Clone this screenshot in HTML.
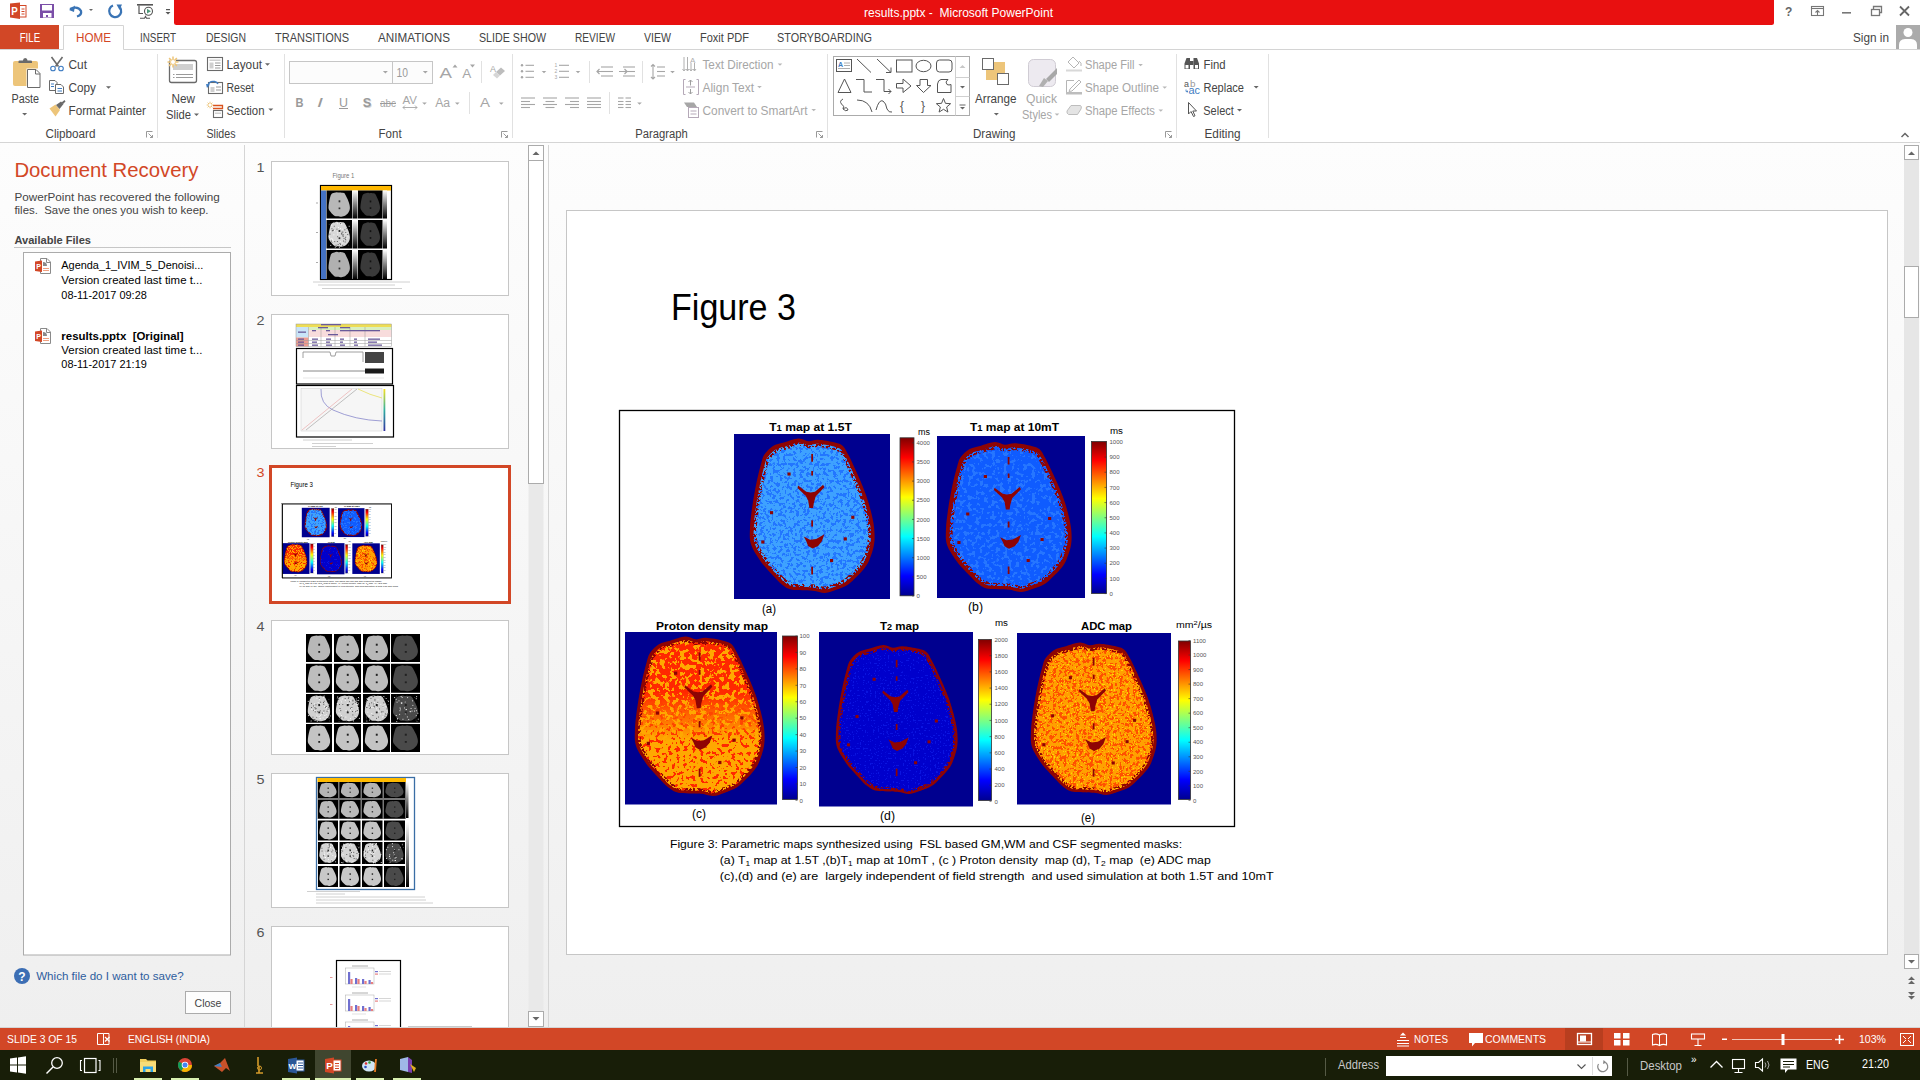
<!DOCTYPE html><html><head><meta charset="utf-8"><title>results.pptx - Microsoft PowerPoint</title><style>html,body{margin:0;padding:0;width:1920px;height:1080px;overflow:hidden;background:#fff}svg{display:block;font-family:"Liberation Sans",sans-serif}text{white-space:pre}</style></head><body><svg width="1920" height="1080" viewBox="0 0 1920 1080" xml:space="preserve"><defs><linearGradient id="jet" x1="0" y1="1" x2="0" y2="0"><stop offset="0" stop-color="#00008F"/><stop offset="0.125" stop-color="#0000FF"/><stop offset="0.375" stop-color="#00FFFF"/><stop offset="0.625" stop-color="#FFFF00"/><stop offset="0.875" stop-color="#FF0000"/><stop offset="1" stop-color="#800000"/></linearGradient><linearGradient id="gbar" x1="0" y1="0" x2="0" y2="1"><stop offset="0" stop-color="#fff"/><stop offset="1" stop-color="#000"/></linearGradient><linearGradient id="vir" x1="0" y1="0" x2="0" y2="1"><stop offset="0" stop-color="#F8E020"/><stop offset="0.5" stop-color="#30B0A0"/><stop offset="1" stop-color="#3030A0"/></linearGradient><filter id="fT1a" x="0" y="0" width="1" height="1" color-interpolation-filters="sRGB"><feTurbulence type="fractalNoise" baseFrequency="0.3" numOctaves="3" seed="3" result="n"/><feComponentTransfer in="n" result="m"><feFuncA type="linear" slope="30" intercept="-16.200"/></feComponentTransfer><feComposite in="SourceGraphic" in2="m" operator="in"/></filter><filter id="fT1b" x="0" y="0" width="1" height="1" color-interpolation-filters="sRGB"><feTurbulence type="fractalNoise" baseFrequency="0.25" numOctaves="3" seed="8" result="n"/><feComponentTransfer in="n" result="m"><feFuncA type="linear" slope="30" intercept="-16.800"/></feComponentTransfer><feComposite in="SourceGraphic" in2="m" operator="in"/></filter><filter id="fPD" x="0" y="0" width="1" height="1" color-interpolation-filters="sRGB"><feTurbulence type="fractalNoise" baseFrequency="0.2" numOctaves="3" seed="5" result="n"/><feComponentTransfer in="n" result="m"><feFuncA type="linear" slope="30" intercept="-13.200"/></feComponentTransfer><feComposite in="SourceGraphic" in2="m" operator="in"/></filter><filter id="fPD2" x="0" y="0" width="1" height="1" color-interpolation-filters="sRGB"><feTurbulence type="fractalNoise" baseFrequency="0.25" numOctaves="3" seed="6" result="n"/><feComponentTransfer in="n" result="m"><feFuncA type="linear" slope="30" intercept="-17.400"/></feComponentTransfer><feComposite in="SourceGraphic" in2="m" operator="in"/></filter><filter id="fPDd" x="0" y="0" width="1" height="1" color-interpolation-filters="sRGB"><feTurbulence type="fractalNoise" baseFrequency="0.9" numOctaves="1" seed="11" result="n"/><feComponentTransfer in="n" result="m"><feFuncA type="linear" slope="30" intercept="-24.000"/></feComponentTransfer><feComposite in="SourceGraphic" in2="m" operator="in"/></filter><filter id="fT2" x="0" y="0" width="1" height="1" color-interpolation-filters="sRGB"><feTurbulence type="fractalNoise" baseFrequency="0.6" numOctaves="1" seed="2" result="n"/><feComponentTransfer in="n" result="m"><feFuncA type="linear" slope="30" intercept="-18.600"/></feComponentTransfer><feComposite in="SourceGraphic" in2="m" operator="in"/></filter><filter id="fADC" x="0" y="0" width="1" height="1" color-interpolation-filters="sRGB"><feTurbulence type="fractalNoise" baseFrequency="0.3" numOctaves="3" seed="4" result="n"/><feComponentTransfer in="n" result="m"><feFuncA type="linear" slope="30" intercept="-15.900"/></feComponentTransfer><feComposite in="SourceGraphic" in2="m" operator="in"/></filter><filter id="fADCy" x="0" y="0" width="1" height="1" color-interpolation-filters="sRGB"><feTurbulence type="fractalNoise" baseFrequency="0.7" numOctaves="1" seed="9" result="n"/><feComponentTransfer in="n" result="m"><feFuncA type="linear" slope="30" intercept="-19.800"/></feComponentTransfer><feComposite in="SourceGraphic" in2="m" operator="in"/></filter><filter id="fRim" x="0" y="0" width="1" height="1" color-interpolation-filters="sRGB"><feTurbulence type="fractalNoise" baseFrequency="0.45" numOctaves="2" seed="12" result="n"/><feComponentTransfer in="n" result="m"><feFuncA type="linear" slope="30" intercept="-15.000"/></feComponentTransfer><feComposite in="SourceGraphic" in2="m" operator="in"/></filter></defs><rect x="0" y="0" width="1920" height="25" fill="#ffffff"/><path d="M174 0H1774V22.5Q1774 25 1771.5 25H176.5Q174 25 174 22.5Z" fill="#E81010"/><rect x="19.5" y="5.5" width="6.5" height="11.5" fill="#fff" stroke="#D24726" stroke-width="1"/><line x1="21.5" y1="9" x2="24.5" y2="9" stroke="#D24726" stroke-width="1"/><line x1="21.5" y1="11.5" x2="24.5" y2="11.5" stroke="#D24726" stroke-width="1"/><line x1="21.5" y1="14" x2="24.5" y2="14" stroke="#D24726" stroke-width="1"/><path d="M10 3.5L20 2.5V19L10 17.5Z" fill="#D24726"/><text x="11.2" y="14.8" font-size="10" fill="#fff" font-weight="bold" textLength="6.5" lengthAdjust="spacingAndGlyphs">P</text><rect x="40" y="4" width="14" height="14" fill="#7B4FA8"/><rect x="42" y="5" width="10" height="5.5" fill="#fff"/><rect x="43" y="13" width="8.5" height="4.5" fill="#fff"/><rect x="46" y="15" width="2" height="2" fill="#7B4FA8"/><path d="M70 9 Q78 5.5 81 11 Q82 15 77 16.5" fill="none" stroke="#3A74B5" stroke-width="2.3"/><path d="M69 10L75 5.5L74 12Z" fill="#3A74B5"/><path d="M89 9h4l-2 2z" fill="#666"/><path d="M113 5.5 A6 6 0 1 0 120 7.5" fill="none" stroke="#3A74B5" stroke-width="2.3"/><path d="M116.5 4.5L122 4.5L119.5 10Z" fill="#3A74B5"/><rect x="137" y="4" width="16" height="1.6" fill="#555"/><path d="M139 5.5V13.5H143" fill="none" stroke="#555" stroke-width="1.2"/><circle cx="148.5" cy="11.2" r="4" fill="#fff" stroke="#555" stroke-width="1.1"/><path d="M147 8.8L151 11.2L147 13.6Z" fill="#4E9A7A"/><path d="M140 18.3H144.5L145.5 16.5L146.5 18.3H150" fill="none" stroke="#555" stroke-width="1.1"/><rect x="166" y="9" width="4" height="1.2" fill="#555"/><path d="M165.5 12h5l-2.5 2.5z" fill="#555"/><text x="864" y="17" font-size="13" fill="#fff" textLength="189" lengthAdjust="spacingAndGlyphs">results.pptx -  Microsoft PowerPoint</text><text x="1785" y="16" font-size="12" fill="#666" font-weight="bold">?</text><rect x="1811.5" y="6.5" width="12" height="9" fill="none" stroke="#777" stroke-width="1.1"/><line x1="1811.5" y1="8.5" x2="1823.5" y2="8.5" stroke="#777" stroke-width="1.1"/><path d="M1817.5 15V10.5M1815.5 12.5L1817.5 10.5L1819.5 12.5" fill="none" stroke="#777" stroke-width="1.1"/><rect x="1842" y="12" width="9" height="1.6" fill="#777"/><rect x="1871.5" y="9.5" width="8" height="6" fill="none" stroke="#777" stroke-width="1.3"/><path d="M1873.5 9.5V6.5H1881.5V12.5H1879.5" fill="none" stroke="#777" stroke-width="1.3"/><path d="M1900 6.5L1909 15.5M1909 6.5L1900 15.5" fill="none" stroke="#666" stroke-width="1.8"/><rect x="0" y="25" width="1920" height="25" fill="#fff"/><rect x="0" y="25" width="59" height="25" fill="#D24726"/><text x="19.7" y="42" font-size="13" fill="#fff" textLength="20.5" lengthAdjust="spacingAndGlyphs">FILE</text><path d="M0 49.5H63.5V25.5H123.5V49.5H1920" fill="none" stroke="#D4D4D4" stroke-width="1"/><text x="76" y="42" font-size="13" fill="#D24726" textLength="35" lengthAdjust="spacingAndGlyphs">HOME</text><text x="140" y="42" font-size="13" fill="#444444" textLength="36" lengthAdjust="spacingAndGlyphs">INSERT</text><text x="206" y="42" font-size="13" fill="#444444" textLength="40" lengthAdjust="spacingAndGlyphs">DESIGN</text><text x="275" y="42" font-size="13" fill="#444444" textLength="74" lengthAdjust="spacingAndGlyphs">TRANSITIONS</text><text x="378" y="42" font-size="13" fill="#444444" textLength="72" lengthAdjust="spacingAndGlyphs">ANIMATIONS</text><text x="479" y="42" font-size="13" fill="#444444" textLength="67" lengthAdjust="spacingAndGlyphs">SLIDE SHOW</text><text x="575" y="42" font-size="13" fill="#444444" textLength="40" lengthAdjust="spacingAndGlyphs">REVIEW</text><text x="644" y="42" font-size="13" fill="#444444" textLength="27" lengthAdjust="spacingAndGlyphs">VIEW</text><text x="700" y="42" font-size="13" fill="#444444" textLength="49" lengthAdjust="spacingAndGlyphs">Foxit PDF</text><text x="777" y="42" font-size="13" fill="#444444" textLength="95" lengthAdjust="spacingAndGlyphs">STORYBOARDING</text><text x="1853" y="41.5" font-size="12.5" fill="#444444" textLength="36" lengthAdjust="spacingAndGlyphs">Sign in</text><rect x="1896" y="25" width="24" height="24" fill="#ABABAB"/><circle cx="1908" cy="32.5" r="4.5" fill="#fff"/><path d="M1899 49V45Q1899 39.5 1905 39H1911Q1917 39.5 1917 45V49Z" fill="#fff"/><rect x="0" y="50" width="1920" height="92" fill="#ffffff"/><line x1="0" y1="142.5" x2="1920" y2="142.5" stroke="#D5D5D5" stroke-width="1"/><path d="M13 63Q13 61 15 61H36Q38 61 38 63V84Q38 86 36 86H15Q13 86 13 84Z" fill="#EDC57A"/><path d="M18.5 63V61.5Q18.5 60.5 19.5 60.5H23Q23 58 25.2 58Q27.5 58 27.5 60.5H31Q32 60.5 32 61.5V63Z" fill="#6A6A6A"/><rect x="26.5" y="68.5" width="14" height="19" fill="#fff"/><path d="M27.5 69.5H36L40 73.5V87.5H27.5Z" fill="#fff" stroke="#6A6A6A" stroke-width="1"/><path d="M35.5 69.5V74H40" fill="none" stroke="#6A6A6A" stroke-width="1"/><text x="11.5" y="103" font-size="12" fill="#444444" textLength="27.5" lengthAdjust="spacingAndGlyphs">Paste</text><path d="M22.1 113h5.0l-2.5 2.5z" fill="#666"/><path d="M51.5 57L58.5 66.5M62.5 57L55.5 66.5" fill="none" stroke="#6A6A6A" stroke-width="1.6"/><circle cx="53" cy="68.5" r="2.3" fill="none" stroke="#3E7CC2" stroke-width="1.1"/><circle cx="61" cy="68.5" r="2.3" fill="none" stroke="#3E7CC2" stroke-width="1.1"/><text x="68.5" y="69" font-size="12" fill="#444444" textLength="18.5" lengthAdjust="spacingAndGlyphs">Cut</text><path d="M49.5 80.5H55L57 82.5V90.5H49.5Z" fill="#fff" stroke="#6A6A6A" stroke-width="1"/><path d="M55.5 84.5H61L63.5 87V93.5H55.5Z" fill="#fff" stroke="#6A6A6A" stroke-width="1"/><line x1="51" y1="84" x2="54" y2="84" stroke="#3E7CC2" stroke-width="1"/><line x1="51" y1="86.5" x2="54" y2="86.5" stroke="#3E7CC2" stroke-width="1"/><line x1="57.5" y1="88.5" x2="62" y2="88.5" stroke="#3E7CC2" stroke-width="1"/><line x1="57.5" y1="91" x2="62" y2="91" stroke="#3E7CC2" stroke-width="1"/><text x="68.5" y="91.5" font-size="12" fill="#444444" textLength="27.5" lengthAdjust="spacingAndGlyphs">Copy</text><path d="M106.0 86.2h5.0l-2.5 2.5z" fill="#666"/><path d="M49.5 108.5L55.5 104.5L60 110L55.5 116.5Z" fill="#EDC57A"/><path d="M56 105L61 101.5L63.5 104L59.5 109Z" fill="#6A6A6A"/><path d="M61.5 102.5L64.5 100L65.5 101.5L63 104Z" fill="#6A6A6A"/><text x="68.5" y="115" font-size="12" fill="#444444" textLength="77.5" lengthAdjust="spacingAndGlyphs">Format Painter</text><text x="45.5" y="137.5" font-size="12" fill="#444444" textLength="50" lengthAdjust="spacingAndGlyphs">Clipboard</text><path d="M146.5 137.5V131.5H152.5M148.5 133.5L152.5 137.5M152.5 135V137.5H150" fill="none" stroke="#999" stroke-width="1"/><line x1="157.5" y1="54" x2="157.5" y2="138" stroke="#E1E1E1" stroke-width="1"/><path d="M169.5 62.5Q169.5 60.5 171.5 60.5H194.5Q196.5 60.5 196.5 62.5V80.5Q196.5 82.5 194.5 82.5H171.5Q169.5 82.5 169.5 80.5Z" fill="#fff" stroke="#6A6A6A" stroke-width="1.3"/><rect x="173" y="64" width="20" height="6" fill="#CFCFCF"/><line x1="173" y1="74.5" x2="174.5" y2="74.5" stroke="#999" stroke-width="1"/><line x1="176" y1="74.5" x2="193" y2="74.5" stroke="#999" stroke-width="1"/><line x1="173" y1="77.5" x2="174.5" y2="77.5" stroke="#999" stroke-width="1"/><line x1="176" y1="77.5" x2="193" y2="77.5" stroke="#999" stroke-width="1"/><circle cx="173" cy="62" r="3.2" fill="#fff"/><path d="M178.50 62.00L167.50 62.00M176.89 65.89L169.11 58.11M173.00 67.50L173.00 56.50M169.11 65.89L176.89 58.11" fill="none" stroke="#EDC57A" stroke-width="1.5"/><circle cx="173" cy="62" r="2" fill="#fff"/><text x="171.5" y="103" font-size="12" fill="#444444" textLength="23.5" lengthAdjust="spacingAndGlyphs">New</text><text x="166" y="118.7" font-size="12" fill="#444444" textLength="25" lengthAdjust="spacingAndGlyphs">Slide</text><path d="M194.0 113.5h5.0l-2.5 2.5z" fill="#666"/><rect x="207.5" y="57.5" width="15" height="13" fill="#fff" stroke="#6A6A6A" stroke-width="1.1"/><rect x="209.5" y="59.5" width="11" height="1.5" fill="#CFCFCF"/><rect x="209.5" y="62.5" width="4" height="6" fill="#CFCFCF"/><line x1="215" y1="63" x2="220.5" y2="63" stroke="#999" stroke-width="1"/><line x1="215" y1="65.5" x2="220.5" y2="65.5" stroke="#999" stroke-width="1"/><line x1="215" y1="68" x2="220.5" y2="68" stroke="#999" stroke-width="1"/><text x="226.5" y="69" font-size="12" fill="#444444" textLength="35.5" lengthAdjust="spacingAndGlyphs">Layout</text><path d="M265.0 63.2h5.0l-2.5 2.5z" fill="#666"/><rect x="208.5" y="82.5" width="14" height="11" fill="#fff" stroke="#6A6A6A" stroke-width="1.1"/><rect x="210.5" y="87" width="4" height="5" fill="#CFCFCF"/><line x1="216" y1="87" x2="221" y2="87" stroke="#999" stroke-width="1"/><line x1="216" y1="90" x2="221" y2="90" stroke="#999" stroke-width="1"/><path d="M207.5 86.5Q209 80.5 214.5 81.5Q217 82 218 84" fill="none" stroke="#3E7CC2" stroke-width="1.4"/><path d="M206 84L210 84.5L207 88Z" fill="#3E7CC2"/><text x="226.5" y="91.5" font-size="12" fill="#444444" textLength="27.5" lengthAdjust="spacingAndGlyphs">Reset</text><path d="M213 105.5H222.5V108.5H213" fill="none" stroke="#D9531E" stroke-width="1.3"/><rect x="213.5" y="110.5" width="9" height="7" fill="#fff" stroke="#6A6A6A" stroke-width="1.1"/><rect x="215" y="112.5" width="6" height="1.5" fill="#CFCFCF"/><path d="M213.30 105.00L206.70 105.00M212.33 107.33L207.67 102.67M210.00 108.30L210.00 101.70M207.67 107.33L212.33 102.67" fill="none" stroke="#EDC57A" stroke-width="1"/><circle cx="210" cy="105" r="1.2" fill="#fff"/><text x="226.5" y="115" font-size="12" fill="#444444" textLength="38" lengthAdjust="spacingAndGlyphs">Section</text><path d="M268.3 108.5h5.0l-2.5 2.5z" fill="#666"/><text x="206.5" y="137.5" font-size="12" fill="#444444" textLength="29" lengthAdjust="spacingAndGlyphs">Slides</text><line x1="284.5" y1="54" x2="284.5" y2="138" stroke="#E1E1E1" stroke-width="1"/><rect x="289.5" y="61.5" width="103" height="22" fill="#FCFCFC" stroke="#C6C6C6" stroke-width="1"/><rect x="392.5" y="61.5" width="40" height="22" fill="#FCFCFC" stroke="#C6C6C6" stroke-width="1"/><path d="M382.9 71h5.0l-2.5 2.5z" fill="#A6A6A6"/><path d="M422.8 71h5.0l-2.5 2.5z" fill="#A6A6A6"/><text x="396.5" y="76.7" font-size="12" fill="#9A9A9A" textLength="11.5" lengthAdjust="spacingAndGlyphs">10</text><text x="439.5" y="77.7" font-size="15" fill="#A6A6A6" textLength="12.5" lengthAdjust="spacingAndGlyphs">A</text><path d="M452.5 67.5L455 64.5L457.5 67.5Z" fill="#A6A6A6"/><text x="462.2" y="77.7" font-size="12" fill="#A6A6A6" textLength="9" lengthAdjust="spacingAndGlyphs">A</text><path d="M470 64.5H475L472.5 67.5Z" fill="#A6A6A6"/><line x1="481.5" y1="61" x2="481.5" y2="83" stroke="#E1E1E1" stroke-width="1"/><text x="490" y="72" font-size="9" fill="#A6A6A6">A</text><path d="M496 72L501 67.5L505 71L500 75.5Z" fill="#BDBDBD"/><path d="M493 75L496 72L500 75.5L497 78.5Z" fill="#D6D6D6"/><text x="295.5" y="106.8" font-size="12" fill="#9A9A9A" font-weight="bold" textLength="8" lengthAdjust="spacingAndGlyphs">B</text><text x="317" y="106.8" font-size="12" fill="#9A9A9A" textLength="6" lengthAdjust="spacingAndGlyphs" style="font-style:italic">I</text><text x="339" y="106.8" font-size="12" fill="#9A9A9A" textLength="9" lengthAdjust="spacingAndGlyphs">U</text><line x1="339" y1="108.5" x2="348" y2="108.5" stroke="#9A9A9A" stroke-width="1"/><text x="363.5" y="107.5" font-size="12" fill="#D4D4D4" font-weight="bold" textLength="8.5" lengthAdjust="spacingAndGlyphs">S</text><text x="362.7" y="106.8" font-size="12" fill="#9A9A9A" font-weight="bold" textLength="8.5" lengthAdjust="spacingAndGlyphs">S</text><text x="380" y="107" font-size="11" fill="#A6A6A6" textLength="16" lengthAdjust="spacingAndGlyphs">abc</text><line x1="380" y1="103.5" x2="396" y2="103.5" stroke="#9A9A9A" stroke-width="1"/><text x="402.5" y="104" font-size="10" fill="#A6A6A6" textLength="14.5" lengthAdjust="spacingAndGlyphs">AV</text><path d="M403 107.5H417M405 105.5L403 107.5L405 109.5M415 105.5L417 107.5L415 109.5" fill="none" stroke="#A6A6A6" stroke-width="0.9"/><path d="M422.2 102.5h4.6l-2.3 2.3z" fill="#A6A6A6"/><text x="435.2" y="106.8" font-size="12" fill="#A6A6A6" textLength="15" lengthAdjust="spacingAndGlyphs">Aa</text><path d="M455.0 102.5h4.6l-2.3 2.3z" fill="#A6A6A6"/><line x1="469.5" y1="92" x2="469.5" y2="114" stroke="#E1E1E1" stroke-width="1"/><text x="480" y="106.8" font-size="13" fill="#A6A6A6" textLength="10" lengthAdjust="spacingAndGlyphs">A</text><path d="M499.0 102.5h4.6l-2.3 2.3z" fill="#A6A6A6"/><text x="378.6" y="137.5" font-size="12" fill="#444444" textLength="23" lengthAdjust="spacingAndGlyphs">Font</text><path d="M501.5 137.5V131.5H507.5M503.5 133.5L507.5 137.5M507.5 135V137.5H505" fill="none" stroke="#999" stroke-width="1"/><line x1="512.5" y1="54" x2="512.5" y2="138" stroke="#E1E1E1" stroke-width="1"/><circle cx="522" cy="65.3" r="1.2" fill="#A6A6A6"/><line x1="525.5" y1="65.3" x2="534" y2="65.3" stroke="#A6A6A6" stroke-width="1.1"/><text x="554.5" y="67.1" font-size="5" fill="#A6A6A6">1</text><line x1="559" y1="65.3" x2="569" y2="65.3" stroke="#A6A6A6" stroke-width="1.1"/><circle cx="522" cy="71.3" r="1.2" fill="#A6A6A6"/><line x1="525.5" y1="71.3" x2="534" y2="71.3" stroke="#A6A6A6" stroke-width="1.1"/><text x="554.5" y="73.1" font-size="5" fill="#A6A6A6">2</text><line x1="559" y1="71.3" x2="569" y2="71.3" stroke="#A6A6A6" stroke-width="1.1"/><circle cx="522" cy="77.3" r="1.2" fill="#A6A6A6"/><line x1="525.5" y1="77.3" x2="534" y2="77.3" stroke="#A6A6A6" stroke-width="1.1"/><text x="554.5" y="79.1" font-size="5" fill="#A6A6A6">3</text><line x1="559" y1="77.3" x2="569" y2="77.3" stroke="#A6A6A6" stroke-width="1.1"/><path d="M541.7 71h4.6l-2.3 2.3z" fill="#A6A6A6"/><path d="M575.7 71h4.6l-2.3 2.3z" fill="#A6A6A6"/><line x1="589.5" y1="61" x2="589.5" y2="83" stroke="#E1E1E1" stroke-width="1"/><line x1="601" y1="67" x2="613" y2="67" stroke="#A6A6A6" stroke-width="1.1"/><line x1="623" y1="67" x2="635" y2="67" stroke="#A6A6A6" stroke-width="1.1"/><line x1="601" y1="71.5" x2="613" y2="71.5" stroke="#A6A6A6" stroke-width="1.1"/><line x1="623" y1="71.5" x2="635" y2="71.5" stroke="#A6A6A6" stroke-width="1.1"/><line x1="601" y1="76" x2="613" y2="76" stroke="#A6A6A6" stroke-width="1.1"/><line x1="623" y1="76" x2="635" y2="76" stroke="#A6A6A6" stroke-width="1.1"/><path d="M597 71.5H605M599.5 69L597 71.5L599.5 74" fill="none" stroke="#A6A6A6" stroke-width="1.2"/><path d="M619 71.5H627M624.5 69L627 71.5L624.5 74" fill="none" stroke="#A6A6A6" stroke-width="1.2"/><line x1="642.5" y1="61" x2="642.5" y2="83" stroke="#E1E1E1" stroke-width="1"/><path d="M653 64.5V79M651 66.5L653 64.5L655 66.5M651 77L653 79L655 77" fill="none" stroke="#A6A6A6" stroke-width="1.1"/><line x1="657" y1="67" x2="665" y2="67" stroke="#A6A6A6" stroke-width="1.1"/><line x1="657" y1="71.5" x2="665" y2="71.5" stroke="#A6A6A6" stroke-width="1.1"/><line x1="657" y1="76" x2="665" y2="76" stroke="#A6A6A6" stroke-width="1.1"/><path d="M670.2 71h4.6l-2.3 2.3z" fill="#A6A6A6"/><line x1="521" y1="98" x2="535" y2="98" stroke="#A6A6A6" stroke-width="1.1"/><line x1="521" y1="101.5" x2="530" y2="101.5" stroke="#A6A6A6" stroke-width="1.1"/><line x1="521" y1="104.5" x2="535" y2="104.5" stroke="#A6A6A6" stroke-width="1.1"/><line x1="521" y1="107.5" x2="530" y2="107.5" stroke="#A6A6A6" stroke-width="1.1"/><line x1="543" y1="98" x2="557" y2="98" stroke="#A6A6A6" stroke-width="1.1"/><line x1="545.5" y1="101.5" x2="554.5" y2="101.5" stroke="#A6A6A6" stroke-width="1.1"/><line x1="543" y1="104.5" x2="557" y2="104.5" stroke="#A6A6A6" stroke-width="1.1"/><line x1="545.5" y1="107.5" x2="554.5" y2="107.5" stroke="#A6A6A6" stroke-width="1.1"/><line x1="565" y1="98" x2="579" y2="98" stroke="#A6A6A6" stroke-width="1.1"/><line x1="570" y1="101.5" x2="579" y2="101.5" stroke="#A6A6A6" stroke-width="1.1"/><line x1="565" y1="104.5" x2="579" y2="104.5" stroke="#A6A6A6" stroke-width="1.1"/><line x1="570" y1="107.5" x2="579" y2="107.5" stroke="#A6A6A6" stroke-width="1.1"/><line x1="587" y1="98" x2="601" y2="98" stroke="#A6A6A6" stroke-width="1.1"/><line x1="587" y1="101.5" x2="601" y2="101.5" stroke="#A6A6A6" stroke-width="1.1"/><line x1="587" y1="104.5" x2="601" y2="104.5" stroke="#A6A6A6" stroke-width="1.1"/><line x1="587" y1="107.5" x2="601" y2="107.5" stroke="#A6A6A6" stroke-width="1.1"/><line x1="609.5" y1="92" x2="609.5" y2="114" stroke="#E1E1E1" stroke-width="1"/><line x1="618" y1="98" x2="623.5" y2="98" stroke="#A6A6A6" stroke-width="1.1"/><line x1="625.5" y1="98" x2="631" y2="98" stroke="#A6A6A6" stroke-width="1.1"/><line x1="618" y1="101.5" x2="623.5" y2="101.5" stroke="#A6A6A6" stroke-width="1.1"/><line x1="625.5" y1="101.5" x2="631" y2="101.5" stroke="#A6A6A6" stroke-width="1.1"/><line x1="618" y1="104.5" x2="623.5" y2="104.5" stroke="#A6A6A6" stroke-width="1.1"/><line x1="625.5" y1="104.5" x2="631" y2="104.5" stroke="#A6A6A6" stroke-width="1.1"/><line x1="618" y1="107.5" x2="623.5" y2="107.5" stroke="#A6A6A6" stroke-width="1.1"/><line x1="625.5" y1="107.5" x2="631" y2="107.5" stroke="#A6A6A6" stroke-width="1.1"/><path d="M637.2 102.5h4.6l-2.3 2.3z" fill="#A6A6A6"/><path d="M684 57V71M687.5 57V71M691 63V71M694.5 63V71" fill="none" stroke="#B0B0B0" stroke-width="1"/><path d="M682.5 69L684 71L685.5 69M686 69L687.5 71L689 69M689.5 69L691 71L692.5 69M693 69L694.5 71L696 69" fill="none" stroke="#B0B0B0" stroke-width="1"/><text x="690" y="63" font-size="8" fill="#B0B0B0">A</text><text x="702.5" y="69" font-size="12" fill="#A6A6A6" textLength="71" lengthAdjust="spacingAndGlyphs">Text Direction</text><path d="M777.7 63.5h4.6l-2.3 2.3z" fill="#B8B8B8"/><path d="M685.5 79.5H683.5V94.5H685.5M696.5 79.5H698.5V94.5H696.5" fill="none" stroke="#B5A9B8" stroke-width="1"/><path d="M690.5 80V85.5M688.5 82L690.5 80L692.5 82M690.5 89V94M688.5 92L690.5 94L692.5 92" fill="none" stroke="#9E9E9E" stroke-width="1"/><line x1="686" y1="87" x2="695" y2="87" stroke="#B5A9B8" stroke-width="1"/><text x="702.5" y="91.5" font-size="12" fill="#A6A6A6" textLength="51.5" lengthAdjust="spacingAndGlyphs">Align Text</text><path d="M757.2 86h4.6l-2.3 2.3z" fill="#B8B8B8"/><path d="M684 102.5H694L697 107H687Z" fill="#A6A6A6"/><rect x="688.5" y="107.5" width="10" height="10" fill="#fff" stroke="#B5A9B8" stroke-width="1"/><line x1="690.5" y1="111" x2="696.5" y2="111" stroke="#B5A9B8" stroke-width="1"/><line x1="690.5" y1="114" x2="696.5" y2="114" stroke="#B5A9B8" stroke-width="1"/><text x="702.5" y="115" font-size="12" fill="#A6A6A6" textLength="105" lengthAdjust="spacingAndGlyphs">Convert to SmartArt</text><path d="M811.4000000000001 109h4.6l-2.3 2.3z" fill="#B8B8B8"/><text x="635.3" y="137.5" font-size="12" fill="#444444" textLength="52.5" lengthAdjust="spacingAndGlyphs">Paragraph</text><path d="M816.5 137.5V131.5H822.5M818.5 133.5L822.5 137.5M822.5 135V137.5H820" fill="none" stroke="#999" stroke-width="1"/><line x1="827.5" y1="54" x2="827.5" y2="138" stroke="#E1E1E1" stroke-width="1"/><rect x="833.5" y="56.5" width="136" height="59" fill="#fff" stroke="#ABABAB" stroke-width="1"/><line x1="955.5" y1="56.5" x2="955.5" y2="115.5" stroke="#D0D0D0" stroke-width="1"/><line x1="955.5" y1="77.5" x2="969.5" y2="77.5" stroke="#D0D0D0" stroke-width="1"/><line x1="955.5" y1="96.5" x2="969.5" y2="96.5" stroke="#D0D0D0" stroke-width="1"/><path d="M959.5 68L962.5 65L965.5 68Z" fill="#C8C8C8"/><path d="M960.0 86h5.0l-2.5 2.5z" fill="#666"/><line x1="959.5" y1="105" x2="965.5" y2="105" stroke="#666" stroke-width="1"/><path d="M960.0 107h5.0l-2.5 2.5z" fill="#666"/><rect x="836.5" y="59.5" width="15" height="12" fill="#fff" stroke="#555" stroke-width="1"/><text x="838" y="66.5" font-size="7" fill="#3E7CC2" font-weight="bold">A</text><line x1="844" y1="63" x2="850" y2="63" stroke="#999" stroke-width="0.8"/><line x1="844" y1="65.5" x2="850" y2="65.5" stroke="#999" stroke-width="0.8"/><line x1="838" y1="68.5" x2="850" y2="68.5" stroke="#999" stroke-width="0.8"/><line x1="857" y1="59" x2="871" y2="72.5" stroke="#555" stroke-width="1"/><line x1="877" y1="59" x2="891" y2="72.5" stroke="#555" stroke-width="1"/><path d="M886 72.5H891V67.5" fill="none" stroke="#555" stroke-width="1"/><rect x="896.5" y="60" width="15.5" height="12" fill="none" stroke="#555" stroke-width="1"/><ellipse cx="923.5" cy="66" rx="7.5" ry="5.7" fill="none" stroke="#555" stroke-width="1"/><rect x="936.5" y="60" width="15.5" height="12" fill="none" stroke="#555" stroke-width="1" rx="3"/><path d="M838 92.5H851L844.5 79Z" fill="none" stroke="#555" stroke-width="1"/><path d="M856 79.5H864V92H872" fill="none" stroke="#555" stroke-width="1"/><path d="M876 79.5H884V91.5H891M888.5 89L891 91.5L888.5 94" fill="none" stroke="#555" stroke-width="1"/><path d="M896.5 83.5H903V79L911 86L903 92.5V88H896.5Z" fill="none" stroke="#555" stroke-width="1"/><path d="M920 79.5H927.5V85.5H931L923.5 92.5L916.5 85.5H920Z" fill="none" stroke="#555" stroke-width="1"/><path d="M937.5 84Q938 80 941 79.5H948Q944.5 82 947 84.5Q949 85.5 951 84.5V92.5H937.5Z" fill="none" stroke="#555" stroke-width="1"/><path d="M843 99Q839 101 841.5 104Q845 106 843 109Q846 112 848 110Q847 106 843 109" fill="none" stroke="#555" stroke-width="1"/><path d="M857 100Q869 100 872 112" fill="none" stroke="#555" stroke-width="1"/><path d="M876 110Q879 99 883 101Q886 103 887 109Q889 113 892 112" fill="none" stroke="#555" stroke-width="1"/><text x="900" y="110" font-size="12" fill="#555">{</text><text x="921" y="110" font-size="12" fill="#555">}</text><path d="M943.50 98.50L945.44 103.33L950.63 103.68L946.64 107.02L947.91 112.07L943.50 109.30L939.09 112.07L940.36 107.02L936.37 103.68L941.56 103.33Z" fill="none" stroke="#555" stroke-width="1"/><rect x="986" y="62" width="19" height="18" fill="#EDC57A"/><rect x="982.5" y="58.5" width="11" height="11" fill="#fff" stroke="#6A6A6A" stroke-width="1"/><rect x="997.5" y="73.5" width="11" height="11" fill="#fff" stroke="#6A6A6A" stroke-width="1"/><text x="975" y="103" font-size="12" fill="#444444" textLength="41.5" lengthAdjust="spacingAndGlyphs">Arrange</text><path d="M993.9 113h5.0l-2.5 2.5z" fill="#666"/><rect x="1028.5" y="59.5" width="27" height="27" fill="#EDEAF0" stroke="#D0CCD4" stroke-width="1" rx="5"/><path d="M1039 86L1044 78L1048 81L1043 87Z" fill="#B0B0B0"/><path d="M1046 79L1057 68V74L1049 82Z" fill="#A8A8A8"/><text x="1026" y="103" font-size="12" fill="#A6A6A6" textLength="31" lengthAdjust="spacingAndGlyphs">Quick</text><text x="1022" y="119" font-size="12" fill="#A6A6A6" textLength="30" lengthAdjust="spacingAndGlyphs">Styles</text><path d="M1054.7 113.5h4.6l-2.3 2.3z" fill="#B8B8B8"/><rect x="1066" y="69.5" width="16" height="2" fill="#D8D8D8"/><path d="M1068 62L1073 57L1079 63L1074 68Z" fill="none" stroke="#B5B5B5" stroke-width="1"/><path d="M1079 61Q1082 63 1081 66" fill="none" stroke="#B5B5B5" stroke-width="1"/><text x="1085" y="69" font-size="12" fill="#A6A6A6" textLength="49.5" lengthAdjust="spacingAndGlyphs">Shape Fill</text><path d="M1138.3 64h4.6l-2.3 2.3z" fill="#B8B8B8"/><path d="M1066.5 92V80.5H1074" fill="none" stroke="#B5B5B5" stroke-width="1"/><path d="M1070 89L1079 80L1081 82L1072 91L1069 91.5Z" fill="none" stroke="#B5B5B5" stroke-width="1"/><rect x="1066" y="92" width="16" height="2.5" fill="#BDBDBD"/><text x="1085" y="91.5" font-size="12" fill="#A6A6A6" textLength="74" lengthAdjust="spacingAndGlyphs">Shape Outline</text><path d="M1162.4 86.5h4.6l-2.3 2.3z" fill="#B8B8B8"/><path d="M1067 111L1071 105.5H1080.5Q1082 106.5 1081 109L1077.5 114.5H1068.5Q1066.5 113.5 1067 111Z" fill="#E4E4E4" stroke="#BDBDBD" stroke-width="1"/><text x="1085" y="115" font-size="12" fill="#A6A6A6" textLength="70" lengthAdjust="spacingAndGlyphs">Shape Effects</text><path d="M1158.5 109.5h4.6l-2.3 2.3z" fill="#B8B8B8"/><text x="973" y="137.5" font-size="12" fill="#444444" textLength="42.5" lengthAdjust="spacingAndGlyphs">Drawing</text><path d="M1165.5 137.5V131.5H1171.5M1167.5 133.5L1171.5 137.5M1171.5 135V137.5H1169" fill="none" stroke="#999" stroke-width="1"/><line x1="1176.5" y1="54" x2="1176.5" y2="138" stroke="#E1E1E1" stroke-width="1"/><path d="M1184.5 69V63.5L1186.5 58H1190V69ZM1199 69V63.5L1197 58H1193.5V69Z" fill="#555"/><rect x="1190" y="61" width="3.5" height="4" fill="#555"/><rect x="1185.5" y="65" width="3" height="3.5" fill="#fff"/><rect x="1195" y="65" width="3" height="3.5" fill="#fff"/><text x="1203.5" y="69" font-size="12" fill="#444444" textLength="22" lengthAdjust="spacingAndGlyphs">Find</text><text x="1184" y="87" font-size="9" fill="#555" textLength="5" lengthAdjust="spacingAndGlyphs">a</text><text x="1190" y="87" font-size="9" fill="#999" textLength="5.5" lengthAdjust="spacingAndGlyphs">b</text><text x="1188.5" y="94" font-size="10" fill="#3E7CC2" textLength="11.5" lengthAdjust="spacingAndGlyphs">ac</text><path d="M1186 89.5V91.5H1188M1186.8 90.5L1188 91.5L1186.8 92.5" fill="none" stroke="#3E7CC2" stroke-width="0.8"/><text x="1203.5" y="91.5" font-size="12" fill="#444444" textLength="40.5" lengthAdjust="spacingAndGlyphs">Replace</text><path d="M1253.7 86h5.0l-2.5 2.5z" fill="#666"/><path d="M1188.5 102.5V114L1191 111.5L1193.5 116.5L1195 115.8L1192.8 111H1196.5Z" fill="#fff" stroke="#555" stroke-width="1"/><text x="1203.3" y="115" font-size="12" fill="#444444" textLength="30.5" lengthAdjust="spacingAndGlyphs">Select</text><path d="M1237.0 109h5.0l-2.5 2.5z" fill="#666"/><text x="1204.5" y="137.5" font-size="12" fill="#444444" textLength="36" lengthAdjust="spacingAndGlyphs">Editing</text><line x1="1268.5" y1="54" x2="1268.5" y2="138" stroke="#E1E1E1" stroke-width="1"/><path d="M1901.5 137L1905 133.5L1908.5 137" fill="none" stroke="#666" stroke-width="1.5"/><defs><linearGradient id="wsg" x1="0" y1="0" x2="0" y2="1"><stop offset="0" stop-color="#FDFDFD"/><stop offset="1" stop-color="#EFEFEF"/></linearGradient></defs><rect x="0" y="143" width="1920" height="885" fill="url(#wsg)"/><text x="14.4" y="176.9" font-size="20" fill="#D24726" textLength="184" lengthAdjust="spacingAndGlyphs">Document Recovery</text><text x="14.4" y="200.9" font-size="11" fill="#444" textLength="205.4" lengthAdjust="spacingAndGlyphs">PowerPoint has recovered the following</text><text x="14.4" y="213.8" font-size="11" fill="#444" textLength="194.1" lengthAdjust="spacingAndGlyphs">files.  Save the ones you wish to keep.</text><text x="14.4" y="243.5" font-size="11.5" fill="#444" font-weight="bold" textLength="76.6" lengthAdjust="spacingAndGlyphs">Available Files</text><line x1="14" y1="247.5" x2="231" y2="247.5" stroke="#C6C6C6" stroke-width="1"/><rect x="23.5" y="252.5" width="207" height="702.5" fill="#fff" stroke="#ABABAB" stroke-width="1"/><path d="M40.5 258.5H47L50.5 262V273.5H40.5Z" fill="#fff" stroke="#8A8A8A" stroke-width="1"/><path d="M46.5 258.5V262.5H50.5" fill="none" stroke="#8A8A8A" stroke-width="1"/><path d="M43 262V266H47Q47 262 43 262Z" fill="#8A8A8A"/><line x1="43" y1="268.5" x2="49" y2="268.5" stroke="#F0A080" stroke-width="1"/><line x1="43" y1="270.5" x2="49" y2="270.5" stroke="#F0A080" stroke-width="1"/><path d="M35 261.5L42 260.5V272L35 271Z" fill="#D24726"/><text x="36.2" y="269.3" font-size="7" fill="#fff" font-weight="bold">P</text><text x="61.3" y="268.5" font-size="11" fill="#000" textLength="142" lengthAdjust="spacingAndGlyphs">Agenda_1_IVIM_5_Denoisi...</text><text x="61.3" y="283.8" font-size="11" fill="#000" textLength="141.1" lengthAdjust="spacingAndGlyphs">Version created last time t...</text><text x="61.3" y="298.6" font-size="11" fill="#000" textLength="85.5" lengthAdjust="spacingAndGlyphs">08-11-2017 09:28</text><path d="M40.5 328.5H47L50.5 332V343.5H40.5Z" fill="#fff" stroke="#8A8A8A" stroke-width="1"/><path d="M46.5 328.5V332.5H50.5" fill="none" stroke="#8A8A8A" stroke-width="1"/><path d="M43 332V336H47Q47 332 43 332Z" fill="#8A8A8A"/><line x1="43" y1="338.5" x2="49" y2="338.5" stroke="#F0A080" stroke-width="1"/><line x1="43" y1="340.5" x2="49" y2="340.5" stroke="#F0A080" stroke-width="1"/><path d="M35 331.5L42 330.5V342L35 341Z" fill="#D24726"/><text x="36.2" y="339.3" font-size="7" fill="#fff" font-weight="bold">P</text><text x="61.3" y="339.7" font-size="11" fill="#000" font-weight="bold" textLength="122.3" lengthAdjust="spacingAndGlyphs">results.pptx  [Original]</text><text x="61.3" y="353.6" font-size="11" fill="#000" textLength="141.1" lengthAdjust="spacingAndGlyphs">Version created last time t...</text><text x="61.3" y="368.3" font-size="11" fill="#000" textLength="85.5" lengthAdjust="spacingAndGlyphs">08-11-2017 21:19</text><circle cx="22" cy="976" r="8" fill="#3C6EB4"/><text x="18.2" y="980.5" font-size="12" fill="#fff" font-weight="bold">?</text><text x="36.2" y="980.2" font-size="11" fill="#2E5D9E" textLength="147.5" lengthAdjust="spacingAndGlyphs">Which file do I want to save?</text><rect x="185.5" y="991.5" width="45" height="22" fill="#FDFDFD" stroke="#ABABAB" stroke-width="1"/><text x="194.5" y="1007.3" font-size="11.5" fill="#444" textLength="27" lengthAdjust="spacingAndGlyphs">Close</text><line x1="244.5" y1="145" x2="244.5" y2="1028" stroke="#D5D5D5" stroke-width="1"/><rect x="528.5" y="145.5" width="15" height="881" fill="#E9E9E9" stroke="#D6D6D6" stroke-width="0"/><rect x="528.5" y="145.5" width="15" height="15" fill="#fff" stroke="#ABABAB" stroke-width="1"/><path d="M532.5 155H539.5L536 151.5Z" fill="#666"/><rect x="528.5" y="160.5" width="15" height="323" fill="#fff" stroke="#ABABAB" stroke-width="1"/><rect x="528.5" y="1011.5" width="15" height="15" fill="#fff" stroke="#ABABAB" stroke-width="1"/><path d="M532.5 1017H539.5L536 1020.5Z" fill="#666"/><line x1="548.5" y1="145" x2="548.5" y2="1028" stroke="#D5D5D5" stroke-width="1"/><rect x="271.5" y="161.5" width="237" height="134" fill="#fff" stroke="#C6C6C6" stroke-width="1"/><text x="256.5" y="171.8" font-size="13" fill="#555" textLength="8" lengthAdjust="spacingAndGlyphs">1</text><rect x="271.5" y="314.5" width="237" height="134" fill="#fff" stroke="#C6C6C6" stroke-width="1"/><text x="256.5" y="324.8" font-size="13" fill="#555" textLength="8" lengthAdjust="spacingAndGlyphs">2</text><rect x="270.5" y="466.5" width="239" height="136" fill="#fff" stroke="#D24726" stroke-width="3"/><text x="256.5" y="477" font-size="13" fill="#D24726" textLength="8" lengthAdjust="spacingAndGlyphs">3</text><rect x="271.5" y="620.5" width="237" height="134" fill="#fff" stroke="#C6C6C6" stroke-width="1"/><text x="256.5" y="630.8" font-size="13" fill="#555" textLength="8" lengthAdjust="spacingAndGlyphs">4</text><rect x="271.5" y="773.5" width="237" height="134" fill="#fff" stroke="#C6C6C6" stroke-width="1"/><text x="256.5" y="783.8" font-size="13" fill="#555" textLength="8" lengthAdjust="spacingAndGlyphs">5</text><rect x="271.5" y="926.5" width="237" height="110" fill="#fff" stroke="#C6C6C6" stroke-width="1"/><text x="256.5" y="936.8" font-size="13" fill="#555" textLength="8" lengthAdjust="spacingAndGlyphs">6</text><rect x="566.5" y="210.5" width="1321" height="744" fill="#fff" stroke="#C6C6C6" stroke-width="1"/><rect x="1904" y="145" width="15" height="822" fill="#E6E6E6"/><rect x="1904.5" y="145.5" width="14" height="14" fill="#fff" stroke="#ABABAB" stroke-width="1"/><path d="M1908 155H1915L1911.5 151.5Z" fill="#666"/><rect x="1904.5" y="266.5" width="14" height="51" fill="#fff" stroke="#ABABAB" stroke-width="1"/><rect x="1904.5" y="954.5" width="14" height="14" fill="#fff" stroke="#ABABAB" stroke-width="1"/><path d="M1908 960H1915L1911.5 963.5Z" fill="#666"/><path d="M1908 980H1915L1911.5 976.5ZM1908 984H1915L1911.5 980.5Z" fill="#666"/><path d="M1908 992H1915L1911.5 995.5ZM1908 996H1915L1911.5 999.5Z" fill="#666"/><g id="slide3"><text x="671" y="319.5" font-size="36" fill="#000" textLength="125" lengthAdjust="spacingAndGlyphs">Figure 3</text><rect x="619.5" y="410.5" width="615" height="416" fill="#fff" stroke="#000" stroke-width="1.3"/><text x="769.2" y="430.7" font-size="11.5" font-weight="bold" fill="#000" textLength="82.6" lengthAdjust="spacingAndGlyphs">T<tspan font-size="9">1</tspan> map at 1.5T</text><rect x="734" y="434" width="156" height="165" fill="#00008F"/><path d="M798.50 438.50C802.60 438.29 805.08 441.07 808.38 441.28C811.67 441.49 813.85 439.53 818.25 439.74C822.65 439.94 830.65 441.49 834.75 442.52C838.85 443.55 840.69 444.01 842.88 445.92C845.06 447.82 846.35 451.25 847.88 453.95C849.40 456.65 850.08 458.04 852.00 462.14C853.92 466.23 857.04 473.06 859.38 478.52C861.71 483.97 864.08 489.43 866.00 494.89C867.92 500.35 869.52 505.81 870.88 511.27C872.23 516.73 873.58 522.19 874.12 527.65C874.67 533.11 874.94 538.59 874.12 544.02C873.31 549.46 870.90 556.18 869.25 560.25C867.60 564.31 866.31 565.70 864.25 568.43C862.19 571.16 859.60 573.89 856.88 576.62C854.15 579.35 851.29 582.62 847.88 584.81C844.46 587.00 840.19 588.39 836.38 589.76C832.56 591.12 828.98 592.85 825.00 593.00C821.02 593.15 818.00 591.22 812.50 590.68C807.00 590.14 797.06 590.73 792.00 589.76C786.94 588.78 785.15 587.00 782.12 584.81C779.10 582.62 776.48 579.35 773.88 576.62C771.27 573.89 768.83 571.16 766.50 568.43C764.17 565.70 762.48 564.31 759.88 560.25C757.27 556.18 752.52 549.46 750.88 544.02C749.23 538.59 749.88 533.11 750.00 527.65C750.12 522.19 750.94 516.73 751.62 511.27C752.31 505.81 753.17 500.35 754.12 494.89C755.08 489.43 756.15 483.97 757.38 478.52C758.60 473.06 760.27 466.23 761.50 462.14C762.73 458.04 762.83 456.65 764.75 453.95C766.67 451.25 769.83 447.82 773.00 445.92C776.17 444.01 779.50 443.75 783.75 442.52C788.00 441.28 794.40 438.71 798.50 438.50Z" fill="#8E0404"/><path d="M799.35 442.68C803.21 442.48 805.53 445.13 808.63 445.32C811.72 445.52 813.77 443.66 817.90 443.86C822.03 444.05 829.54 445.52 833.40 446.50C837.25 447.48 838.97 447.92 841.03 449.73C843.08 451.54 844.30 454.80 845.72 457.37C847.15 459.94 847.80 461.26 849.60 465.16C851.40 469.05 854.33 475.54 856.52 480.73C858.72 485.92 860.95 491.11 862.75 496.30C864.55 501.49 866.05 506.68 867.33 511.87C868.60 517.06 869.87 522.25 870.38 527.44C870.89 532.63 871.14 537.85 870.38 543.01C869.62 548.18 867.35 554.57 865.80 558.44C864.25 562.31 863.04 563.63 861.10 566.22C859.17 568.82 856.74 571.41 854.18 574.01C851.61 576.60 848.93 579.71 845.72 581.79C842.52 583.88 838.50 585.20 834.92 586.50C831.34 587.79 827.98 589.43 824.24 589.58C820.50 589.73 817.67 587.89 812.50 587.38C807.33 586.86 798.00 587.43 793.25 586.50C788.49 585.56 786.81 583.88 783.97 581.79C781.13 579.71 778.67 576.60 776.22 574.01C773.78 571.41 771.49 568.82 769.30 566.22C767.11 563.63 765.52 562.31 763.07 558.44C760.63 554.57 756.17 548.18 754.62 543.01C753.08 537.85 753.68 532.63 753.80 527.44C753.92 522.25 754.68 517.06 755.33 511.87C755.97 506.68 756.77 501.49 757.67 496.30C758.57 491.11 759.57 485.92 760.73 480.73C761.88 475.54 763.45 469.05 764.60 465.16C765.76 461.26 765.85 459.94 767.65 457.37C769.45 454.80 772.43 451.54 775.40 449.73C778.38 447.92 781.51 447.67 785.50 446.50C789.49 445.32 795.50 442.88 799.35 442.68Z" fill="#3EA2FF"/><path d="M799.35 442.68C803.21 442.48 805.53 445.13 808.63 445.32C811.72 445.52 813.77 443.66 817.90 443.86C822.03 444.05 829.54 445.52 833.40 446.50C837.25 447.48 838.97 447.92 841.03 449.73C843.08 451.54 844.30 454.80 845.72 457.37C847.15 459.94 847.80 461.26 849.60 465.16C851.40 469.05 854.33 475.54 856.52 480.73C858.72 485.92 860.95 491.11 862.75 496.30C864.55 501.49 866.05 506.68 867.33 511.87C868.60 517.06 869.87 522.25 870.38 527.44C870.89 532.63 871.14 537.85 870.38 543.01C869.62 548.18 867.35 554.57 865.80 558.44C864.25 562.31 863.04 563.63 861.10 566.22C859.17 568.82 856.74 571.41 854.18 574.01C851.61 576.60 848.93 579.71 845.72 581.79C842.52 583.88 838.50 585.20 834.92 586.50C831.34 587.79 827.98 589.43 824.24 589.58C820.50 589.73 817.67 587.89 812.50 587.38C807.33 586.86 798.00 587.43 793.25 586.50C788.49 585.56 786.81 583.88 783.97 581.79C781.13 579.71 778.67 576.60 776.22 574.01C773.78 571.41 771.49 568.82 769.30 566.22C767.11 563.63 765.52 562.31 763.07 558.44C760.63 554.57 756.17 548.18 754.62 543.01C753.08 537.85 753.68 532.63 753.80 527.44C753.92 522.25 754.68 517.06 755.33 511.87C755.97 506.68 756.77 501.49 757.67 496.30C758.57 491.11 759.57 485.92 760.73 480.73C761.88 475.54 763.45 469.05 764.60 465.16C765.76 461.26 765.85 459.94 767.65 457.37C769.45 454.80 772.43 451.54 775.40 449.73C778.38 447.92 781.51 447.67 785.50 446.50C789.49 445.32 795.50 442.88 799.35 442.68Z" fill="#2276FF" filter="url(#fT1a)"/><path d="M799.35 442.68C803.21 442.48 805.53 445.13 808.63 445.32C811.72 445.52 813.77 443.66 817.90 443.86C822.03 444.05 829.54 445.52 833.40 446.50C837.25 447.48 838.97 447.92 841.03 449.73C843.08 451.54 844.30 454.80 845.72 457.37C847.15 459.94 847.80 461.26 849.60 465.16C851.40 469.05 854.33 475.54 856.52 480.73C858.72 485.92 860.95 491.11 862.75 496.30C864.55 501.49 866.05 506.68 867.33 511.87C868.60 517.06 869.87 522.25 870.38 527.44C870.89 532.63 871.14 537.85 870.38 543.01C869.62 548.18 867.35 554.57 865.80 558.44C864.25 562.31 863.04 563.63 861.10 566.22C859.17 568.82 856.74 571.41 854.18 574.01C851.61 576.60 848.93 579.71 845.72 581.79C842.52 583.88 838.50 585.20 834.92 586.50C831.34 587.79 827.98 589.43 824.24 589.58C820.50 589.73 817.67 587.89 812.50 587.38C807.33 586.86 798.00 587.43 793.25 586.50C788.49 585.56 786.81 583.88 783.97 581.79C781.13 579.71 778.67 576.60 776.22 574.01C773.78 571.41 771.49 568.82 769.30 566.22C767.11 563.63 765.52 562.31 763.07 558.44C760.63 554.57 756.17 548.18 754.62 543.01C753.08 537.85 753.68 532.63 753.80 527.44C753.92 522.25 754.68 517.06 755.33 511.87C755.97 506.68 756.77 501.49 757.67 496.30C758.57 491.11 759.57 485.92 760.73 480.73C761.88 475.54 763.45 469.05 764.60 465.16C765.76 461.26 765.85 459.94 767.65 457.37C769.45 454.80 772.43 451.54 775.40 449.73C778.38 447.92 781.51 447.67 785.50 446.50C789.49 445.32 795.50 442.88 799.35 442.68Z" fill="none" stroke="#8E0404" stroke-width="6.08" filter="url(#fRim)"/><path d="M798.12 485.62L806.25 491.80L810.62 492.57L815.00 491.80L823.12 484.85L824.38 487.17L815.62 496.44L813.75 503.39L813.12 508.02L809.38 508.02L808.12 500.30L805.62 495.67L797.50 487.94Z" fill="#8E0404"/><path d="M803.75 536.61L810.00 539.70L816.25 538.92L824.38 534.29L821.88 541.24L818.12 545.88L812.50 548.50L808.12 545.88L806.25 541.24Z" fill="#8E0404"/><rect x="811.25" y="453.95" width="1.75" height="7.73" fill="#8E0404"/><rect x="811.25" y="470.94" width="1.75" height="4.63" fill="#8E0404"/><rect x="811.25" y="520.38" width="1.75" height="6.18" fill="#8E0404"/><rect x="811.25" y="566.74" width="1.75" height="7.73" fill="#8E0404"/><rect x="770.00" y="511.12" width="3.12" height="3.09" fill="#8E0404"/><rect x="851.25" y="515.75" width="3.12" height="3.09" fill="#8E0404"/><rect x="761.25" y="540.47" width="3.12" height="3.09" fill="#8E0404"/><rect x="843.75" y="537.38" width="3.12" height="3.09" fill="#8E0404"/><rect x="787.50" y="472.49" width="3.12" height="3.09" fill="#8E0404"/><rect x="830.00" y="559.01" width="3.12" height="3.09" fill="#8E0404"/><text x="917.9" y="434.7" font-size="8.5" fill="#000" textLength="12" lengthAdjust="spacingAndGlyphs">ms</text><rect x="900.0" y="437.8" width="14" height="158" fill="url(#jet)" stroke="#333" stroke-width="0.8"/><text x="916.5" y="445.0" font-size="6" fill="#555">4000</text><line x1="912.0" y1="442.8" x2="914.0" y2="442.8" stroke="#333" stroke-width="0.6"/><text x="916.5" y="464.15" font-size="6" fill="#555">3500</text><line x1="912.0" y1="461.95" x2="914.0" y2="461.95" stroke="#333" stroke-width="0.6"/><text x="916.5" y="483.3" font-size="6" fill="#555">3000</text><line x1="912.0" y1="481.1" x2="914.0" y2="481.1" stroke="#333" stroke-width="0.6"/><text x="916.5" y="502.45" font-size="6" fill="#555">2500</text><line x1="912.0" y1="500.25" x2="914.0" y2="500.25" stroke="#333" stroke-width="0.6"/><text x="916.5" y="521.6" font-size="6" fill="#555">2000</text><line x1="912.0" y1="519.4" x2="914.0" y2="519.4" stroke="#333" stroke-width="0.6"/><text x="916.5" y="540.75" font-size="6" fill="#555">1500</text><line x1="912.0" y1="538.55" x2="914.0" y2="538.55" stroke="#333" stroke-width="0.6"/><text x="916.5" y="559.9000000000001" font-size="6" fill="#555">1000</text><line x1="912.0" y1="557.7" x2="914.0" y2="557.7" stroke="#333" stroke-width="0.6"/><text x="916.5" y="579.0500000000001" font-size="6" fill="#555">500</text><line x1="912.0" y1="576.85" x2="914.0" y2="576.85" stroke="#333" stroke-width="0.6"/><text x="916.5" y="598.2" font-size="6" fill="#555">0</text><line x1="912.0" y1="596.0" x2="914.0" y2="596.0" stroke="#333" stroke-width="0.6"/><text x="762" y="612.5" font-size="12" fill="#000" textLength="14" lengthAdjust="spacingAndGlyphs">(a)</text><text x="970" y="430.7" font-size="11.5" font-weight="bold" fill="#000" textLength="89" lengthAdjust="spacingAndGlyphs">T<tspan font-size="9">1</tspan> map at 10mT</text><rect x="937" y="436" width="148" height="162" fill="#00008F"/><path d="M994.89 442.00C999.03 441.80 1001.52 444.50 1004.84 444.70C1008.16 444.90 1010.37 443.00 1014.80 443.20C1019.23 443.40 1027.29 444.90 1031.43 445.90C1035.57 446.90 1037.41 447.35 1039.62 449.20C1041.82 451.05 1043.12 454.38 1044.66 457.00C1046.19 459.62 1046.88 460.97 1048.82 464.95C1050.75 468.93 1053.90 475.55 1056.25 480.85C1058.60 486.15 1061.00 491.45 1062.93 496.75C1064.86 502.05 1066.48 507.35 1067.84 512.65C1069.21 517.95 1070.57 523.25 1071.12 528.55C1071.66 533.85 1071.94 539.18 1071.12 544.45C1070.30 549.73 1067.86 556.25 1066.20 560.20C1064.55 564.15 1063.24 565.50 1061.16 568.15C1059.09 570.80 1056.48 573.45 1053.73 576.10C1050.98 578.75 1048.10 581.92 1044.66 584.05C1041.21 586.17 1036.91 587.52 1033.07 588.85C1029.22 590.18 1025.61 591.85 1021.60 592.00C1017.59 592.15 1014.54 590.27 1009.00 589.75C1003.46 589.23 993.44 589.80 988.34 588.85C983.23 587.90 981.43 586.17 978.38 584.05C975.34 581.92 972.69 578.75 970.07 576.10C967.44 573.45 964.98 570.80 962.63 568.15C960.28 565.50 958.58 564.15 955.95 560.20C953.33 556.25 948.54 549.73 946.88 544.45C945.22 539.18 945.87 533.85 946.00 528.55C946.13 523.25 946.95 517.95 947.64 512.65C948.33 507.35 949.19 502.05 950.16 496.75C951.12 491.45 952.19 486.15 953.43 480.85C954.67 475.55 956.35 468.93 957.59 464.95C958.83 460.97 958.94 459.62 960.87 457.00C962.80 454.38 965.99 451.05 969.18 449.20C972.38 447.35 975.74 447.10 980.02 445.90C984.30 444.70 990.75 442.20 994.89 442.00Z" fill="#8E0404"/><path d="M995.74 446.18C999.63 445.99 1001.97 448.55 1005.09 448.74C1008.21 448.93 1010.28 447.13 1014.45 447.32C1018.61 447.51 1026.19 448.93 1030.08 449.88C1033.96 450.83 1035.70 451.26 1037.77 453.02C1039.84 454.77 1041.07 457.93 1042.51 460.42C1043.95 462.91 1044.60 464.19 1046.41 467.97C1048.23 471.74 1051.19 478.03 1053.40 483.06C1055.61 488.09 1057.86 493.12 1059.68 498.16C1061.49 503.19 1063.01 508.22 1064.29 513.25C1065.58 518.28 1066.86 523.31 1067.37 528.34C1067.88 533.38 1068.14 538.43 1067.37 543.44C1066.60 548.45 1064.31 554.64 1062.75 558.39C1061.19 562.14 1059.97 563.42 1058.02 565.94C1056.06 568.45 1053.62 570.97 1051.03 573.49C1048.45 576.00 1045.74 579.02 1042.51 581.03C1039.27 583.05 1035.23 584.33 1031.61 585.59C1028.00 586.85 1024.61 588.44 1020.84 588.58C1017.07 588.72 1014.21 586.94 1009.00 586.44C1003.79 585.95 994.38 586.49 989.58 585.59C984.79 584.69 983.09 583.05 980.23 581.03C977.37 579.02 974.88 576.00 972.41 573.49C969.95 570.97 967.64 568.45 965.43 565.94C963.22 563.42 961.62 562.14 959.15 558.39C956.69 554.64 952.19 548.45 950.63 543.44C949.07 538.43 949.68 533.38 949.80 528.34C949.92 523.31 950.69 518.28 951.34 513.25C951.99 508.22 952.80 503.19 953.71 498.16C954.61 493.12 955.62 488.09 956.79 483.06C957.95 478.03 959.53 471.74 960.69 467.97C961.86 464.19 961.96 462.91 963.77 460.42C965.59 457.93 968.59 454.77 971.59 453.02C974.59 451.26 977.74 451.02 981.77 449.88C985.79 448.74 991.85 446.37 995.74 446.18Z" fill="#0F5CFF"/><path d="M995.74 446.18C999.63 445.99 1001.97 448.55 1005.09 448.74C1008.21 448.93 1010.28 447.13 1014.45 447.32C1018.61 447.51 1026.19 448.93 1030.08 449.88C1033.96 450.83 1035.70 451.26 1037.77 453.02C1039.84 454.77 1041.07 457.93 1042.51 460.42C1043.95 462.91 1044.60 464.19 1046.41 467.97C1048.23 471.74 1051.19 478.03 1053.40 483.06C1055.61 488.09 1057.86 493.12 1059.68 498.16C1061.49 503.19 1063.01 508.22 1064.29 513.25C1065.58 518.28 1066.86 523.31 1067.37 528.34C1067.88 533.38 1068.14 538.43 1067.37 543.44C1066.60 548.45 1064.31 554.64 1062.75 558.39C1061.19 562.14 1059.97 563.42 1058.02 565.94C1056.06 568.45 1053.62 570.97 1051.03 573.49C1048.45 576.00 1045.74 579.02 1042.51 581.03C1039.27 583.05 1035.23 584.33 1031.61 585.59C1028.00 586.85 1024.61 588.44 1020.84 588.58C1017.07 588.72 1014.21 586.94 1009.00 586.44C1003.79 585.95 994.38 586.49 989.58 585.59C984.79 584.69 983.09 583.05 980.23 581.03C977.37 579.02 974.88 576.00 972.41 573.49C969.95 570.97 967.64 568.45 965.43 565.94C963.22 563.42 961.62 562.14 959.15 558.39C956.69 554.64 952.19 548.45 950.63 543.44C949.07 538.43 949.68 533.38 949.80 528.34C949.92 523.31 950.69 518.28 951.34 513.25C951.99 508.22 952.80 503.19 953.71 498.16C954.61 493.12 955.62 488.09 956.79 483.06C957.95 478.03 959.53 471.74 960.69 467.97C961.86 464.19 961.96 462.91 963.77 460.42C965.59 457.93 968.59 454.77 971.59 453.02C974.59 451.26 977.74 451.02 981.77 449.88C985.79 448.74 991.85 446.37 995.74 446.18Z" fill="#2676FF" filter="url(#fT1b)"/><path d="M995.74 446.18C999.63 445.99 1001.97 448.55 1005.09 448.74C1008.21 448.93 1010.28 447.13 1014.45 447.32C1018.61 447.51 1026.19 448.93 1030.08 449.88C1033.96 450.83 1035.70 451.26 1037.77 453.02C1039.84 454.77 1041.07 457.93 1042.51 460.42C1043.95 462.91 1044.60 464.19 1046.41 467.97C1048.23 471.74 1051.19 478.03 1053.40 483.06C1055.61 488.09 1057.86 493.12 1059.68 498.16C1061.49 503.19 1063.01 508.22 1064.29 513.25C1065.58 518.28 1066.86 523.31 1067.37 528.34C1067.88 533.38 1068.14 538.43 1067.37 543.44C1066.60 548.45 1064.31 554.64 1062.75 558.39C1061.19 562.14 1059.97 563.42 1058.02 565.94C1056.06 568.45 1053.62 570.97 1051.03 573.49C1048.45 576.00 1045.74 579.02 1042.51 581.03C1039.27 583.05 1035.23 584.33 1031.61 585.59C1028.00 586.85 1024.61 588.44 1020.84 588.58C1017.07 588.72 1014.21 586.94 1009.00 586.44C1003.79 585.95 994.38 586.49 989.58 585.59C984.79 584.69 983.09 583.05 980.23 581.03C977.37 579.02 974.88 576.00 972.41 573.49C969.95 570.97 967.64 568.45 965.43 565.94C963.22 563.42 961.62 562.14 959.15 558.39C956.69 554.64 952.19 548.45 950.63 543.44C949.07 538.43 949.68 533.38 949.80 528.34C949.92 523.31 950.69 518.28 951.34 513.25C951.99 508.22 952.80 503.19 953.71 498.16C954.61 493.12 955.62 488.09 956.79 483.06C957.95 478.03 959.53 471.74 960.69 467.97C961.86 464.19 961.96 462.91 963.77 460.42C965.59 457.93 968.59 454.77 971.59 453.02C974.59 451.26 977.74 451.02 981.77 449.88C985.79 448.74 991.85 446.37 995.74 446.18Z" fill="none" stroke="#8E0404" stroke-width="6.08" filter="url(#fRim)"/><path d="M994.51 487.75L1002.70 493.75L1007.11 494.50L1011.52 493.75L1019.71 487.00L1020.97 489.25L1012.15 498.25L1010.26 505.00L1009.63 509.50L1005.85 509.50L1004.59 502.00L1002.07 497.50L993.88 490.00Z" fill="#8E0404"/><path d="M1000.18 537.25L1006.48 540.25L1012.78 539.50L1020.97 535.00L1018.45 541.75L1014.67 546.25L1009.00 548.80L1004.59 546.25L1002.70 541.75Z" fill="#8E0404"/><rect x="1007.74" y="457.00" width="1.76" height="7.50" fill="#8E0404"/><rect x="1007.74" y="473.50" width="1.76" height="4.50" fill="#8E0404"/><rect x="1007.74" y="521.50" width="1.76" height="6.00" fill="#8E0404"/><rect x="1007.74" y="566.50" width="1.76" height="7.50" fill="#8E0404"/><rect x="966.16" y="512.50" width="3.15" height="3.00" fill="#8E0404"/><rect x="1048.06" y="517.00" width="3.15" height="3.00" fill="#8E0404"/><rect x="957.34" y="541.00" width="3.15" height="3.00" fill="#8E0404"/><rect x="1040.50" y="538.00" width="3.15" height="3.00" fill="#8E0404"/><rect x="983.80" y="475.00" width="3.15" height="3.00" fill="#8E0404"/><rect x="1026.64" y="559.00" width="3.15" height="3.00" fill="#8E0404"/><text x="1110" y="434" font-size="8.5" fill="#000" textLength="13" lengthAdjust="spacingAndGlyphs">ms</text><rect x="1091.5" y="441.5" width="15" height="152" fill="url(#jet)" stroke="#333" stroke-width="0.8"/><text x="1109.5" y="444.09999999999997" font-size="6" fill="#555">1000</text><line x1="1104.5" y1="441.9" x2="1106.5" y2="441.9" stroke="#333" stroke-width="0.6"/><text x="1109.5" y="459.27" font-size="6" fill="#555">900</text><line x1="1104.5" y1="457.07" x2="1106.5" y2="457.07" stroke="#333" stroke-width="0.6"/><text x="1109.5" y="474.44" font-size="6" fill="#555">800</text><line x1="1104.5" y1="472.24" x2="1106.5" y2="472.24" stroke="#333" stroke-width="0.6"/><text x="1109.5" y="489.60999999999996" font-size="6" fill="#555">700</text><line x1="1104.5" y1="487.40999999999997" x2="1106.5" y2="487.40999999999997" stroke="#333" stroke-width="0.6"/><text x="1109.5" y="504.78" font-size="6" fill="#555">600</text><line x1="1104.5" y1="502.58" x2="1106.5" y2="502.58" stroke="#333" stroke-width="0.6"/><text x="1109.5" y="519.95" font-size="6" fill="#555">500</text><line x1="1104.5" y1="517.75" x2="1106.5" y2="517.75" stroke="#333" stroke-width="0.6"/><text x="1109.5" y="535.12" font-size="6" fill="#555">400</text><line x1="1104.5" y1="532.92" x2="1106.5" y2="532.92" stroke="#333" stroke-width="0.6"/><text x="1109.5" y="550.2900000000001" font-size="6" fill="#555">300</text><line x1="1104.5" y1="548.09" x2="1106.5" y2="548.09" stroke="#333" stroke-width="0.6"/><text x="1109.5" y="565.46" font-size="6" fill="#555">200</text><line x1="1104.5" y1="563.26" x2="1106.5" y2="563.26" stroke="#333" stroke-width="0.6"/><text x="1109.5" y="580.6300000000001" font-size="6" fill="#555">100</text><line x1="1104.5" y1="578.4300000000001" x2="1106.5" y2="578.4300000000001" stroke="#333" stroke-width="0.6"/><text x="1109.5" y="595.8000000000001" font-size="6" fill="#555">0</text><line x1="1104.5" y1="593.6" x2="1106.5" y2="593.6" stroke="#333" stroke-width="0.6"/><text x="968" y="610.5" font-size="12" fill="#000" textLength="15" lengthAdjust="spacingAndGlyphs">(b)</text><text x="656" y="629.5" font-size="11.5" fill="#000" font-weight="bold" textLength="112" lengthAdjust="spacingAndGlyphs">Proton density map</text><rect x="625" y="632" width="152" height="172.5" fill="#00008F"/><path d="M685.44 636.50C689.71 636.29 692.29 639.16 695.71 639.37C699.13 639.58 701.41 637.56 705.98 637.78C710.55 637.99 718.87 639.58 723.14 640.65C727.41 641.71 729.32 642.19 731.59 644.16C733.87 646.12 735.21 649.66 736.79 652.45C738.37 655.24 739.09 656.68 741.08 660.90C743.07 665.13 746.32 672.17 748.75 677.81C751.18 683.45 753.65 689.08 755.64 694.72C757.63 700.35 759.30 705.99 760.71 711.62C762.12 717.26 763.53 722.90 764.09 728.53C764.65 734.17 764.94 739.83 764.09 745.44C763.25 751.05 760.73 757.99 759.02 762.19C757.31 766.39 755.97 767.82 753.82 770.64C751.68 773.46 748.99 776.28 746.15 779.09C743.31 781.91 740.34 785.29 736.79 787.55C733.24 789.81 728.80 791.24 724.83 792.65C720.87 794.06 717.14 795.84 713.00 796.00C708.86 796.16 705.72 794.17 700.00 793.61C694.28 793.05 683.94 793.66 678.68 792.65C673.41 791.64 671.55 789.81 668.41 787.55C665.27 785.29 662.54 781.91 659.83 779.09C657.12 776.28 654.59 773.46 652.16 770.64C649.73 767.82 647.98 766.39 645.27 762.19C642.56 757.99 637.62 751.05 635.91 745.44C634.20 739.83 634.87 734.17 635.00 728.53C635.13 722.90 635.98 717.26 636.69 711.62C637.41 705.99 638.29 700.35 639.29 694.72C640.29 689.08 641.39 683.45 642.67 677.81C643.95 672.17 645.68 665.13 646.96 660.90C648.24 656.68 648.35 655.24 650.34 652.45C652.33 649.66 655.63 646.12 658.92 644.16C662.21 642.19 665.68 641.92 670.10 640.65C674.52 639.37 681.17 636.71 685.44 636.50Z" fill="#8E0404"/><path d="M686.16 640.02C690.21 639.82 692.67 642.57 695.92 642.78C699.18 642.98 701.34 641.04 705.69 641.24C710.03 641.45 717.94 642.98 722.00 644.00C726.06 645.02 727.87 645.48 730.03 647.37C732.20 649.26 733.48 652.65 734.98 655.33C736.48 658.01 737.16 659.39 739.06 663.44C740.95 667.50 744.04 674.26 746.35 679.67C748.66 685.08 751.01 690.49 752.90 695.90C754.80 701.31 756.38 706.72 757.72 712.13C759.06 717.54 760.40 722.95 760.93 728.36C761.47 733.77 761.74 739.20 760.93 744.59C760.13 749.97 757.74 756.63 756.11 760.66C754.49 764.69 753.21 766.07 751.17 768.78C749.13 771.48 746.58 774.19 743.88 776.89C741.18 779.60 738.36 782.84 734.98 785.01C731.60 787.17 727.38 788.55 723.61 789.90C719.84 791.26 716.29 792.97 712.36 793.12C708.43 793.27 705.44 791.36 700.00 790.82C694.56 790.29 684.74 790.87 679.73 789.90C674.72 788.94 672.95 787.17 669.97 785.01C666.98 782.84 664.38 779.60 661.81 776.89C659.23 774.19 656.82 771.48 654.52 768.78C652.21 766.07 650.54 764.69 647.96 760.66C645.39 756.63 640.69 749.97 639.07 744.59C637.44 739.20 638.08 733.77 638.20 728.36C638.32 722.95 639.13 717.54 639.81 712.13C640.49 706.72 641.33 701.31 642.28 695.90C643.23 690.49 644.28 685.08 645.49 679.67C646.71 674.26 648.36 667.50 649.57 663.44C650.79 659.39 650.89 658.01 652.78 655.33C654.68 652.65 657.81 649.26 660.94 647.37C664.07 645.48 667.37 645.23 671.57 644.00C675.77 642.78 682.10 640.22 686.16 640.02Z" fill="#FFA800"/><linearGradient id="gmask635top" gradientUnits="userSpaceOnUse" x1="0" y1="692.325" x2="0" y2="740.175"><stop offset="0" stop-color="#fff"/><stop offset="1" stop-color="#000"/></linearGradient><mask id="mask635top" maskUnits="userSpaceOnUse" x="630" y="631.5" width="140" height="169.5"><rect x="630" y="631.5" width="140" height="169.5" fill="url(#gmask635top)"/></mask><g mask="url(#mask635top)"><path d="M686.16 640.02C690.21 639.82 692.67 642.57 695.92 642.78C699.18 642.98 701.34 641.04 705.69 641.24C710.03 641.45 717.94 642.98 722.00 644.00C726.06 645.02 727.87 645.48 730.03 647.37C732.20 649.26 733.48 652.65 734.98 655.33C736.48 658.01 737.16 659.39 739.06 663.44C740.95 667.50 744.04 674.26 746.35 679.67C748.66 685.08 751.01 690.49 752.90 695.90C754.80 701.31 756.38 706.72 757.72 712.13C759.06 717.54 760.40 722.95 760.93 728.36C761.47 733.77 761.74 739.20 760.93 744.59C760.13 749.97 757.74 756.63 756.11 760.66C754.49 764.69 753.21 766.07 751.17 768.78C749.13 771.48 746.58 774.19 743.88 776.89C741.18 779.60 738.36 782.84 734.98 785.01C731.60 787.17 727.38 788.55 723.61 789.90C719.84 791.26 716.29 792.97 712.36 793.12C708.43 793.27 705.44 791.36 700.00 790.82C694.56 790.29 684.74 790.87 679.73 789.90C674.72 788.94 672.95 787.17 669.97 785.01C666.98 782.84 664.38 779.60 661.81 776.89C659.23 774.19 656.82 771.48 654.52 768.78C652.21 766.07 650.54 764.69 647.96 760.66C645.39 756.63 640.69 749.97 639.07 744.59C637.44 739.20 638.08 733.77 638.20 728.36C638.32 722.95 639.13 717.54 639.81 712.13C640.49 706.72 641.33 701.31 642.28 695.90C643.23 690.49 644.28 685.08 645.49 679.67C646.71 674.26 648.36 667.50 649.57 663.44C650.79 659.39 650.89 658.01 652.78 655.33C654.68 652.65 657.81 649.26 660.94 647.37C664.07 645.48 667.37 645.23 671.57 644.00C675.77 642.78 682.10 640.22 686.16 640.02Z" fill="#FF2800" filter="url(#fPD)"/></g><linearGradient id="gmask635bot" gradientUnits="userSpaceOnUse" x1="0" y1="692.325" x2="0" y2="740.175"><stop offset="0" stop-color="#000"/><stop offset="1" stop-color="#fff"/></linearGradient><mask id="mask635bot" maskUnits="userSpaceOnUse" x="630" y="631.5" width="140" height="169.5"><rect x="630" y="631.5" width="140" height="169.5" fill="url(#gmask635bot)"/></mask><g mask="url(#mask635bot)"><path d="M686.16 640.02C690.21 639.82 692.67 642.57 695.92 642.78C699.18 642.98 701.34 641.04 705.69 641.24C710.03 641.45 717.94 642.98 722.00 644.00C726.06 645.02 727.87 645.48 730.03 647.37C732.20 649.26 733.48 652.65 734.98 655.33C736.48 658.01 737.16 659.39 739.06 663.44C740.95 667.50 744.04 674.26 746.35 679.67C748.66 685.08 751.01 690.49 752.90 695.90C754.80 701.31 756.38 706.72 757.72 712.13C759.06 717.54 760.40 722.95 760.93 728.36C761.47 733.77 761.74 739.20 760.93 744.59C760.13 749.97 757.74 756.63 756.11 760.66C754.49 764.69 753.21 766.07 751.17 768.78C749.13 771.48 746.58 774.19 743.88 776.89C741.18 779.60 738.36 782.84 734.98 785.01C731.60 787.17 727.38 788.55 723.61 789.90C719.84 791.26 716.29 792.97 712.36 793.12C708.43 793.27 705.44 791.36 700.00 790.82C694.56 790.29 684.74 790.87 679.73 789.90C674.72 788.94 672.95 787.17 669.97 785.01C666.98 782.84 664.38 779.60 661.81 776.89C659.23 774.19 656.82 771.48 654.52 768.78C652.21 766.07 650.54 764.69 647.96 760.66C645.39 756.63 640.69 749.97 639.07 744.59C637.44 739.20 638.08 733.77 638.20 728.36C638.32 722.95 639.13 717.54 639.81 712.13C640.49 706.72 641.33 701.31 642.28 695.90C643.23 690.49 644.28 685.08 645.49 679.67C646.71 674.26 648.36 667.50 649.57 663.44C650.79 659.39 650.89 658.01 652.78 655.33C654.68 652.65 657.81 649.26 660.94 647.37C664.07 645.48 667.37 645.23 671.57 644.00C675.77 642.78 682.10 640.22 686.16 640.02Z" fill="#FF2800" filter="url(#fPD2)"/></g><path d="M686.16 640.02C690.21 639.82 692.67 642.57 695.92 642.78C699.18 642.98 701.34 641.04 705.69 641.24C710.03 641.45 717.94 642.98 722.00 644.00C726.06 645.02 727.87 645.48 730.03 647.37C732.20 649.26 733.48 652.65 734.98 655.33C736.48 658.01 737.16 659.39 739.06 663.44C740.95 667.50 744.04 674.26 746.35 679.67C748.66 685.08 751.01 690.49 752.90 695.90C754.80 701.31 756.38 706.72 757.72 712.13C759.06 717.54 760.40 722.95 760.93 728.36C761.47 733.77 761.74 739.20 760.93 744.59C760.13 749.97 757.74 756.63 756.11 760.66C754.49 764.69 753.21 766.07 751.17 768.78C749.13 771.48 746.58 774.19 743.88 776.89C741.18 779.60 738.36 782.84 734.98 785.01C731.60 787.17 727.38 788.55 723.61 789.90C719.84 791.26 716.29 792.97 712.36 793.12C708.43 793.27 705.44 791.36 700.00 790.82C694.56 790.29 684.74 790.87 679.73 789.90C674.72 788.94 672.95 787.17 669.97 785.01C666.98 782.84 664.38 779.60 661.81 776.89C659.23 774.19 656.82 771.48 654.52 768.78C652.21 766.07 650.54 764.69 647.96 760.66C645.39 756.63 640.69 749.97 639.07 744.59C637.44 739.20 638.08 733.77 638.20 728.36C638.32 722.95 639.13 717.54 639.81 712.13C640.49 706.72 641.33 701.31 642.28 695.90C643.23 690.49 644.28 685.08 645.49 679.67C646.71 674.26 648.36 667.50 649.57 663.44C650.79 659.39 650.89 658.01 652.78 655.33C654.68 652.65 657.81 649.26 660.94 647.37C664.07 645.48 667.37 645.23 671.57 644.00C675.77 642.78 682.10 640.22 686.16 640.02Z" fill="#8A0000" filter="url(#fPDd)"/><path d="M686.16 640.02C690.21 639.82 692.67 642.57 695.92 642.78C699.18 642.98 701.34 641.04 705.69 641.24C710.03 641.45 717.94 642.98 722.00 644.00C726.06 645.02 727.87 645.48 730.03 647.37C732.20 649.26 733.48 652.65 734.98 655.33C736.48 658.01 737.16 659.39 739.06 663.44C740.95 667.50 744.04 674.26 746.35 679.67C748.66 685.08 751.01 690.49 752.90 695.90C754.80 701.31 756.38 706.72 757.72 712.13C759.06 717.54 760.40 722.95 760.93 728.36C761.47 733.77 761.74 739.20 760.93 744.59C760.13 749.97 757.74 756.63 756.11 760.66C754.49 764.69 753.21 766.07 751.17 768.78C749.13 771.48 746.58 774.19 743.88 776.89C741.18 779.60 738.36 782.84 734.98 785.01C731.60 787.17 727.38 788.55 723.61 789.90C719.84 791.26 716.29 792.97 712.36 793.12C708.43 793.27 705.44 791.36 700.00 790.82C694.56 790.29 684.74 790.87 679.73 789.90C674.72 788.94 672.95 787.17 669.97 785.01C666.98 782.84 664.38 779.60 661.81 776.89C659.23 774.19 656.82 771.48 654.52 768.78C652.21 766.07 650.54 764.69 647.96 760.66C645.39 756.63 640.69 749.97 639.07 744.59C637.44 739.20 638.08 733.77 638.20 728.36C638.32 722.95 639.13 717.54 639.81 712.13C640.49 706.72 641.33 701.31 642.28 695.90C643.23 690.49 644.28 685.08 645.49 679.67C646.71 674.26 648.36 667.50 649.57 663.44C650.79 659.39 650.89 658.01 652.78 655.33C654.68 652.65 657.81 649.26 660.94 647.37C664.07 645.48 667.37 645.23 671.57 644.00C675.77 642.78 682.10 640.22 686.16 640.02Z" fill="none" stroke="#8E0404" stroke-width="5.120000000000001" filter="url(#fRim)"/><path d="M685.05 685.15L693.50 691.53L698.05 692.33L702.60 691.53L711.05 684.35L712.35 686.74L703.25 696.31L701.30 703.49L700.65 708.27L696.75 708.27L695.45 700.30L692.85 695.51L684.40 687.54Z" fill="#8E0404"/><path d="M690.90 737.78L697.40 740.97L703.90 740.17L712.35 735.39L709.75 742.57L705.85 747.35L700.00 750.06L695.45 747.35L693.50 742.57Z" fill="#8E0404"/><rect x="698.70" y="652.45" width="1.82" height="7.98" fill="#8E0404"/><rect x="698.70" y="670.00" width="1.82" height="4.79" fill="#8E0404"/><rect x="698.70" y="721.03" width="1.82" height="6.38" fill="#8E0404"/><rect x="698.70" y="768.88" width="1.82" height="7.98" fill="#8E0404"/><rect x="655.80" y="711.47" width="3.25" height="3.19" fill="#8E0404"/><rect x="740.30" y="716.25" width="3.25" height="3.19" fill="#8E0404"/><rect x="646.70" y="741.77" width="3.25" height="3.19" fill="#8E0404"/><rect x="732.50" y="738.58" width="3.25" height="3.19" fill="#8E0404"/><rect x="674.00" y="671.59" width="3.25" height="3.19" fill="#8E0404"/><rect x="718.20" y="760.91" width="3.25" height="3.19" fill="#8E0404"/><rect x="782.5" y="636.0" width="15" height="163.5" fill="url(#jet)" stroke="#333" stroke-width="0.8"/><text x="799.5" y="638.2" font-size="6" fill="#555">100</text><line x1="795.5" y1="636.0" x2="797.5" y2="636.0" stroke="#333" stroke-width="0.6"/><text x="799.5" y="654.6400000000001" font-size="6" fill="#555">90</text><line x1="795.5" y1="652.44" x2="797.5" y2="652.44" stroke="#333" stroke-width="0.6"/><text x="799.5" y="671.08" font-size="6" fill="#555">80</text><line x1="795.5" y1="668.88" x2="797.5" y2="668.88" stroke="#333" stroke-width="0.6"/><text x="799.5" y="687.52" font-size="6" fill="#555">70</text><line x1="795.5" y1="685.3199999999999" x2="797.5" y2="685.3199999999999" stroke="#333" stroke-width="0.6"/><text x="799.5" y="703.96" font-size="6" fill="#555">60</text><line x1="795.5" y1="701.76" x2="797.5" y2="701.76" stroke="#333" stroke-width="0.6"/><text x="799.5" y="720.4000000000001" font-size="6" fill="#555">50</text><line x1="795.5" y1="718.2" x2="797.5" y2="718.2" stroke="#333" stroke-width="0.6"/><text x="799.5" y="736.84" font-size="6" fill="#555">40</text><line x1="795.5" y1="734.64" x2="797.5" y2="734.64" stroke="#333" stroke-width="0.6"/><text x="799.5" y="753.28" font-size="6" fill="#555">30</text><line x1="795.5" y1="751.0799999999999" x2="797.5" y2="751.0799999999999" stroke="#333" stroke-width="0.6"/><text x="799.5" y="769.72" font-size="6" fill="#555">20</text><line x1="795.5" y1="767.52" x2="797.5" y2="767.52" stroke="#333" stroke-width="0.6"/><text x="799.5" y="786.1600000000001" font-size="6" fill="#555">10</text><line x1="795.5" y1="783.96" x2="797.5" y2="783.96" stroke="#333" stroke-width="0.6"/><text x="799.5" y="802.6" font-size="6" fill="#555">0</text><line x1="795.5" y1="800.4" x2="797.5" y2="800.4" stroke="#333" stroke-width="0.6"/><text x="692" y="817.5" font-size="12" fill="#000" textLength="14" lengthAdjust="spacingAndGlyphs">(c)</text><text x="880" y="629.5" font-size="11.5" font-weight="bold" fill="#000" textLength="39" lengthAdjust="spacingAndGlyphs">T<tspan font-size="9">2</tspan> map</text><rect x="819" y="632" width="154" height="174.5" fill="#00008F"/><path d="M883.34 645.00C887.34 644.80 889.76 647.48 892.97 647.68C896.19 647.88 898.32 645.99 902.61 646.19C906.90 646.39 914.71 647.88 918.72 648.87C922.72 649.87 924.51 650.31 926.65 652.15C928.78 653.99 930.04 657.29 931.53 659.90C933.01 662.51 933.68 663.85 935.55 667.80C937.42 671.75 940.47 678.33 942.75 683.59C945.03 688.86 947.35 694.12 949.22 699.38C951.09 704.65 952.65 709.91 953.97 715.18C955.30 720.44 956.62 725.71 957.15 730.97C957.67 736.24 957.94 741.53 957.15 746.77C956.35 752.01 953.99 758.49 952.39 762.41C950.78 766.34 949.52 767.68 947.51 770.31C945.50 772.94 942.97 775.57 940.31 778.21C937.65 780.84 934.86 783.99 931.53 786.10C928.19 788.21 924.02 789.55 920.30 790.87C916.58 792.19 913.08 793.85 909.20 794.00C905.32 794.15 902.37 792.29 897.00 791.76C891.63 791.24 881.93 791.81 876.99 790.87C872.05 789.93 870.30 788.21 867.35 786.10C864.41 783.99 861.84 780.84 859.30 778.21C856.76 775.57 854.38 772.94 852.10 770.31C849.83 767.68 848.18 766.34 845.64 762.41C843.10 758.49 838.46 752.01 836.85 746.77C835.25 741.53 835.88 736.24 836.00 730.97C836.12 725.71 836.91 720.44 837.59 715.18C838.26 709.91 839.09 704.65 840.03 699.38C840.96 694.12 842.00 688.86 843.20 683.59C844.40 678.33 846.02 671.75 847.22 667.80C848.42 663.85 848.53 662.51 850.40 659.90C852.27 657.29 855.36 653.99 858.45 652.15C861.54 650.31 864.79 650.07 868.94 648.87C873.09 647.68 879.33 645.20 883.34 645.00Z" fill="#8E0404"/><path d="M883.92 647.86C887.75 647.67 890.07 650.26 893.15 650.45C896.22 650.64 898.27 648.82 902.37 649.01C906.48 649.20 913.96 650.64 917.79 651.60C921.63 652.56 923.34 652.99 925.38 654.76C927.43 656.54 928.63 659.72 930.05 662.24C931.48 664.76 932.12 666.05 933.91 669.86C935.70 673.67 938.62 680.02 940.80 685.10C942.98 690.19 945.20 695.27 946.99 700.35C948.78 705.43 950.28 710.51 951.55 715.59C952.81 720.67 954.08 725.75 954.58 730.83C955.09 735.91 955.34 741.02 954.58 746.08C953.82 751.13 951.57 757.39 950.03 761.17C948.49 764.96 947.28 766.26 945.36 768.80C943.43 771.34 941.01 773.88 938.46 776.42C935.91 778.96 933.25 782.00 930.05 784.04C926.86 786.08 922.87 787.37 919.31 788.64C915.75 789.91 912.40 791.52 908.68 791.66C904.96 791.80 902.14 790.01 897.00 789.50C891.86 789.00 882.58 789.55 877.84 788.64C873.11 787.73 871.44 786.08 868.62 784.04C865.79 782.00 863.34 778.96 860.91 776.42C858.48 773.88 856.20 771.34 854.02 768.80C851.84 766.26 850.26 764.96 847.83 761.17C845.39 757.39 840.96 751.13 839.42 746.08C837.88 741.02 838.48 735.91 838.60 730.83C838.72 725.75 839.48 720.67 840.12 715.59C840.76 710.51 841.56 705.43 842.45 700.35C843.35 695.27 844.34 690.19 845.49 685.10C846.64 680.02 848.20 673.67 849.35 669.86C850.49 666.05 850.59 664.76 852.38 662.24C854.17 659.72 857.13 656.54 860.09 654.76C863.05 652.99 866.16 652.75 870.14 651.60C874.11 650.45 880.08 648.05 883.92 647.86Z" fill="#0000CC"/><path d="M883.92 647.86C887.75 647.67 890.07 650.26 893.15 650.45C896.22 650.64 898.27 648.82 902.37 649.01C906.48 649.20 913.96 650.64 917.79 651.60C921.63 652.56 923.34 652.99 925.38 654.76C927.43 656.54 928.63 659.72 930.05 662.24C931.48 664.76 932.12 666.05 933.91 669.86C935.70 673.67 938.62 680.02 940.80 685.10C942.98 690.19 945.20 695.27 946.99 700.35C948.78 705.43 950.28 710.51 951.55 715.59C952.81 720.67 954.08 725.75 954.58 730.83C955.09 735.91 955.34 741.02 954.58 746.08C953.82 751.13 951.57 757.39 950.03 761.17C948.49 764.96 947.28 766.26 945.36 768.80C943.43 771.34 941.01 773.88 938.46 776.42C935.91 778.96 933.25 782.00 930.05 784.04C926.86 786.08 922.87 787.37 919.31 788.64C915.75 789.91 912.40 791.52 908.68 791.66C904.96 791.80 902.14 790.01 897.00 789.50C891.86 789.00 882.58 789.55 877.84 788.64C873.11 787.73 871.44 786.08 868.62 784.04C865.79 782.00 863.34 778.96 860.91 776.42C858.48 773.88 856.20 771.34 854.02 768.80C851.84 766.26 850.26 764.96 847.83 761.17C845.39 757.39 840.96 751.13 839.42 746.08C837.88 741.02 838.48 735.91 838.60 730.83C838.72 725.75 839.48 720.67 840.12 715.59C840.76 710.51 841.56 705.43 842.45 700.35C843.35 695.27 844.34 690.19 845.49 685.10C846.64 680.02 848.20 673.67 849.35 669.86C850.49 666.05 850.59 664.76 852.38 662.24C854.17 659.72 857.13 656.54 860.09 654.76C863.05 652.99 866.16 652.75 870.14 651.60C874.11 650.45 880.08 648.05 883.92 647.86Z" fill="#0A14E0" filter="url(#fT2)"/><path d="M883.92 647.86C887.75 647.67 890.07 650.26 893.15 650.45C896.22 650.64 898.27 648.82 902.37 649.01C906.48 649.20 913.96 650.64 917.79 651.60C921.63 652.56 923.34 652.99 925.38 654.76C927.43 656.54 928.63 659.72 930.05 662.24C931.48 664.76 932.12 666.05 933.91 669.86C935.70 673.67 938.62 680.02 940.80 685.10C942.98 690.19 945.20 695.27 946.99 700.35C948.78 705.43 950.28 710.51 951.55 715.59C952.81 720.67 954.08 725.75 954.58 730.83C955.09 735.91 955.34 741.02 954.58 746.08C953.82 751.13 951.57 757.39 950.03 761.17C948.49 764.96 947.28 766.26 945.36 768.80C943.43 771.34 941.01 773.88 938.46 776.42C935.91 778.96 933.25 782.00 930.05 784.04C926.86 786.08 922.87 787.37 919.31 788.64C915.75 789.91 912.40 791.52 908.68 791.66C904.96 791.80 902.14 790.01 897.00 789.50C891.86 789.00 882.58 789.55 877.84 788.64C873.11 787.73 871.44 786.08 868.62 784.04C865.79 782.00 863.34 778.96 860.91 776.42C858.48 773.88 856.20 771.34 854.02 768.80C851.84 766.26 850.26 764.96 847.83 761.17C845.39 757.39 840.96 751.13 839.42 746.08C837.88 741.02 838.48 735.91 838.60 730.83C838.72 725.75 839.48 720.67 840.12 715.59C840.76 710.51 841.56 705.43 842.45 700.35C843.35 695.27 844.34 690.19 845.49 685.10C846.64 680.02 848.20 673.67 849.35 669.86C850.49 666.05 850.59 664.76 852.38 662.24C854.17 659.72 857.13 656.54 860.09 654.76C863.05 652.99 866.16 652.75 870.14 651.60C874.11 650.45 880.08 648.05 883.92 647.86Z" fill="none" stroke="#8E0404" stroke-width="4.16" filter="url(#fRim)"/><path d="M882.97 690.45L890.90 696.40L895.17 697.15L899.44 696.40L907.37 689.70L908.59 691.93L900.05 700.88L898.22 707.58L897.61 712.05L893.95 712.05L892.73 704.60L890.29 700.13L882.36 692.68Z" fill="#8E0404"/><path d="M888.46 739.62L894.56 742.60L900.66 741.85L908.59 737.38L906.15 744.09L902.49 748.55L897.00 751.09L892.73 748.55L890.90 744.09Z" fill="#8E0404"/><rect x="895.78" y="659.90" width="1.71" height="7.45" fill="#8E0404"/><rect x="895.78" y="676.29" width="1.71" height="4.47" fill="#8E0404"/><rect x="895.78" y="723.97" width="1.71" height="5.96" fill="#8E0404"/><rect x="895.78" y="768.67" width="1.71" height="7.45" fill="#8E0404"/><rect x="855.52" y="715.03" width="3.05" height="2.98" fill="#8E0404"/><rect x="934.82" y="719.50" width="3.05" height="2.98" fill="#8E0404"/><rect x="846.98" y="743.34" width="3.05" height="2.98" fill="#8E0404"/><rect x="927.50" y="740.36" width="3.05" height="2.98" fill="#8E0404"/><rect x="872.60" y="677.78" width="3.05" height="2.98" fill="#8E0404"/><rect x="914.08" y="761.22" width="3.05" height="2.98" fill="#8E0404"/><text x="995" y="626" font-size="8.5" fill="#000" textLength="13" lengthAdjust="spacingAndGlyphs">ms</text><rect x="978.5" y="639.5" width="13" height="161" fill="url(#jet)" stroke="#333" stroke-width="0.8"/><text x="994.5" y="641.7" font-size="6" fill="#555">2000</text><line x1="989.5" y1="639.5" x2="991.5" y2="639.5" stroke="#333" stroke-width="0.6"/><text x="994.5" y="657.8900000000001" font-size="6" fill="#555">1800</text><line x1="989.5" y1="655.69" x2="991.5" y2="655.69" stroke="#333" stroke-width="0.6"/><text x="994.5" y="674.08" font-size="6" fill="#555">1600</text><line x1="989.5" y1="671.88" x2="991.5" y2="671.88" stroke="#333" stroke-width="0.6"/><text x="994.5" y="690.27" font-size="6" fill="#555">1400</text><line x1="989.5" y1="688.0699999999999" x2="991.5" y2="688.0699999999999" stroke="#333" stroke-width="0.6"/><text x="994.5" y="706.46" font-size="6" fill="#555">1200</text><line x1="989.5" y1="704.26" x2="991.5" y2="704.26" stroke="#333" stroke-width="0.6"/><text x="994.5" y="722.6500000000001" font-size="6" fill="#555">1000</text><line x1="989.5" y1="720.45" x2="991.5" y2="720.45" stroke="#333" stroke-width="0.6"/><text x="994.5" y="738.84" font-size="6" fill="#555">800</text><line x1="989.5" y1="736.64" x2="991.5" y2="736.64" stroke="#333" stroke-width="0.6"/><text x="994.5" y="755.03" font-size="6" fill="#555">600</text><line x1="989.5" y1="752.8299999999999" x2="991.5" y2="752.8299999999999" stroke="#333" stroke-width="0.6"/><text x="994.5" y="771.22" font-size="6" fill="#555">400</text><line x1="989.5" y1="769.02" x2="991.5" y2="769.02" stroke="#333" stroke-width="0.6"/><text x="994.5" y="787.4100000000001" font-size="6" fill="#555">200</text><line x1="989.5" y1="785.21" x2="991.5" y2="785.21" stroke="#333" stroke-width="0.6"/><text x="994.5" y="803.6" font-size="6" fill="#555">0</text><line x1="989.5" y1="801.4" x2="991.5" y2="801.4" stroke="#333" stroke-width="0.6"/><text x="880" y="819.5" font-size="12" fill="#000" textLength="15" lengthAdjust="spacingAndGlyphs">(d)</text><text x="1081" y="629.5" font-size="11.5" fill="#000" font-weight="bold" textLength="51" lengthAdjust="spacingAndGlyphs">ADC map</text><rect x="1017" y="633" width="154" height="171.5" fill="#00008F"/><path d="M1079.89 642.60C1084.02 642.40 1086.52 645.14 1089.84 645.34C1093.16 645.55 1095.37 643.62 1099.80 643.82C1104.23 644.02 1112.29 645.55 1116.43 646.56C1120.57 647.58 1122.41 648.04 1124.62 649.92C1126.82 651.79 1128.12 655.17 1129.66 657.84C1131.19 660.51 1131.88 661.88 1133.82 665.92C1135.75 669.96 1138.90 676.69 1141.25 682.07C1143.60 687.46 1146.00 692.84 1147.93 698.23C1149.86 703.61 1151.48 709.00 1152.84 714.38C1154.21 719.77 1155.57 725.15 1156.12 730.53C1156.66 735.92 1156.94 741.33 1156.12 746.69C1155.30 752.05 1152.86 758.68 1151.20 762.69C1149.55 766.70 1148.24 768.08 1146.16 770.77C1144.09 773.46 1141.48 776.15 1138.73 778.85C1135.98 781.54 1133.10 784.76 1129.66 786.92C1126.21 789.08 1121.91 790.45 1118.07 791.80C1114.22 793.15 1110.61 794.85 1106.60 795.00C1102.59 795.15 1099.54 793.25 1094.00 792.71C1088.46 792.18 1078.44 792.76 1073.34 791.80C1068.23 790.83 1066.43 789.08 1063.38 786.92C1060.34 784.76 1057.69 781.54 1055.07 778.85C1052.44 776.15 1049.98 773.46 1047.63 770.77C1045.28 768.08 1043.58 766.70 1040.95 762.69C1038.33 758.68 1033.54 752.05 1031.88 746.69C1030.22 741.33 1030.87 735.92 1031.00 730.53C1031.13 725.15 1031.94 719.77 1032.64 714.38C1033.33 709.00 1034.19 703.61 1035.16 698.23C1036.12 692.84 1037.19 687.46 1038.43 682.07C1039.67 676.69 1041.35 669.96 1042.59 665.92C1043.83 661.88 1043.94 660.51 1045.87 657.84C1047.80 655.17 1050.99 651.79 1054.18 649.92C1057.38 648.04 1060.74 647.78 1065.02 646.56C1069.30 645.34 1075.75 642.80 1079.89 642.60Z" fill="#8E0404"/><path d="M1080.60 646.12C1084.53 645.93 1086.90 648.55 1090.05 648.75C1093.20 648.94 1095.30 647.09 1099.50 647.29C1103.71 647.48 1111.36 648.94 1115.29 649.92C1119.22 650.89 1120.97 651.33 1123.06 653.13C1125.16 654.93 1126.39 658.17 1127.85 660.72C1129.30 663.27 1129.96 664.59 1131.79 668.46C1133.63 672.33 1136.62 678.78 1138.85 683.93C1141.08 689.09 1143.35 694.25 1145.19 699.41C1147.02 704.57 1148.56 709.73 1149.85 714.89C1151.15 720.04 1152.44 725.20 1152.96 730.36C1153.48 735.52 1153.74 740.70 1152.96 745.84C1152.19 750.97 1149.87 757.32 1148.30 761.17C1146.72 765.01 1145.49 766.33 1143.51 768.91C1141.54 771.49 1139.07 774.06 1136.46 776.64C1133.85 779.22 1131.12 782.31 1127.85 784.38C1124.58 786.45 1120.49 787.76 1116.84 789.05C1113.20 790.34 1109.77 791.97 1105.96 792.12C1102.15 792.27 1099.26 790.44 1094.00 789.93C1088.74 789.42 1079.23 789.98 1074.39 789.05C1069.54 788.13 1067.83 786.45 1064.94 784.38C1062.05 782.31 1059.54 779.22 1057.04 776.64C1054.55 774.06 1052.22 771.49 1049.99 768.91C1047.75 766.33 1046.14 765.01 1043.65 761.17C1041.16 757.32 1036.61 750.97 1035.04 745.84C1033.46 740.70 1034.08 735.52 1034.20 730.36C1034.32 725.20 1035.10 720.04 1035.75 714.89C1036.41 709.73 1037.23 704.57 1038.15 699.41C1039.06 694.25 1040.08 689.09 1041.26 683.93C1042.43 678.78 1044.03 672.33 1045.20 668.46C1046.38 664.59 1046.48 663.27 1048.31 660.72C1050.15 658.17 1053.18 654.93 1056.21 653.13C1059.24 651.33 1062.43 651.08 1066.49 649.92C1070.56 648.75 1076.68 646.31 1080.60 646.12Z" fill="#FFA000"/><path d="M1080.60 646.12C1084.53 645.93 1086.90 648.55 1090.05 648.75C1093.20 648.94 1095.30 647.09 1099.50 647.29C1103.71 647.48 1111.36 648.94 1115.29 649.92C1119.22 650.89 1120.97 651.33 1123.06 653.13C1125.16 654.93 1126.39 658.17 1127.85 660.72C1129.30 663.27 1129.96 664.59 1131.79 668.46C1133.63 672.33 1136.62 678.78 1138.85 683.93C1141.08 689.09 1143.35 694.25 1145.19 699.41C1147.02 704.57 1148.56 709.73 1149.85 714.89C1151.15 720.04 1152.44 725.20 1152.96 730.36C1153.48 735.52 1153.74 740.70 1152.96 745.84C1152.19 750.97 1149.87 757.32 1148.30 761.17C1146.72 765.01 1145.49 766.33 1143.51 768.91C1141.54 771.49 1139.07 774.06 1136.46 776.64C1133.85 779.22 1131.12 782.31 1127.85 784.38C1124.58 786.45 1120.49 787.76 1116.84 789.05C1113.20 790.34 1109.77 791.97 1105.96 792.12C1102.15 792.27 1099.26 790.44 1094.00 789.93C1088.74 789.42 1079.23 789.98 1074.39 789.05C1069.54 788.13 1067.83 786.45 1064.94 784.38C1062.05 782.31 1059.54 779.22 1057.04 776.64C1054.55 774.06 1052.22 771.49 1049.99 768.91C1047.75 766.33 1046.14 765.01 1043.65 761.17C1041.16 757.32 1036.61 750.97 1035.04 745.84C1033.46 740.70 1034.08 735.52 1034.20 730.36C1034.32 725.20 1035.10 720.04 1035.75 714.89C1036.41 709.73 1037.23 704.57 1038.15 699.41C1039.06 694.25 1040.08 689.09 1041.26 683.93C1042.43 678.78 1044.03 672.33 1045.20 668.46C1046.38 664.59 1046.48 663.27 1048.31 660.72C1050.15 658.17 1053.18 654.93 1056.21 653.13C1059.24 651.33 1062.43 651.08 1066.49 649.92C1070.56 648.75 1076.68 646.31 1080.60 646.12Z" fill="#FF5000" filter="url(#fADC)"/><path d="M1080.60 646.12C1084.53 645.93 1086.90 648.55 1090.05 648.75C1093.20 648.94 1095.30 647.09 1099.50 647.29C1103.71 647.48 1111.36 648.94 1115.29 649.92C1119.22 650.89 1120.97 651.33 1123.06 653.13C1125.16 654.93 1126.39 658.17 1127.85 660.72C1129.30 663.27 1129.96 664.59 1131.79 668.46C1133.63 672.33 1136.62 678.78 1138.85 683.93C1141.08 689.09 1143.35 694.25 1145.19 699.41C1147.02 704.57 1148.56 709.73 1149.85 714.89C1151.15 720.04 1152.44 725.20 1152.96 730.36C1153.48 735.52 1153.74 740.70 1152.96 745.84C1152.19 750.97 1149.87 757.32 1148.30 761.17C1146.72 765.01 1145.49 766.33 1143.51 768.91C1141.54 771.49 1139.07 774.06 1136.46 776.64C1133.85 779.22 1131.12 782.31 1127.85 784.38C1124.58 786.45 1120.49 787.76 1116.84 789.05C1113.20 790.34 1109.77 791.97 1105.96 792.12C1102.15 792.27 1099.26 790.44 1094.00 789.93C1088.74 789.42 1079.23 789.98 1074.39 789.05C1069.54 788.13 1067.83 786.45 1064.94 784.38C1062.05 782.31 1059.54 779.22 1057.04 776.64C1054.55 774.06 1052.22 771.49 1049.99 768.91C1047.75 766.33 1046.14 765.01 1043.65 761.17C1041.16 757.32 1036.61 750.97 1035.04 745.84C1033.46 740.70 1034.08 735.52 1034.20 730.36C1034.32 725.20 1035.10 720.04 1035.75 714.89C1036.41 709.73 1037.23 704.57 1038.15 699.41C1039.06 694.25 1040.08 689.09 1041.26 683.93C1042.43 678.78 1044.03 672.33 1045.20 668.46C1046.38 664.59 1046.48 663.27 1048.31 660.72C1050.15 658.17 1053.18 654.93 1056.21 653.13C1059.24 651.33 1062.43 651.08 1066.49 649.92C1070.56 648.75 1076.68 646.31 1080.60 646.12Z" fill="#FFD800" filter="url(#fADCy)"/><path d="M1080.60 646.12C1084.53 645.93 1086.90 648.55 1090.05 648.75C1093.20 648.94 1095.30 647.09 1099.50 647.29C1103.71 647.48 1111.36 648.94 1115.29 649.92C1119.22 650.89 1120.97 651.33 1123.06 653.13C1125.16 654.93 1126.39 658.17 1127.85 660.72C1129.30 663.27 1129.96 664.59 1131.79 668.46C1133.63 672.33 1136.62 678.78 1138.85 683.93C1141.08 689.09 1143.35 694.25 1145.19 699.41C1147.02 704.57 1148.56 709.73 1149.85 714.89C1151.15 720.04 1152.44 725.20 1152.96 730.36C1153.48 735.52 1153.74 740.70 1152.96 745.84C1152.19 750.97 1149.87 757.32 1148.30 761.17C1146.72 765.01 1145.49 766.33 1143.51 768.91C1141.54 771.49 1139.07 774.06 1136.46 776.64C1133.85 779.22 1131.12 782.31 1127.85 784.38C1124.58 786.45 1120.49 787.76 1116.84 789.05C1113.20 790.34 1109.77 791.97 1105.96 792.12C1102.15 792.27 1099.26 790.44 1094.00 789.93C1088.74 789.42 1079.23 789.98 1074.39 789.05C1069.54 788.13 1067.83 786.45 1064.94 784.38C1062.05 782.31 1059.54 779.22 1057.04 776.64C1054.55 774.06 1052.22 771.49 1049.99 768.91C1047.75 766.33 1046.14 765.01 1043.65 761.17C1041.16 757.32 1036.61 750.97 1035.04 745.84C1033.46 740.70 1034.08 735.52 1034.20 730.36C1034.32 725.20 1035.10 720.04 1035.75 714.89C1036.41 709.73 1037.23 704.57 1038.15 699.41C1039.06 694.25 1040.08 689.09 1041.26 683.93C1042.43 678.78 1044.03 672.33 1045.20 668.46C1046.38 664.59 1046.48 663.27 1048.31 660.72C1050.15 658.17 1053.18 654.93 1056.21 653.13C1059.24 651.33 1062.43 651.08 1066.49 649.92C1070.56 648.75 1076.68 646.31 1080.60 646.12Z" fill="none" stroke="#8E0404" stroke-width="5.120000000000001" filter="url(#fRim)"/><path d="M1079.51 689.08L1087.70 695.18L1092.11 695.94L1096.52 695.18L1104.71 688.32L1105.97 690.61L1097.15 699.75L1095.26 706.61L1094.63 711.18L1090.85 711.18L1089.59 703.56L1087.07 698.99L1078.88 691.37Z" fill="#8E0404"/><path d="M1085.18 739.37L1091.48 742.42L1097.78 741.66L1105.97 737.09L1103.45 743.95L1099.67 748.52L1094.00 751.11L1089.59 748.52L1087.70 743.95Z" fill="#8E0404"/><rect x="1092.74" y="657.84" width="1.76" height="7.62" fill="#8E0404"/><rect x="1092.74" y="674.60" width="1.76" height="4.57" fill="#8E0404"/><rect x="1092.74" y="723.37" width="1.76" height="6.10" fill="#8E0404"/><rect x="1092.74" y="769.09" width="1.76" height="7.62" fill="#8E0404"/><rect x="1051.16" y="714.23" width="3.15" height="3.05" fill="#8E0404"/><rect x="1133.06" y="718.80" width="3.15" height="3.05" fill="#8E0404"/><rect x="1042.34" y="743.18" width="3.15" height="3.05" fill="#8E0404"/><rect x="1125.50" y="740.14" width="3.15" height="3.05" fill="#8E0404"/><rect x="1068.80" y="676.13" width="3.15" height="3.05" fill="#8E0404"/><rect x="1111.64" y="761.47" width="3.15" height="3.05" fill="#8E0404"/><text x="1176" y="628" font-size="8.5" fill="#000" textLength="36" lengthAdjust="spacingAndGlyphs">mm<tspan font-size="6" dy="-3">2</tspan><tspan dy="3">/µs</tspan></text><rect x="1178.5" y="641.0" width="12" height="158.5" fill="url(#jet)" stroke="#333" stroke-width="0.8"/><text x="1193" y="642.7" font-size="6" fill="#555">1100</text><line x1="1188.5" y1="640.5" x2="1190.5" y2="640.5" stroke="#333" stroke-width="0.6"/><text x="1193" y="657.2363636363636" font-size="6" fill="#555">1000</text><line x1="1188.5" y1="655.0363636363636" x2="1190.5" y2="655.0363636363636" stroke="#333" stroke-width="0.6"/><text x="1193" y="671.7727272727274" font-size="6" fill="#555">900</text><line x1="1188.5" y1="669.5727272727273" x2="1190.5" y2="669.5727272727273" stroke="#333" stroke-width="0.6"/><text x="1193" y="686.309090909091" font-size="6" fill="#555">800</text><line x1="1188.5" y1="684.1090909090909" x2="1190.5" y2="684.1090909090909" stroke="#333" stroke-width="0.6"/><text x="1193" y="700.8454545454546" font-size="6" fill="#555">700</text><line x1="1188.5" y1="698.6454545454545" x2="1190.5" y2="698.6454545454545" stroke="#333" stroke-width="0.6"/><text x="1193" y="715.3818181818182" font-size="6" fill="#555">600</text><line x1="1188.5" y1="713.1818181818181" x2="1190.5" y2="713.1818181818181" stroke="#333" stroke-width="0.6"/><text x="1193" y="729.9181818181819" font-size="6" fill="#555">500</text><line x1="1188.5" y1="727.7181818181818" x2="1190.5" y2="727.7181818181818" stroke="#333" stroke-width="0.6"/><text x="1193" y="744.4545454545455" font-size="6" fill="#555">400</text><line x1="1188.5" y1="742.2545454545455" x2="1190.5" y2="742.2545454545455" stroke="#333" stroke-width="0.6"/><text x="1193" y="758.9909090909091" font-size="6" fill="#555">300</text><line x1="1188.5" y1="756.790909090909" x2="1190.5" y2="756.790909090909" stroke="#333" stroke-width="0.6"/><text x="1193" y="773.5272727272727" font-size="6" fill="#555">200</text><line x1="1188.5" y1="771.3272727272727" x2="1190.5" y2="771.3272727272727" stroke="#333" stroke-width="0.6"/><text x="1193" y="788.0636363636364" font-size="6" fill="#555">100</text><line x1="1188.5" y1="785.8636363636364" x2="1190.5" y2="785.8636363636364" stroke="#333" stroke-width="0.6"/><text x="1193" y="802.6" font-size="6" fill="#555">0</text><line x1="1188.5" y1="800.4" x2="1190.5" y2="800.4" stroke="#333" stroke-width="0.6"/><text x="1081" y="821.5" font-size="12" fill="#000" textLength="14" lengthAdjust="spacingAndGlyphs">(e)</text><text x="670" y="848" font-size="11.7" fill="#000" textLength="512" lengthAdjust="spacingAndGlyphs">Figure 3: Parametric maps synthesized using  FSL based GM,WM and CSF segmented masks:</text><text x="719.75" y="863.5" font-size="11.7" fill="#000" textLength="491" lengthAdjust="spacingAndGlyphs">(a) T<tspan font-size="8" dy="2">1</tspan><tspan dy="-2"> map at 1.5T ,(b)T</tspan><tspan font-size="8" dy="2">1</tspan><tspan dy="-2"> map at 10mT , (c ) Proton density  map (d), T</tspan><tspan font-size="8" dy="2">2</tspan><tspan dy="-2"> map  (e) ADC map</tspan></text><text x="719.75" y="880" font-size="11.7" fill="#000" textLength="554" lengthAdjust="spacingAndGlyphs">(c),(d) and (e) are  largely independent of field strength  and used simulation at both 1.5T and 10mT</text></g><text x="332.4" y="178" font-size="6.5" fill="#777" textLength="22" lengthAdjust="spacingAndGlyphs">Figure 1</text><rect x="320.5" y="185.5" width="71" height="94" fill="#fff" stroke="#000" stroke-width="1.2"/><rect x="321" y="186" width="70" height="4.5" fill="#FFB800"/><rect x="321" y="190.5" width="5" height="88.5" fill="#4472C4"/><rect x="326.5" y="190.5" width="25.5" height="28.0" fill="#000"/><path d="M336.85 192.18C337.55 192.15 337.98 192.59 338.54 192.62C339.11 192.66 339.48 192.34 340.24 192.38C340.99 192.41 342.36 192.66 343.06 192.82C343.77 192.98 344.08 193.06 344.46 193.36C344.83 193.67 345.05 194.21 345.31 194.64C345.57 195.08 345.69 195.30 346.02 195.95C346.35 196.60 346.88 197.69 347.28 198.56C347.68 199.43 348.09 200.30 348.42 201.17C348.75 202.04 349.02 202.91 349.25 203.79C349.49 204.66 349.72 205.53 349.81 206.40C349.90 207.27 349.95 208.14 349.81 209.01C349.67 209.88 349.26 210.95 348.97 211.60C348.69 212.25 348.47 212.47 348.12 212.90C347.76 213.34 347.32 213.77 346.85 214.21C346.39 214.64 345.90 215.17 345.31 215.51C344.73 215.86 343.99 216.08 343.34 216.30C342.69 216.52 342.07 216.80 341.39 216.82C340.71 216.84 340.19 216.54 339.25 216.45C338.31 216.36 336.60 216.46 335.74 216.30C334.87 216.15 334.56 215.86 334.04 215.51C333.53 215.17 333.08 214.64 332.63 214.21C332.18 213.77 331.77 213.34 331.37 212.90C330.97 212.47 330.68 212.25 330.23 211.60C329.79 210.95 328.97 209.88 328.69 209.01C328.41 208.14 328.52 207.27 328.54 206.40C328.56 205.53 328.70 204.66 328.82 203.79C328.94 202.91 329.08 202.04 329.25 201.17C329.41 200.30 329.59 199.43 329.80 198.56C330.01 197.69 330.30 196.60 330.51 195.95C330.72 195.30 330.74 195.08 331.07 194.64C331.40 194.21 331.94 193.67 332.48 193.36C333.02 193.06 333.60 193.02 334.32 192.82C335.05 192.62 336.15 192.21 336.85 192.18Z" fill="#B8B8B8"/><rect x="338.6" y="200.3" width="1.7" height="2.0" fill="#333"/><rect x="338.6" y="207.5" width="1.7" height="1.7" fill="#333"/><rect x="352.5" y="190.5" width="5" height="28.0" fill="url(#gbar)"/><rect x="358" y="190.5" width="24.5" height="28.0" fill="#000"/><path d="M368.05 192.74C368.70 192.71 369.09 193.13 369.60 193.16C370.12 193.19 370.46 192.90 371.15 192.93C371.84 192.96 373.10 193.19 373.74 193.35C374.38 193.51 374.67 193.58 375.01 193.87C375.36 194.16 375.56 194.68 375.80 195.09C376.04 195.50 376.14 195.72 376.44 196.34C376.74 196.96 377.23 198.00 377.60 198.83C377.97 199.66 378.34 200.49 378.64 201.32C378.94 202.16 379.19 202.99 379.40 203.82C379.62 204.65 379.83 205.48 379.91 206.31C380.00 207.14 380.04 207.98 379.91 208.80C379.79 209.63 379.41 210.65 379.15 211.27C378.89 211.89 378.69 212.10 378.36 212.52C378.04 212.94 377.64 213.35 377.21 213.77C376.78 214.18 376.33 214.68 375.80 215.01C375.26 215.35 374.59 215.56 373.99 215.77C373.40 215.97 372.83 216.24 372.21 216.26C371.59 216.28 371.11 215.99 370.25 215.91C369.39 215.82 367.83 215.92 367.04 215.77C366.24 215.62 365.96 215.35 365.49 215.01C365.01 214.68 364.60 214.18 364.19 213.77C363.79 213.35 363.40 212.94 363.04 212.52C362.67 212.10 362.41 211.89 362.00 211.27C361.59 210.65 360.85 209.63 360.59 208.80C360.33 207.98 360.43 207.14 360.45 206.31C360.47 205.48 360.60 204.65 360.70 203.82C360.81 202.99 360.95 202.16 361.10 201.32C361.25 200.49 361.41 199.66 361.61 198.83C361.80 198.00 362.06 196.96 362.25 196.34C362.45 195.72 362.46 195.50 362.76 195.09C363.06 194.68 363.56 194.16 364.06 193.87C364.55 193.58 365.08 193.54 365.74 193.35C366.41 193.16 367.41 192.77 368.05 192.74Z" fill="#3A3A3A"/><rect x="369.7" y="200.5" width="1.6" height="1.9" fill="#111"/><rect x="369.7" y="207.3" width="1.6" height="1.6" fill="#111"/><rect x="383" y="190.5" width="4" height="28.0" fill="url(#gbar)"/><rect x="316" y="202.5" width="2" height="1" fill="#aaa"/><rect x="326.5" y="220" width="25.5" height="28.5" fill="#000"/><path d="M336.85 221.71C337.55 221.68 337.98 222.13 338.54 222.16C339.11 222.19 339.48 221.88 340.24 221.91C340.99 221.94 342.36 222.19 343.06 222.36C343.77 222.53 344.08 222.60 344.46 222.91C344.83 223.22 345.05 223.78 345.31 224.22C345.57 224.66 345.69 224.88 346.02 225.55C346.35 226.21 346.88 227.32 347.28 228.21C347.68 229.09 348.09 229.98 348.42 230.86C348.75 231.75 349.02 232.64 349.25 233.52C349.49 234.41 349.72 235.30 349.81 236.18C349.90 237.07 349.95 237.96 349.81 238.84C349.67 239.72 349.26 240.81 348.97 241.47C348.69 242.13 348.47 242.36 348.12 242.80C347.76 243.25 347.32 243.69 346.85 244.13C346.39 244.57 345.90 245.11 345.31 245.46C344.73 245.82 343.99 246.04 343.34 246.26C342.69 246.48 342.07 246.76 341.39 246.79C340.71 246.82 340.19 246.50 339.25 246.41C338.31 246.33 336.60 246.42 335.74 246.26C334.87 246.10 334.56 245.82 334.04 245.46C333.53 245.11 333.08 244.57 332.63 244.13C332.18 243.69 331.77 243.25 331.37 242.80C330.97 242.36 330.68 242.13 330.23 241.47C329.79 240.81 328.97 239.72 328.69 238.84C328.41 237.96 328.52 237.07 328.54 236.18C328.56 235.30 328.70 234.41 328.82 233.52C328.94 232.64 329.08 231.75 329.25 230.86C329.41 229.98 329.59 229.09 329.80 228.21C330.01 227.32 330.30 226.21 330.51 225.55C330.72 224.88 330.74 224.66 331.07 224.22C331.40 223.78 331.94 223.22 332.48 222.91C333.02 222.60 333.60 222.56 334.32 222.36C335.05 222.16 336.15 221.74 336.85 221.71Z" fill="#D8D8D8"/><rect x="344.4" y="229.4" width="0.9" height="0.9" fill="#444"/><rect x="328.6" y="235.7" width="0.9" height="0.9" fill="#fff"/><rect x="338.9" y="246.8" width="0.9" height="0.9" fill="#fff"/><rect x="331.6" y="241.6" width="0.9" height="0.9" fill="#444"/><rect x="331.2" y="224.8" width="0.9" height="0.9" fill="#fff"/><rect x="337.7" y="244.2" width="0.9" height="0.9" fill="#444"/><rect x="335.8" y="245.7" width="0.9" height="0.9" fill="#fff"/><rect x="334.3" y="241.2" width="0.9" height="0.9" fill="#444"/><rect x="328.8" y="223.9" width="0.9" height="0.9" fill="#444"/><rect x="332.8" y="229.6" width="0.9" height="0.9" fill="#444"/><rect x="336.9" y="241.1" width="0.9" height="0.9" fill="#444"/><rect x="338.1" y="227.1" width="0.9" height="0.9" fill="#fff"/><rect x="341.8" y="228.7" width="0.9" height="0.9" fill="#fff"/><rect x="332.6" y="239.9" width="0.9" height="0.9" fill="#fff"/><rect x="337.2" y="223.3" width="0.9" height="0.9" fill="#fff"/><rect x="334.3" y="221.9" width="0.9" height="0.9" fill="#444"/><rect x="345.5" y="233.0" width="0.9" height="0.9" fill="#fff"/><rect x="341.2" y="233.6" width="0.9" height="0.9" fill="#444"/><rect x="339.8" y="241.2" width="0.9" height="0.9" fill="#fff"/><rect x="345.4" y="239.4" width="0.9" height="0.9" fill="#444"/><rect x="329.5" y="233.7" width="0.9" height="0.9" fill="#444"/><rect x="348.7" y="225.8" width="0.9" height="0.9" fill="#fff"/><rect x="342.8" y="235.7" width="0.9" height="0.9" fill="#444"/><rect x="344.9" y="238.7" width="0.9" height="0.9" fill="#444"/><rect x="329.0" y="236.9" width="0.9" height="0.9" fill="#fff"/><rect x="337.2" y="236.3" width="0.9" height="0.9" fill="#444"/><rect x="347.3" y="234.0" width="0.9" height="0.9" fill="#444"/><rect x="343.1" y="240.6" width="0.9" height="0.9" fill="#444"/><rect x="334.8" y="246.7" width="0.9" height="0.9" fill="#fff"/><rect x="348.1" y="244.7" width="0.9" height="0.9" fill="#444"/><rect x="339.1" y="223.3" width="0.9" height="0.9" fill="#fff"/><rect x="341.4" y="231.9" width="0.9" height="0.9" fill="#fff"/><rect x="334.1" y="230.3" width="0.9" height="0.9" fill="#fff"/><rect x="339.9" y="222.9" width="0.9" height="0.9" fill="#444"/><rect x="341.8" y="242.6" width="0.9" height="0.9" fill="#fff"/><rect x="341.5" y="231.8" width="0.9" height="0.9" fill="#444"/><rect x="331.5" y="228.3" width="0.9" height="0.9" fill="#444"/><rect x="331.8" y="230.4" width="0.9" height="0.9" fill="#444"/><rect x="342.3" y="244.9" width="0.9" height="0.9" fill="#444"/><rect x="336.9" y="231.7" width="0.9" height="0.9" fill="#fff"/><rect x="341.3" y="233.2" width="0.9" height="0.9" fill="#444"/><rect x="336.5" y="228.7" width="0.9" height="0.9" fill="#444"/><rect x="332.2" y="240.8" width="0.9" height="0.9" fill="#fff"/><rect x="342.6" y="234.1" width="0.9" height="0.9" fill="#444"/><rect x="333.4" y="234.4" width="0.9" height="0.9" fill="#fff"/><rect x="340.0" y="243.9" width="0.9" height="0.9" fill="#444"/><rect x="335.6" y="244.8" width="0.9" height="0.9" fill="#444"/><rect x="348.4" y="241.9" width="0.9" height="0.9" fill="#444"/><rect x="343.6" y="237.9" width="0.9" height="0.9" fill="#444"/><rect x="330.3" y="244.9" width="0.9" height="0.9" fill="#fff"/><rect x="347.5" y="236.4" width="0.9" height="0.9" fill="#fff"/><rect x="341.2" y="223.8" width="0.9" height="0.9" fill="#fff"/><rect x="346.5" y="227.9" width="0.9" height="0.9" fill="#444"/><rect x="332.4" y="230.1" width="0.9" height="0.9" fill="#444"/><rect x="340.0" y="228.1" width="0.9" height="0.9" fill="#fff"/><rect x="344.7" y="241.5" width="0.9" height="0.9" fill="#444"/><rect x="333.8" y="225.8" width="0.9" height="0.9" fill="#444"/><rect x="346.4" y="238.5" width="0.9" height="0.9" fill="#fff"/><rect x="339.5" y="243.1" width="0.9" height="0.9" fill="#444"/><rect x="331.4" y="237.9" width="0.9" height="0.9" fill="#fff"/><rect x="332.2" y="238.9" width="0.9" height="0.9" fill="#fff"/><rect x="342.4" y="231.6" width="0.9" height="0.9" fill="#444"/><rect x="337.3" y="233.7" width="0.9" height="0.9" fill="#fff"/><rect x="345.2" y="236.8" width="0.9" height="0.9" fill="#444"/><rect x="349.4" y="229.3" width="0.9" height="0.9" fill="#444"/><rect x="330.9" y="240.6" width="0.9" height="0.9" fill="#444"/><rect x="339.3" y="231.6" width="0.9" height="0.9" fill="#fff"/><rect x="330.2" y="230.7" width="0.9" height="0.9" fill="#fff"/><rect x="342.4" y="235.4" width="0.9" height="0.9" fill="#444"/><rect x="345.3" y="232.2" width="0.9" height="0.9" fill="#444"/><rect x="330.2" y="223.4" width="0.9" height="0.9" fill="#444"/><rect x="330.2" y="238.6" width="0.9" height="0.9" fill="#fff"/><rect x="338.6" y="230.0" width="1.7" height="2.0" fill="#333"/><rect x="338.6" y="237.3" width="1.7" height="1.8" fill="#333"/><rect x="352.5" y="220" width="5" height="28.5" fill="url(#gbar)"/><rect x="358" y="220" width="24.5" height="28.5" fill="#000"/><path d="M368.05 222.28C368.70 222.25 369.09 222.68 369.60 222.71C370.12 222.74 370.46 222.44 371.15 222.47C371.84 222.50 373.10 222.74 373.74 222.90C374.38 223.06 374.67 223.13 375.01 223.43C375.36 223.72 375.56 224.26 375.80 224.67C376.04 225.09 376.14 225.31 376.44 225.94C376.74 226.58 377.23 227.63 377.60 228.48C377.97 229.33 378.34 230.17 378.64 231.02C378.94 231.86 379.19 232.71 379.40 233.56C379.62 234.40 379.83 235.25 379.91 236.09C380.00 236.94 380.04 237.79 379.91 238.63C379.79 239.47 379.41 240.51 379.15 241.14C378.89 241.78 378.69 241.99 378.36 242.41C378.04 242.84 377.64 243.26 377.21 243.68C376.78 244.11 376.33 244.61 375.80 244.95C375.26 245.29 374.59 245.51 373.99 245.72C373.40 245.93 372.83 246.20 372.21 246.22C371.59 246.24 371.11 245.94 370.25 245.86C369.39 245.78 367.83 245.87 367.04 245.72C366.24 245.57 365.96 245.29 365.49 244.95C365.01 244.61 364.60 244.11 364.19 243.68C363.79 243.26 363.40 242.84 363.04 242.41C362.67 241.99 362.41 241.78 362.00 241.14C361.59 240.51 360.85 239.47 360.59 238.63C360.33 237.79 360.43 236.94 360.45 236.09C360.47 235.25 360.60 234.40 360.70 233.56C360.81 232.71 360.95 231.86 361.10 231.02C361.25 230.17 361.41 229.33 361.61 228.48C361.80 227.63 362.06 226.58 362.25 225.94C362.45 225.31 362.46 225.09 362.76 224.67C363.06 224.26 363.56 223.72 364.06 223.43C364.55 223.13 365.08 223.09 365.74 222.90C366.41 222.71 367.41 222.31 368.05 222.28Z" fill="#3A3A3A"/><rect x="369.7" y="230.2" width="1.6" height="1.9" fill="#111"/><rect x="369.7" y="237.1" width="1.6" height="1.7" fill="#111"/><rect x="383" y="220" width="4" height="28.5" fill="url(#gbar)"/><rect x="316" y="232" width="2" height="1" fill="#aaa"/><rect x="326.5" y="250" width="25.5" height="29" fill="#000"/><path d="M336.85 251.74C337.55 251.71 337.98 252.17 338.54 252.20C339.11 252.23 339.48 251.91 340.24 251.94C340.99 251.98 342.36 252.23 343.06 252.40C343.77 252.57 344.08 252.65 344.46 252.96C344.83 253.28 345.05 253.85 345.31 254.29C345.57 254.74 345.69 254.97 346.02 255.64C346.35 256.32 346.88 257.45 347.28 258.35C347.68 259.25 348.09 260.15 348.42 261.05C348.75 261.96 349.02 262.86 349.25 263.76C349.49 264.66 349.72 265.56 349.81 266.47C349.90 267.37 349.95 268.27 349.81 269.17C349.67 270.07 349.26 271.18 348.97 271.85C348.69 272.52 348.47 272.75 348.12 273.20C347.76 273.65 347.32 274.10 346.85 274.55C346.39 275.01 345.90 275.55 345.31 275.91C344.73 276.27 343.99 276.50 343.34 276.72C342.69 276.95 342.07 277.23 341.39 277.26C340.71 277.29 340.19 276.97 339.25 276.88C338.31 276.79 336.60 276.89 335.74 276.72C334.87 276.56 334.56 276.27 334.04 275.91C333.53 275.55 333.08 275.01 332.63 274.55C332.18 274.10 331.77 273.65 331.37 273.20C330.97 272.75 330.68 272.52 330.23 271.85C329.79 271.18 328.97 270.07 328.69 269.17C328.41 268.27 328.52 267.37 328.54 266.47C328.56 265.56 328.70 264.66 328.82 263.76C328.94 262.86 329.08 261.96 329.25 261.05C329.41 260.15 329.59 259.25 329.80 258.35C330.01 257.45 330.30 256.32 330.51 255.64C330.72 254.97 330.74 254.74 331.07 254.29C331.40 253.85 331.94 253.28 332.48 252.96C333.02 252.65 333.60 252.61 334.32 252.40C335.05 252.20 336.15 251.77 336.85 251.74Z" fill="#B0B0B0"/><rect x="338.6" y="260.2" width="1.7" height="2.0" fill="#333"/><rect x="338.6" y="267.6" width="1.7" height="1.8" fill="#333"/><rect x="352.5" y="250" width="5" height="29" fill="url(#gbar)"/><rect x="358" y="250" width="24.5" height="29" fill="#000"/><path d="M368.05 252.32C368.70 252.29 369.09 252.73 369.60 252.76C370.12 252.79 370.46 252.48 371.15 252.51C371.84 252.55 373.10 252.79 373.74 252.95C374.38 253.12 374.67 253.19 375.01 253.49C375.36 253.79 375.56 254.33 375.80 254.76C376.04 255.18 376.14 255.40 376.44 256.05C376.74 256.69 377.23 257.77 377.60 258.63C377.97 259.49 378.34 260.35 378.64 261.21C378.94 262.07 379.19 262.93 379.40 263.79C379.62 264.65 379.83 265.51 379.91 266.38C380.00 267.24 380.04 268.10 379.91 268.96C379.79 269.81 379.41 270.87 379.15 271.52C378.89 272.16 378.69 272.38 378.36 272.81C378.04 273.24 377.64 273.67 377.21 274.10C376.78 274.53 376.33 275.04 375.80 275.39C375.26 275.73 374.59 275.95 373.99 276.17C373.40 276.38 372.83 276.66 372.21 276.68C371.59 276.70 371.11 276.40 370.25 276.31C369.39 276.23 367.83 276.32 367.04 276.17C366.24 276.01 365.96 275.73 365.49 275.39C365.01 275.04 364.60 274.53 364.19 274.10C363.79 273.67 363.40 273.24 363.04 272.81C362.67 272.38 362.41 272.16 362.00 271.52C361.59 270.87 360.85 269.81 360.59 268.96C360.33 268.10 360.43 267.24 360.45 266.38C360.47 265.51 360.60 264.65 360.70 263.79C360.81 262.93 360.95 262.07 361.10 261.21C361.25 260.35 361.41 259.49 361.61 258.63C361.80 257.77 362.06 256.69 362.25 256.05C362.45 255.40 362.46 255.18 362.76 254.76C363.06 254.33 363.56 253.79 364.06 253.49C364.55 253.19 365.08 253.15 365.74 252.95C366.41 252.76 367.41 252.35 368.05 252.32Z" fill="#3A3A3A"/><rect x="369.7" y="260.4" width="1.6" height="1.9" fill="#111"/><rect x="369.7" y="267.4" width="1.6" height="1.7" fill="#111"/><rect x="383" y="250" width="4" height="29" fill="url(#gbar)"/><rect x="316" y="262" width="2" height="1" fill="#aaa"/><line x1="313" y1="282" x2="410" y2="282" stroke="#C4C4C4" stroke-width="0.8"/><line x1="318" y1="285" x2="395" y2="285" stroke="#C4C4C4" stroke-width="0.8"/><line x1="322" y1="288.5" x2="402" y2="288.5" stroke="#C4C4C4" stroke-width="0.8"/><rect x="296" y="324" width="95.5" height="3" fill="#EEDD55"/><rect x="296" y="327" width="12.5" height="10.5" fill="#C8E4F8"/><rect x="308.5" y="327" width="83" height="3" fill="#D8F0C0"/><rect x="308.5" y="330" width="83" height="7" fill="#F8DCDC"/><rect x="296" y="337.5" width="12.5" height="9" fill="#EE9C90"/><rect x="296" y="324" width="95.5" height="22.5" fill="none" stroke="#999" stroke-width="0.5"/><line x1="296" y1="340.5" x2="391.5" y2="340.5" stroke="#999" stroke-width="0.5"/><line x1="296" y1="343.5" x2="391.5" y2="343.5" stroke="#999" stroke-width="0.5"/><line x1="308.5" y1="327" x2="308.5" y2="346.5" stroke="#999" stroke-width="0.5"/><line x1="321" y1="327" x2="321" y2="346.5" stroke="#999" stroke-width="0.5"/><line x1="335" y1="327" x2="335" y2="346.5" stroke="#999" stroke-width="0.5"/><line x1="350" y1="327" x2="350" y2="346.5" stroke="#999" stroke-width="0.5"/><line x1="365" y1="327" x2="365" y2="346.5" stroke="#999" stroke-width="0.5"/><rect x="321" y="324" width="20" height="1.3" fill="#6a5a9a"/><rect x="298" y="331.5" width="8" height="1.3" fill="#6a5a9a"/><rect x="318" y="327" width="10" height="1.3" fill="#6a5a9a"/><rect x="340" y="327" width="10" height="1.3" fill="#6a5a9a"/><rect x="312" y="330" width="4" height="1.3" fill="#6a5a9a"/><rect x="326" y="330" width="4" height="1.3" fill="#6a5a9a"/><rect x="340" y="330" width="40" height="1.3" fill="#6a5a9a"/><rect x="328" y="334" width="10" height="1.3" fill="#6a5a9a"/><rect x="298" y="338.5" width="6" height="1.3" fill="#6a5a9a"/><rect x="312" y="338.5" width="6" height="1.3" fill="#6a5a9a"/><rect x="326" y="338.5" width="5" height="1.3" fill="#6a5a9a"/><rect x="340" y="338.5" width="4" height="1.3" fill="#6a5a9a"/><rect x="354" y="338.5" width="3" height="1.3" fill="#6a5a9a"/><rect x="368" y="338.5" width="12" height="1.3" fill="#6a5a9a"/><rect x="298" y="341.5" width="6" height="1.3" fill="#6a5a9a"/><rect x="312" y="341.5" width="5" height="1.3" fill="#6a5a9a"/><rect x="326" y="341.5" width="4" height="1.3" fill="#6a5a9a"/><rect x="340" y="341.5" width="3" height="1.3" fill="#6a5a9a"/><rect x="354" y="341.5" width="3" height="1.3" fill="#6a5a9a"/><rect x="368" y="341.5" width="9" height="1.3" fill="#6a5a9a"/><rect x="298" y="344.5" width="6" height="1.3" fill="#6a5a9a"/><rect x="312" y="344.5" width="6" height="1.3" fill="#6a5a9a"/><rect x="326" y="344.5" width="6" height="1.3" fill="#6a5a9a"/><rect x="340" y="344.5" width="5" height="1.3" fill="#6a5a9a"/><rect x="354" y="344.5" width="4" height="1.3" fill="#6a5a9a"/><rect x="368" y="344.5" width="14" height="1.3" fill="#6a5a9a"/><rect x="296.5" y="348.5" width="96" height="35.5" fill="#fff" stroke="#000" stroke-width="1.2"/><path d="M303 358V352H330L331 356H335L336 352H363V362" fill="none" stroke="#888" stroke-width="0.8"/><rect x="365" y="352" width="19" height="11" fill="#444"/><rect x="365" y="368.5" width="19" height="5" fill="#1a1a1a"/><line x1="303" y1="371" x2="365" y2="371" stroke="#888" stroke-width="1"/><line x1="303" y1="378" x2="384" y2="378" stroke="#ccc" stroke-width="0.5"/><rect x="296.5" y="385.5" width="97" height="51.5" fill="#fff" stroke="#000" stroke-width="1.2"/><rect x="301" y="388.5" width="81" height="42.5" fill="#F6F6F6" stroke="#ccc" stroke-width="0.5"/><path d="M321 389Q320 404 333 410Q355 420 382 421" fill="none" stroke="#8888CC" stroke-width="0.8"/><line x1="302" y1="430" x2="352" y2="389" stroke="#E8A0A0" stroke-width="0.6"/><line x1="306" y1="430" x2="357" y2="389" stroke="#999" stroke-width="0.6"/><path d="M358 389Q370 395 382 398" fill="none" stroke="#E8E060" stroke-width="0.8"/><rect x="383.5" y="389" width="1.8" height="42" fill="url(#vir)"/><line x1="303" y1="440" x2="352" y2="440" stroke="#C4C4C4" stroke-width="0.8"/><line x1="312" y1="443.5" x2="373" y2="443.5" stroke="#C4C4C4" stroke-width="0.8"/><line x1="312" y1="446.5" x2="336" y2="446.5" stroke="#C4C4C4" stroke-width="0.8"/><rect x="306" y="634" width="26" height="28" fill="#000"/><path d="M316.50 635.40C317.23 635.37 317.67 635.82 318.26 635.85C318.85 635.89 319.24 635.57 320.03 635.60C320.81 635.64 322.25 635.89 322.98 636.06C323.71 636.22 324.04 636.30 324.43 636.61C324.82 636.92 325.06 637.48 325.33 637.92C325.60 638.36 325.72 638.59 326.07 639.26C326.41 639.92 326.97 641.04 327.38 641.93C327.80 642.82 328.23 643.71 328.57 644.60C328.91 645.49 329.20 646.38 329.44 647.27C329.68 648.16 329.93 649.05 330.02 649.94C330.12 650.83 330.17 651.73 330.02 652.61C329.88 653.50 329.45 654.59 329.15 655.26C328.86 655.92 328.63 656.15 328.26 656.59C327.89 657.04 327.43 657.48 326.94 657.93C326.45 658.37 325.94 658.91 325.33 659.26C324.72 659.62 323.95 659.85 323.27 660.07C322.59 660.29 321.95 660.57 321.24 660.60C320.52 660.63 319.98 660.31 319.00 660.22C318.02 660.13 316.24 660.23 315.33 660.07C314.43 659.91 314.11 659.62 313.57 659.26C313.03 658.91 312.56 658.37 312.09 657.93C311.62 657.48 311.19 657.04 310.77 656.59C310.35 656.15 310.05 655.92 309.59 655.26C309.12 654.59 308.27 653.50 307.98 652.61C307.68 651.73 307.80 650.83 307.82 649.94C307.84 649.05 307.99 648.16 308.11 647.27C308.23 646.38 308.39 645.49 308.56 644.60C308.73 643.71 308.92 642.82 309.14 641.93C309.36 641.04 309.66 639.92 309.88 639.26C310.10 638.59 310.12 638.36 310.46 637.92C310.80 637.48 311.37 636.92 311.93 636.61C312.50 636.30 313.10 636.26 313.86 636.06C314.62 635.85 315.76 635.43 316.50 635.40Z" fill="#B8B8B8"/><rect x="318.3" y="643.7" width="1.8" height="2.0" fill="#222"/><rect x="318.3" y="651.0" width="1.8" height="1.8" fill="#222"/><rect x="334" y="634" width="27" height="28" fill="#000"/><path d="M344.90 635.40C345.66 635.37 346.12 635.82 346.73 635.85C347.35 635.89 347.75 635.57 348.57 635.60C349.38 635.64 350.87 635.89 351.63 636.06C352.40 636.22 352.74 636.30 353.14 636.61C353.55 636.92 353.79 637.48 354.07 637.92C354.35 638.36 354.48 638.59 354.84 639.26C355.19 639.92 355.77 641.04 356.21 641.93C356.64 642.82 357.08 643.71 357.44 644.60C357.79 645.49 358.09 646.38 358.34 647.27C358.60 648.16 358.85 649.05 358.95 649.94C359.05 650.83 359.10 651.73 358.95 652.61C358.80 653.50 358.35 654.59 358.04 655.26C357.74 655.92 357.50 656.15 357.11 656.59C356.73 657.04 356.25 657.48 355.74 657.93C355.24 658.37 354.71 658.91 354.07 659.26C353.44 659.62 352.64 659.85 351.94 660.07C351.23 660.29 350.56 660.57 349.82 660.60C349.08 660.63 348.52 660.31 347.50 660.22C346.48 660.13 344.63 660.23 343.69 660.07C342.75 659.91 342.42 659.62 341.86 659.26C341.30 658.91 340.81 658.37 340.33 657.93C339.84 657.48 339.39 657.04 338.96 656.59C338.52 656.15 338.21 655.92 337.72 655.26C337.24 654.59 336.36 653.50 336.05 652.61C335.75 651.73 335.87 650.83 335.89 649.94C335.91 649.05 336.06 648.16 336.19 647.27C336.32 646.38 336.48 645.49 336.66 644.60C336.83 643.71 337.03 642.82 337.26 641.93C337.49 641.04 337.80 639.92 338.03 639.26C338.25 638.59 338.27 638.36 338.63 637.92C338.99 637.48 339.57 636.92 340.16 636.61C340.75 636.30 341.37 636.26 342.16 636.06C342.95 635.85 344.14 635.43 344.90 635.40Z" fill="#B8B8B8"/><rect x="346.8" y="643.7" width="1.9" height="2.0" fill="#222"/><rect x="346.8" y="651.0" width="1.9" height="1.8" fill="#222"/><rect x="363" y="634" width="27" height="28" fill="#000"/><path d="M373.90 635.40C374.66 635.37 375.12 635.82 375.73 635.85C376.35 635.89 376.75 635.57 377.57 635.60C378.38 635.64 379.87 635.89 380.63 636.06C381.40 636.22 381.74 636.30 382.14 636.61C382.55 636.92 382.79 637.48 383.07 637.92C383.35 638.36 383.48 638.59 383.84 639.26C384.19 639.92 384.77 641.04 385.21 641.93C385.64 642.82 386.08 643.71 386.44 644.60C386.79 645.49 387.09 646.38 387.34 647.27C387.60 648.16 387.85 649.05 387.95 649.94C388.05 650.83 388.10 651.73 387.95 652.61C387.80 653.50 387.35 654.59 387.04 655.26C386.74 655.92 386.50 656.15 386.11 656.59C385.73 657.04 385.25 657.48 384.74 657.93C384.24 658.37 383.71 658.91 383.07 659.26C382.44 659.62 381.64 659.85 380.94 660.07C380.23 660.29 379.56 660.57 378.82 660.60C378.08 660.63 377.52 660.31 376.50 660.22C375.48 660.13 373.63 660.23 372.69 660.07C371.75 659.91 371.42 659.62 370.86 659.26C370.30 658.91 369.81 658.37 369.33 657.93C368.84 657.48 368.39 657.04 367.96 656.59C367.52 656.15 367.21 655.92 366.72 655.26C366.24 654.59 365.36 653.50 365.05 652.61C364.75 651.73 364.87 650.83 364.89 649.94C364.91 649.05 365.06 648.16 365.19 647.27C365.32 646.38 365.48 645.49 365.66 644.60C365.83 643.71 366.03 642.82 366.26 641.93C366.49 641.04 366.80 639.92 367.03 639.26C367.25 638.59 367.27 638.36 367.63 637.92C367.99 637.48 368.57 636.92 369.16 636.61C369.75 636.30 370.37 636.26 371.16 636.06C371.95 635.85 373.14 635.43 373.90 635.40Z" fill="#B8B8B8"/><rect x="375.8" y="643.7" width="1.9" height="2.0" fill="#222"/><rect x="375.8" y="651.0" width="1.9" height="1.8" fill="#222"/><rect x="391" y="634" width="29" height="28" fill="#000"/><path d="M402.71 635.40C403.53 635.37 404.02 635.82 404.68 635.85C405.33 635.89 405.77 635.57 406.65 635.60C407.52 635.64 409.12 635.89 409.94 636.06C410.76 636.22 411.12 636.30 411.56 636.61C412.00 636.92 412.25 637.48 412.56 637.92C412.86 638.36 413.00 638.59 413.38 639.26C413.76 639.92 414.39 641.04 414.85 641.93C415.32 642.82 415.79 643.71 416.17 644.60C416.56 645.49 416.88 646.38 417.15 647.27C417.42 648.16 417.69 649.05 417.80 649.94C417.90 650.83 417.96 651.73 417.80 652.61C417.63 653.50 417.15 654.59 416.82 655.26C416.49 655.92 416.24 656.15 415.83 656.59C415.41 657.04 414.90 657.48 414.35 657.93C413.81 658.37 413.24 658.91 412.56 659.26C411.88 659.62 411.02 659.85 410.26 660.07C409.50 660.29 408.79 660.57 407.99 660.60C407.20 660.63 406.60 660.31 405.50 660.22C404.40 660.13 402.42 660.23 401.41 660.07C400.40 659.91 400.04 659.62 399.44 659.26C398.84 658.91 398.31 658.37 397.79 657.93C397.27 657.48 396.79 657.04 396.32 656.59C395.86 656.15 395.52 655.92 395.00 655.26C394.48 654.59 393.53 653.50 393.20 652.61C392.88 651.73 393.01 650.83 393.03 649.94C393.05 649.05 393.22 648.16 393.35 647.27C393.49 646.38 393.66 645.49 393.85 644.60C394.04 643.71 394.26 642.82 394.50 641.93C394.75 641.04 395.08 639.92 395.32 639.26C395.57 638.59 395.59 638.36 395.97 637.92C396.36 637.48 396.99 636.92 397.62 636.61C398.25 636.30 398.92 636.26 399.76 636.06C400.61 635.85 401.89 635.43 402.71 635.40Z" fill="#4A4A4A"/><rect x="404.8" y="643.7" width="2.0" height="2.0" fill="#222"/><rect x="404.8" y="651.0" width="2.0" height="1.8" fill="#222"/><rect x="306" y="663.75" width="26" height="29.0" fill="#000"/><path d="M316.50 665.20C317.23 665.17 317.67 665.63 318.26 665.67C318.85 665.70 319.24 665.37 320.03 665.41C320.81 665.44 322.25 665.70 322.98 665.88C323.71 666.05 324.04 666.13 324.43 666.45C324.82 666.77 325.06 667.35 325.33 667.81C325.60 668.27 325.72 668.50 326.07 669.19C326.41 669.88 326.97 671.04 327.38 671.96C327.80 672.88 328.23 673.80 328.57 674.73C328.91 675.65 329.20 676.57 329.44 677.49C329.68 678.42 329.93 679.34 330.02 680.26C330.12 681.18 330.17 682.11 330.02 683.03C329.88 683.94 329.45 685.08 329.15 685.77C328.86 686.45 328.63 686.69 328.26 687.15C327.89 687.61 327.43 688.07 326.94 688.53C326.45 688.99 325.94 689.55 325.33 689.92C324.72 690.29 323.95 690.52 323.27 690.75C322.59 690.98 321.95 691.27 321.24 691.30C320.52 691.33 319.98 691.00 319.00 690.91C318.02 690.82 316.24 690.92 315.33 690.75C314.43 690.59 314.11 690.29 313.57 689.92C313.03 689.55 312.56 688.99 312.09 688.53C311.62 688.07 311.19 687.61 310.77 687.15C310.35 686.69 310.05 686.45 309.59 685.77C309.12 685.08 308.27 683.94 307.98 683.03C307.68 682.11 307.80 681.18 307.82 680.26C307.84 679.34 307.99 678.42 308.11 677.49C308.23 676.57 308.39 675.65 308.56 674.73C308.73 673.80 308.92 672.88 309.14 671.96C309.36 671.04 309.66 669.88 309.88 669.19C310.10 668.50 310.12 668.27 310.46 667.81C310.80 667.35 311.37 666.77 311.93 666.45C312.50 666.13 313.10 666.09 313.86 665.88C314.62 665.67 315.76 665.23 316.50 665.20Z" fill="#BDBDBD"/><rect x="318.3" y="673.8" width="1.8" height="2.1" fill="#222"/><rect x="318.3" y="681.4" width="1.8" height="1.8" fill="#222"/><rect x="334" y="663.75" width="27" height="29.0" fill="#000"/><path d="M344.90 665.20C345.66 665.17 346.12 665.63 346.73 665.67C347.35 665.70 347.75 665.37 348.57 665.41C349.38 665.44 350.87 665.70 351.63 665.88C352.40 666.05 352.74 666.13 353.14 666.45C353.55 666.77 353.79 667.35 354.07 667.81C354.35 668.27 354.48 668.50 354.84 669.19C355.19 669.88 355.77 671.04 356.21 671.96C356.64 672.88 357.08 673.80 357.44 674.73C357.79 675.65 358.09 676.57 358.34 677.49C358.60 678.42 358.85 679.34 358.95 680.26C359.05 681.18 359.10 682.11 358.95 683.03C358.80 683.94 358.35 685.08 358.04 685.77C357.74 686.45 357.50 686.69 357.11 687.15C356.73 687.61 356.25 688.07 355.74 688.53C355.24 688.99 354.71 689.55 354.07 689.92C353.44 690.29 352.64 690.52 351.94 690.75C351.23 690.98 350.56 691.27 349.82 691.30C349.08 691.33 348.52 691.00 347.50 690.91C346.48 690.82 344.63 690.92 343.69 690.75C342.75 690.59 342.42 690.29 341.86 689.92C341.30 689.55 340.81 688.99 340.33 688.53C339.84 688.07 339.39 687.61 338.96 687.15C338.52 686.69 338.21 686.45 337.72 685.77C337.24 685.08 336.36 683.94 336.05 683.03C335.75 682.11 335.87 681.18 335.89 680.26C335.91 679.34 336.06 678.42 336.19 677.49C336.32 676.57 336.48 675.65 336.66 674.73C336.83 673.80 337.03 672.88 337.26 671.96C337.49 671.04 337.80 669.88 338.03 669.19C338.25 668.50 338.27 668.27 338.63 667.81C338.99 667.35 339.57 666.77 340.16 666.45C340.75 666.13 341.37 666.09 342.16 665.88C342.95 665.67 344.14 665.23 344.90 665.20Z" fill="#BDBDBD"/><rect x="346.8" y="673.8" width="1.9" height="2.1" fill="#222"/><rect x="346.8" y="681.4" width="1.9" height="1.8" fill="#222"/><rect x="363" y="663.75" width="27" height="29.0" fill="#000"/><path d="M373.90 665.20C374.66 665.17 375.12 665.63 375.73 665.67C376.35 665.70 376.75 665.37 377.57 665.41C378.38 665.44 379.87 665.70 380.63 665.88C381.40 666.05 381.74 666.13 382.14 666.45C382.55 666.77 382.79 667.35 383.07 667.81C383.35 668.27 383.48 668.50 383.84 669.19C384.19 669.88 384.77 671.04 385.21 671.96C385.64 672.88 386.08 673.80 386.44 674.73C386.79 675.65 387.09 676.57 387.34 677.49C387.60 678.42 387.85 679.34 387.95 680.26C388.05 681.18 388.10 682.11 387.95 683.03C387.80 683.94 387.35 685.08 387.04 685.77C386.74 686.45 386.50 686.69 386.11 687.15C385.73 687.61 385.25 688.07 384.74 688.53C384.24 688.99 383.71 689.55 383.07 689.92C382.44 690.29 381.64 690.52 380.94 690.75C380.23 690.98 379.56 691.27 378.82 691.30C378.08 691.33 377.52 691.00 376.50 690.91C375.48 690.82 373.63 690.92 372.69 690.75C371.75 690.59 371.42 690.29 370.86 689.92C370.30 689.55 369.81 688.99 369.33 688.53C368.84 688.07 368.39 687.61 367.96 687.15C367.52 686.69 367.21 686.45 366.72 685.77C366.24 685.08 365.36 683.94 365.05 683.03C364.75 682.11 364.87 681.18 364.89 680.26C364.91 679.34 365.06 678.42 365.19 677.49C365.32 676.57 365.48 675.65 365.66 674.73C365.83 673.80 366.03 672.88 366.26 671.96C366.49 671.04 366.80 669.88 367.03 669.19C367.25 668.50 367.27 668.27 367.63 667.81C367.99 667.35 368.57 666.77 369.16 666.45C369.75 666.13 370.37 666.09 371.16 665.88C371.95 665.67 373.14 665.23 373.90 665.20Z" fill="#BDBDBD"/><rect x="375.8" y="673.8" width="1.9" height="2.1" fill="#222"/><rect x="375.8" y="681.4" width="1.9" height="1.8" fill="#222"/><rect x="391" y="663.75" width="29" height="29.0" fill="#000"/><path d="M402.71 665.20C403.53 665.17 404.02 665.63 404.68 665.67C405.33 665.70 405.77 665.37 406.65 665.41C407.52 665.44 409.12 665.70 409.94 665.88C410.76 666.05 411.12 666.13 411.56 666.45C412.00 666.77 412.25 667.35 412.56 667.81C412.86 668.27 413.00 668.50 413.38 669.19C413.76 669.88 414.39 671.04 414.85 671.96C415.32 672.88 415.79 673.80 416.17 674.73C416.56 675.65 416.88 676.57 417.15 677.49C417.42 678.42 417.69 679.34 417.80 680.26C417.90 681.18 417.96 682.11 417.80 683.03C417.63 683.94 417.15 685.08 416.82 685.77C416.49 686.45 416.24 686.69 415.83 687.15C415.41 687.61 414.90 688.07 414.35 688.53C413.81 688.99 413.24 689.55 412.56 689.92C411.88 690.29 411.02 690.52 410.26 690.75C409.50 690.98 408.79 691.27 407.99 691.30C407.20 691.33 406.60 691.00 405.50 690.91C404.40 690.82 402.42 690.92 401.41 690.75C400.40 690.59 400.04 690.29 399.44 689.92C398.84 689.55 398.31 688.99 397.79 688.53C397.27 688.07 396.79 687.61 396.32 687.15C395.86 686.69 395.52 686.45 395.00 685.77C394.48 685.08 393.53 683.94 393.20 683.03C392.88 682.11 393.01 681.18 393.03 680.26C393.05 679.34 393.22 678.42 393.35 677.49C393.49 676.57 393.66 675.65 393.85 674.73C394.04 673.80 394.26 672.88 394.50 671.96C394.75 671.04 395.08 669.88 395.32 669.19C395.57 668.50 395.59 668.27 395.97 667.81C396.36 667.35 396.99 666.77 397.62 666.45C398.25 666.13 398.92 666.09 399.76 665.88C400.61 665.67 401.89 665.23 402.71 665.20Z" fill="#4A4A4A"/><rect x="404.8" y="673.8" width="2.0" height="2.1" fill="#222"/><rect x="404.8" y="681.4" width="2.0" height="1.8" fill="#222"/><rect x="306" y="694" width="26" height="28.75" fill="#000"/><path d="M316.50 695.44C317.23 695.40 317.67 695.87 318.26 695.90C318.85 695.94 319.24 695.61 320.03 695.64C320.81 695.68 322.25 695.94 322.98 696.11C323.71 696.28 324.04 696.36 324.43 696.68C324.82 697.00 325.06 697.57 325.33 698.02C325.60 698.48 325.72 698.71 326.07 699.40C326.41 700.08 326.97 701.22 327.38 702.14C327.80 703.05 328.23 703.97 328.57 704.88C328.91 705.80 329.20 706.71 329.44 707.62C329.68 708.54 329.93 709.45 330.02 710.37C330.12 711.28 330.17 712.20 330.02 713.11C329.88 714.02 329.45 715.15 329.15 715.83C328.86 716.51 328.63 716.74 328.26 717.20C327.89 717.66 327.43 718.11 326.94 718.57C326.45 719.03 325.94 719.57 325.33 719.94C324.72 720.31 323.95 720.54 323.27 720.77C322.59 721.00 321.95 721.29 321.24 721.31C320.52 721.34 319.98 721.01 319.00 720.92C318.02 720.83 316.24 720.93 315.33 720.77C314.43 720.61 314.11 720.31 313.57 719.94C313.03 719.57 312.56 719.03 312.09 718.57C311.62 718.11 311.19 717.66 310.77 717.20C310.35 716.74 310.05 716.51 309.59 715.83C309.12 715.15 308.27 714.02 307.98 713.11C307.68 712.20 307.80 711.28 307.82 710.37C307.84 709.45 307.99 708.54 308.11 707.62C308.23 706.71 308.39 705.80 308.56 704.88C308.73 703.97 308.92 703.05 309.14 702.14C309.36 701.22 309.66 700.08 309.88 699.40C310.10 698.71 310.12 698.48 310.46 698.02C310.80 697.57 311.37 697.00 311.93 696.68C312.50 696.36 313.10 696.32 313.86 696.11C314.62 695.90 315.76 695.47 316.50 695.44Z" fill="#D0D0D0"/><rect x="314.6" y="719.4" width="0.9" height="0.9" fill="#444"/><rect x="328.2" y="706.8" width="0.9" height="0.9" fill="#444"/><rect x="323.6" y="696.0" width="0.9" height="0.9" fill="#444"/><rect x="314.5" y="707.2" width="0.9" height="0.9" fill="#444"/><rect x="320.1" y="715.3" width="0.9" height="0.9" fill="#fff"/><rect x="314.0" y="705.7" width="0.9" height="0.9" fill="#fff"/><rect x="309.7" y="697.9" width="0.9" height="0.9" fill="#444"/><rect x="320.2" y="701.7" width="0.9" height="0.9" fill="#444"/><rect x="324.6" y="719.2" width="0.9" height="0.9" fill="#fff"/><rect x="311.1" y="702.9" width="0.9" height="0.9" fill="#444"/><rect x="327.8" y="710.2" width="0.9" height="0.9" fill="#fff"/><rect x="315.6" y="708.2" width="0.9" height="0.9" fill="#444"/><rect x="310.7" y="720.5" width="0.9" height="0.9" fill="#fff"/><rect x="310.5" y="721.1" width="0.9" height="0.9" fill="#444"/><rect x="327.5" y="708.7" width="0.9" height="0.9" fill="#444"/><rect x="324.4" y="715.1" width="0.9" height="0.9" fill="#fff"/><rect x="318.8" y="697.8" width="0.9" height="0.9" fill="#444"/><rect x="316.4" y="717.0" width="0.9" height="0.9" fill="#444"/><rect x="314.8" y="711.4" width="0.9" height="0.9" fill="#444"/><rect x="329.0" y="720.5" width="0.9" height="0.9" fill="#444"/><rect x="307.8" y="700.9" width="0.9" height="0.9" fill="#fff"/><rect x="325.9" y="707.3" width="0.9" height="0.9" fill="#fff"/><rect x="326.6" y="717.1" width="0.9" height="0.9" fill="#fff"/><rect x="317.2" y="711.3" width="0.9" height="0.9" fill="#444"/><rect x="323.0" y="712.2" width="0.9" height="0.9" fill="#fff"/><rect x="318.7" y="715.9" width="0.9" height="0.9" fill="#fff"/><rect x="308.1" y="715.2" width="0.9" height="0.9" fill="#fff"/><rect x="318.8" y="720.8" width="0.9" height="0.9" fill="#444"/><rect x="323.0" y="702.0" width="0.9" height="0.9" fill="#444"/><rect x="323.7" y="695.6" width="0.9" height="0.9" fill="#fff"/><rect x="316.3" y="720.0" width="0.9" height="0.9" fill="#444"/><rect x="322.6" y="717.5" width="0.9" height="0.9" fill="#fff"/><rect x="314.2" y="703.4" width="0.9" height="0.9" fill="#fff"/><rect x="328.6" y="717.5" width="0.9" height="0.9" fill="#fff"/><rect x="319.0" y="699.2" width="0.9" height="0.9" fill="#fff"/><rect x="319.8" y="710.4" width="0.9" height="0.9" fill="#444"/><rect x="328.4" y="698.9" width="0.9" height="0.9" fill="#444"/><rect x="316.4" y="714.6" width="0.9" height="0.9" fill="#fff"/><rect x="325.7" y="707.6" width="0.9" height="0.9" fill="#fff"/><rect x="315.1" y="695.4" width="0.9" height="0.9" fill="#444"/><rect x="325.8" y="714.3" width="0.9" height="0.9" fill="#fff"/><rect x="317.7" y="702.1" width="0.9" height="0.9" fill="#fff"/><rect x="311.3" y="709.0" width="0.9" height="0.9" fill="#fff"/><rect x="313.2" y="705.5" width="0.9" height="0.9" fill="#444"/><rect x="323.0" y="696.8" width="0.9" height="0.9" fill="#fff"/><rect x="325.8" y="706.1" width="0.9" height="0.9" fill="#444"/><rect x="321.8" y="695.8" width="0.9" height="0.9" fill="#444"/><rect x="328.3" y="703.8" width="0.9" height="0.9" fill="#fff"/><rect x="323.3" y="703.8" width="0.9" height="0.9" fill="#444"/><rect x="312.8" y="709.0" width="0.9" height="0.9" fill="#fff"/><rect x="313.1" y="709.7" width="0.9" height="0.9" fill="#444"/><rect x="316.8" y="720.8" width="0.9" height="0.9" fill="#fff"/><rect x="319.6" y="718.0" width="0.9" height="0.9" fill="#fff"/><rect x="316.5" y="697.8" width="0.9" height="0.9" fill="#fff"/><rect x="326.6" y="710.8" width="0.9" height="0.9" fill="#444"/><rect x="313.1" y="719.0" width="0.9" height="0.9" fill="#444"/><rect x="314.1" y="719.2" width="0.9" height="0.9" fill="#444"/><rect x="325.5" y="703.4" width="0.9" height="0.9" fill="#fff"/><rect x="329.8" y="715.5" width="0.9" height="0.9" fill="#fff"/><rect x="320.7" y="714.3" width="0.9" height="0.9" fill="#fff"/><rect x="323.8" y="700.8" width="0.9" height="0.9" fill="#444"/><rect x="325.1" y="706.8" width="0.9" height="0.9" fill="#444"/><rect x="311.0" y="707.0" width="0.9" height="0.9" fill="#444"/><rect x="314.2" y="709.8" width="0.9" height="0.9" fill="#fff"/><rect x="314.9" y="708.6" width="0.9" height="0.9" fill="#444"/><rect x="324.2" y="706.0" width="0.9" height="0.9" fill="#fff"/><rect x="320.3" y="718.4" width="0.9" height="0.9" fill="#fff"/><rect x="320.0" y="703.7" width="0.9" height="0.9" fill="#fff"/><rect x="315.5" y="704.4" width="0.9" height="0.9" fill="#444"/><rect x="321.9" y="712.7" width="0.9" height="0.9" fill="#444"/><rect x="323.5" y="710.5" width="0.9" height="0.9" fill="#444"/><rect x="312.5" y="716.7" width="0.9" height="0.9" fill="#444"/><rect x="315.3" y="709.7" width="0.9" height="0.9" fill="#fff"/><rect x="316.8" y="716.6" width="0.9" height="0.9" fill="#fff"/><rect x="318.3" y="704.0" width="1.8" height="2.1" fill="#222"/><rect x="318.3" y="711.5" width="1.8" height="1.8" fill="#222"/><rect x="334" y="694" width="27" height="28.75" fill="#000"/><path d="M344.90 695.44C345.66 695.40 346.12 695.87 346.73 695.90C347.35 695.94 347.75 695.61 348.57 695.64C349.38 695.68 350.87 695.94 351.63 696.11C352.40 696.28 352.74 696.36 353.14 696.68C353.55 697.00 353.79 697.57 354.07 698.02C354.35 698.48 354.48 698.71 354.84 699.40C355.19 700.08 355.77 701.22 356.21 702.14C356.64 703.05 357.08 703.97 357.44 704.88C357.79 705.80 358.09 706.71 358.34 707.62C358.60 708.54 358.85 709.45 358.95 710.37C359.05 711.28 359.10 712.20 358.95 713.11C358.80 714.02 358.35 715.15 358.04 715.83C357.74 716.51 357.50 716.74 357.11 717.20C356.73 717.66 356.25 718.11 355.74 718.57C355.24 719.03 354.71 719.57 354.07 719.94C353.44 720.31 352.64 720.54 351.94 720.77C351.23 721.00 350.56 721.29 349.82 721.31C349.08 721.34 348.52 721.01 347.50 720.92C346.48 720.83 344.63 720.93 343.69 720.77C342.75 720.61 342.42 720.31 341.86 719.94C341.30 719.57 340.81 719.03 340.33 718.57C339.84 718.11 339.39 717.66 338.96 717.20C338.52 716.74 338.21 716.51 337.72 715.83C337.24 715.15 336.36 714.02 336.05 713.11C335.75 712.20 335.87 711.28 335.89 710.37C335.91 709.45 336.06 708.54 336.19 707.62C336.32 706.71 336.48 705.80 336.66 704.88C336.83 703.97 337.03 703.05 337.26 702.14C337.49 701.22 337.80 700.08 338.03 699.40C338.25 698.71 338.27 698.48 338.63 698.02C338.99 697.57 339.57 697.00 340.16 696.68C340.75 696.36 341.37 696.32 342.16 696.11C342.95 695.90 344.14 695.47 344.90 695.44Z" fill="#D0D0D0"/><rect x="341.9" y="703.9" width="0.9" height="0.9" fill="#fff"/><rect x="344.7" y="698.1" width="0.9" height="0.9" fill="#444"/><rect x="338.7" y="718.8" width="0.9" height="0.9" fill="#444"/><rect x="337.8" y="696.5" width="0.9" height="0.9" fill="#444"/><rect x="342.1" y="717.6" width="0.9" height="0.9" fill="#fff"/><rect x="353.3" y="703.8" width="0.9" height="0.9" fill="#fff"/><rect x="337.0" y="698.3" width="0.9" height="0.9" fill="#444"/><rect x="338.8" y="709.8" width="0.9" height="0.9" fill="#fff"/><rect x="348.4" y="703.7" width="0.9" height="0.9" fill="#444"/><rect x="357.7" y="718.4" width="0.9" height="0.9" fill="#444"/><rect x="341.1" y="715.1" width="0.9" height="0.9" fill="#fff"/><rect x="352.5" y="700.5" width="0.9" height="0.9" fill="#444"/><rect x="347.9" y="697.9" width="0.9" height="0.9" fill="#444"/><rect x="344.8" y="699.9" width="0.9" height="0.9" fill="#fff"/><rect x="352.1" y="711.0" width="0.9" height="0.9" fill="#444"/><rect x="339.6" y="718.4" width="0.9" height="0.9" fill="#444"/><rect x="359.0" y="717.9" width="0.9" height="0.9" fill="#fff"/><rect x="354.6" y="717.1" width="0.9" height="0.9" fill="#444"/><rect x="357.9" y="703.4" width="0.9" height="0.9" fill="#fff"/><rect x="350.0" y="707.8" width="0.9" height="0.9" fill="#444"/><rect x="340.5" y="699.6" width="0.9" height="0.9" fill="#fff"/><rect x="340.3" y="710.2" width="0.9" height="0.9" fill="#444"/><rect x="356.0" y="698.7" width="0.9" height="0.9" fill="#fff"/><rect x="349.2" y="701.2" width="0.9" height="0.9" fill="#444"/><rect x="353.8" y="710.5" width="0.9" height="0.9" fill="#fff"/><rect x="357.8" y="702.4" width="0.9" height="0.9" fill="#444"/><rect x="336.8" y="703.0" width="0.9" height="0.9" fill="#fff"/><rect x="342.3" y="704.1" width="0.9" height="0.9" fill="#444"/><rect x="336.7" y="698.2" width="0.9" height="0.9" fill="#444"/><rect x="358.0" y="697.1" width="0.9" height="0.9" fill="#fff"/><rect x="351.9" y="703.8" width="0.9" height="0.9" fill="#444"/><rect x="356.5" y="701.9" width="0.9" height="0.9" fill="#fff"/><rect x="339.0" y="704.0" width="0.9" height="0.9" fill="#444"/><rect x="351.3" y="708.0" width="0.9" height="0.9" fill="#fff"/><rect x="355.1" y="716.3" width="0.9" height="0.9" fill="#fff"/><rect x="356.2" y="703.7" width="0.9" height="0.9" fill="#fff"/><rect x="348.6" y="703.1" width="0.9" height="0.9" fill="#fff"/><rect x="345.6" y="710.2" width="0.9" height="0.9" fill="#fff"/><rect x="341.0" y="701.5" width="0.9" height="0.9" fill="#fff"/><rect x="350.1" y="700.5" width="0.9" height="0.9" fill="#fff"/><rect x="356.3" y="711.8" width="0.9" height="0.9" fill="#fff"/><rect x="355.3" y="711.2" width="0.9" height="0.9" fill="#444"/><rect x="348.4" y="719.8" width="0.9" height="0.9" fill="#fff"/><rect x="339.6" y="708.0" width="0.9" height="0.9" fill="#444"/><rect x="356.1" y="699.1" width="0.9" height="0.9" fill="#444"/><rect x="352.4" y="714.5" width="0.9" height="0.9" fill="#444"/><rect x="357.6" y="707.0" width="0.9" height="0.9" fill="#fff"/><rect x="356.8" y="710.1" width="0.9" height="0.9" fill="#444"/><rect x="338.4" y="712.7" width="0.9" height="0.9" fill="#fff"/><rect x="350.1" y="718.2" width="0.9" height="0.9" fill="#fff"/><rect x="354.9" y="701.9" width="0.9" height="0.9" fill="#444"/><rect x="338.6" y="721.2" width="0.9" height="0.9" fill="#444"/><rect x="356.9" y="704.0" width="0.9" height="0.9" fill="#fff"/><rect x="340.1" y="717.3" width="0.9" height="0.9" fill="#444"/><rect x="339.6" y="713.5" width="0.9" height="0.9" fill="#fff"/><rect x="355.5" y="698.3" width="0.9" height="0.9" fill="#444"/><rect x="346.9" y="702.8" width="0.9" height="0.9" fill="#fff"/><rect x="345.4" y="716.6" width="0.9" height="0.9" fill="#fff"/><rect x="357.4" y="708.5" width="0.9" height="0.9" fill="#fff"/><rect x="352.4" y="699.7" width="0.9" height="0.9" fill="#444"/><rect x="342.1" y="698.5" width="0.9" height="0.9" fill="#fff"/><rect x="352.9" y="703.4" width="0.9" height="0.9" fill="#444"/><rect x="357.4" y="704.5" width="0.9" height="0.9" fill="#fff"/><rect x="337.1" y="696.6" width="0.9" height="0.9" fill="#fff"/><rect x="342.7" y="717.5" width="0.9" height="0.9" fill="#444"/><rect x="356.6" y="700.1" width="0.9" height="0.9" fill="#fff"/><rect x="340.5" y="716.6" width="0.9" height="0.9" fill="#444"/><rect x="355.9" y="701.6" width="0.9" height="0.9" fill="#fff"/><rect x="358.2" y="699.9" width="0.9" height="0.9" fill="#fff"/><rect x="353.1" y="720.5" width="0.9" height="0.9" fill="#fff"/><rect x="348.3" y="696.8" width="0.9" height="0.9" fill="#444"/><rect x="349.9" y="710.3" width="0.9" height="0.9" fill="#fff"/><rect x="347.0" y="710.7" width="0.9" height="0.9" fill="#444"/><rect x="358.7" y="698.2" width="0.9" height="0.9" fill="#444"/><rect x="338.2" y="699.1" width="0.9" height="0.9" fill="#444"/><rect x="345.9" y="720.6" width="0.9" height="0.9" fill="#444"/><rect x="351.4" y="707.0" width="0.9" height="0.9" fill="#444"/><rect x="346.8" y="704.0" width="1.9" height="2.1" fill="#222"/><rect x="346.8" y="711.5" width="1.9" height="1.8" fill="#222"/><rect x="363" y="694" width="27" height="28.75" fill="#000"/><path d="M373.90 695.44C374.66 695.40 375.12 695.87 375.73 695.90C376.35 695.94 376.75 695.61 377.57 695.64C378.38 695.68 379.87 695.94 380.63 696.11C381.40 696.28 381.74 696.36 382.14 696.68C382.55 697.00 382.79 697.57 383.07 698.02C383.35 698.48 383.48 698.71 383.84 699.40C384.19 700.08 384.77 701.22 385.21 702.14C385.64 703.05 386.08 703.97 386.44 704.88C386.79 705.80 387.09 706.71 387.34 707.62C387.60 708.54 387.85 709.45 387.95 710.37C388.05 711.28 388.10 712.20 387.95 713.11C387.80 714.02 387.35 715.15 387.04 715.83C386.74 716.51 386.50 716.74 386.11 717.20C385.73 717.66 385.25 718.11 384.74 718.57C384.24 719.03 383.71 719.57 383.07 719.94C382.44 720.31 381.64 720.54 380.94 720.77C380.23 721.00 379.56 721.29 378.82 721.31C378.08 721.34 377.52 721.01 376.50 720.92C375.48 720.83 373.63 720.93 372.69 720.77C371.75 720.61 371.42 720.31 370.86 719.94C370.30 719.57 369.81 719.03 369.33 718.57C368.84 718.11 368.39 717.66 367.96 717.20C367.52 716.74 367.21 716.51 366.72 715.83C366.24 715.15 365.36 714.02 365.05 713.11C364.75 712.20 364.87 711.28 364.89 710.37C364.91 709.45 365.06 708.54 365.19 707.62C365.32 706.71 365.48 705.80 365.66 704.88C365.83 703.97 366.03 703.05 366.26 702.14C366.49 701.22 366.80 700.08 367.03 699.40C367.25 698.71 367.27 698.48 367.63 698.02C367.99 697.57 368.57 697.00 369.16 696.68C369.75 696.36 370.37 696.32 371.16 696.11C371.95 695.90 373.14 695.47 373.90 695.44Z" fill="#D0D0D0"/><rect x="368.7" y="705.3" width="0.9" height="0.9" fill="#444"/><rect x="383.5" y="715.9" width="0.9" height="0.9" fill="#fff"/><rect x="386.8" y="714.0" width="0.9" height="0.9" fill="#444"/><rect x="386.2" y="709.3" width="0.9" height="0.9" fill="#fff"/><rect x="368.6" y="715.6" width="0.9" height="0.9" fill="#fff"/><rect x="379.6" y="695.9" width="0.9" height="0.9" fill="#fff"/><rect x="382.7" y="706.6" width="0.9" height="0.9" fill="#fff"/><rect x="382.8" y="713.5" width="0.9" height="0.9" fill="#fff"/><rect x="387.7" y="704.0" width="0.9" height="0.9" fill="#444"/><rect x="373.4" y="705.7" width="0.9" height="0.9" fill="#444"/><rect x="378.4" y="710.9" width="0.9" height="0.9" fill="#fff"/><rect x="372.6" y="707.0" width="0.9" height="0.9" fill="#fff"/><rect x="376.8" y="712.3" width="0.9" height="0.9" fill="#fff"/><rect x="365.2" y="706.9" width="0.9" height="0.9" fill="#fff"/><rect x="380.3" y="719.9" width="0.9" height="0.9" fill="#fff"/><rect x="377.7" y="709.6" width="0.9" height="0.9" fill="#fff"/><rect x="382.5" y="711.3" width="0.9" height="0.9" fill="#444"/><rect x="377.1" y="711.6" width="0.9" height="0.9" fill="#fff"/><rect x="384.3" y="697.4" width="0.9" height="0.9" fill="#444"/><rect x="373.0" y="695.8" width="0.9" height="0.9" fill="#444"/><rect x="374.5" y="698.9" width="0.9" height="0.9" fill="#444"/><rect x="388.0" y="700.8" width="0.9" height="0.9" fill="#fff"/><rect x="366.5" y="698.1" width="0.9" height="0.9" fill="#444"/><rect x="377.0" y="705.7" width="0.9" height="0.9" fill="#444"/><rect x="378.1" y="716.6" width="0.9" height="0.9" fill="#444"/><rect x="369.5" y="708.0" width="0.9" height="0.9" fill="#444"/><rect x="379.1" y="708.5" width="0.9" height="0.9" fill="#444"/><rect x="384.5" y="715.8" width="0.9" height="0.9" fill="#444"/><rect x="373.2" y="703.6" width="0.9" height="0.9" fill="#444"/><rect x="367.4" y="711.7" width="0.9" height="0.9" fill="#fff"/><rect x="365.3" y="702.3" width="0.9" height="0.9" fill="#444"/><rect x="369.0" y="703.4" width="0.9" height="0.9" fill="#444"/><rect x="365.7" y="706.8" width="0.9" height="0.9" fill="#444"/><rect x="369.0" y="719.6" width="0.9" height="0.9" fill="#fff"/><rect x="385.4" y="706.3" width="0.9" height="0.9" fill="#fff"/><rect x="365.9" y="717.1" width="0.9" height="0.9" fill="#444"/><rect x="376.1" y="717.9" width="0.9" height="0.9" fill="#444"/><rect x="376.0" y="708.4" width="0.9" height="0.9" fill="#fff"/><rect x="374.0" y="706.4" width="0.9" height="0.9" fill="#444"/><rect x="377.3" y="701.9" width="0.9" height="0.9" fill="#444"/><rect x="374.5" y="700.3" width="0.9" height="0.9" fill="#444"/><rect x="383.3" y="702.4" width="0.9" height="0.9" fill="#444"/><rect x="382.5" y="706.1" width="0.9" height="0.9" fill="#444"/><rect x="373.7" y="703.8" width="0.9" height="0.9" fill="#fff"/><rect x="374.1" y="701.8" width="0.9" height="0.9" fill="#fff"/><rect x="368.4" y="698.9" width="0.9" height="0.9" fill="#fff"/><rect x="366.0" y="705.5" width="0.9" height="0.9" fill="#fff"/><rect x="377.6" y="699.3" width="0.9" height="0.9" fill="#fff"/><rect x="366.1" y="718.4" width="0.9" height="0.9" fill="#444"/><rect x="380.2" y="713.5" width="0.9" height="0.9" fill="#fff"/><rect x="366.4" y="720.6" width="0.9" height="0.9" fill="#fff"/><rect x="387.5" y="713.0" width="0.9" height="0.9" fill="#444"/><rect x="365.8" y="716.0" width="0.9" height="0.9" fill="#444"/><rect x="372.5" y="715.0" width="0.9" height="0.9" fill="#444"/><rect x="381.0" y="711.5" width="0.9" height="0.9" fill="#444"/><rect x="370.5" y="698.0" width="0.9" height="0.9" fill="#444"/><rect x="373.2" y="695.7" width="0.9" height="0.9" fill="#444"/><rect x="371.2" y="707.0" width="0.9" height="0.9" fill="#fff"/><rect x="385.7" y="698.0" width="0.9" height="0.9" fill="#fff"/><rect x="369.3" y="715.5" width="0.9" height="0.9" fill="#fff"/><rect x="371.2" y="702.4" width="0.9" height="0.9" fill="#444"/><rect x="371.4" y="713.0" width="0.9" height="0.9" fill="#fff"/><rect x="382.5" y="705.6" width="0.9" height="0.9" fill="#fff"/><rect x="367.0" y="700.1" width="0.9" height="0.9" fill="#444"/><rect x="376.6" y="706.5" width="0.9" height="0.9" fill="#fff"/><rect x="385.1" y="713.5" width="0.9" height="0.9" fill="#444"/><rect x="382.0" y="716.5" width="0.9" height="0.9" fill="#fff"/><rect x="377.3" y="702.9" width="0.9" height="0.9" fill="#fff"/><rect x="366.7" y="698.3" width="0.9" height="0.9" fill="#fff"/><rect x="366.5" y="707.1" width="0.9" height="0.9" fill="#444"/><rect x="370.1" y="706.9" width="0.9" height="0.9" fill="#444"/><rect x="386.4" y="708.6" width="0.9" height="0.9" fill="#444"/><rect x="383.7" y="703.8" width="0.9" height="0.9" fill="#fff"/><rect x="383.4" y="696.1" width="0.9" height="0.9" fill="#fff"/><rect x="380.4" y="703.8" width="0.9" height="0.9" fill="#fff"/><rect x="386.9" y="700.1" width="0.9" height="0.9" fill="#444"/><rect x="372.5" y="696.2" width="0.9" height="0.9" fill="#444"/><rect x="375.8" y="704.0" width="1.9" height="2.1" fill="#222"/><rect x="375.8" y="711.5" width="1.9" height="1.8" fill="#222"/><rect x="391" y="694" width="29" height="28.75" fill="#000"/><path d="M402.71 695.44C403.53 695.40 404.02 695.87 404.68 695.90C405.33 695.94 405.77 695.61 406.65 695.64C407.52 695.68 409.12 695.94 409.94 696.11C410.76 696.28 411.12 696.36 411.56 696.68C412.00 697.00 412.25 697.57 412.56 698.02C412.86 698.48 413.00 698.71 413.38 699.40C413.76 700.08 414.39 701.22 414.85 702.14C415.32 703.05 415.79 703.97 416.17 704.88C416.56 705.80 416.88 706.71 417.15 707.62C417.42 708.54 417.69 709.45 417.80 710.37C417.90 711.28 417.96 712.20 417.80 713.11C417.63 714.02 417.15 715.15 416.82 715.83C416.49 716.51 416.24 716.74 415.83 717.20C415.41 717.66 414.90 718.11 414.35 718.57C413.81 719.03 413.24 719.57 412.56 719.94C411.88 720.31 411.02 720.54 410.26 720.77C409.50 721.00 408.79 721.29 407.99 721.31C407.20 721.34 406.60 721.01 405.50 720.92C404.40 720.83 402.42 720.93 401.41 720.77C400.40 720.61 400.04 720.31 399.44 719.94C398.84 719.57 398.31 719.03 397.79 718.57C397.27 718.11 396.79 717.66 396.32 717.20C395.86 716.74 395.52 716.51 395.00 715.83C394.48 715.15 393.53 714.02 393.20 713.11C392.88 712.20 393.01 711.28 393.03 710.37C393.05 709.45 393.22 708.54 393.35 707.62C393.49 706.71 393.66 705.80 393.85 704.88C394.04 703.97 394.26 703.05 394.50 702.14C394.75 701.22 395.08 700.08 395.32 699.40C395.57 698.71 395.59 698.48 395.97 698.02C396.36 697.57 396.99 697.00 397.62 696.68C398.25 696.36 398.92 696.32 399.76 696.11C400.61 695.90 401.89 695.47 402.71 695.44Z" fill="#4A4A4A"/><rect x="401.7" y="697.0" width="0.9" height="0.9" fill="#fff"/><rect x="407.6" y="714.8" width="0.9" height="0.9" fill="#444"/><rect x="414.5" y="717.8" width="0.9" height="0.9" fill="#444"/><rect x="407.1" y="698.9" width="0.9" height="0.9" fill="#444"/><rect x="401.1" y="719.4" width="0.9" height="0.9" fill="#444"/><rect x="401.4" y="702.3" width="0.9" height="0.9" fill="#fff"/><rect x="401.4" y="718.7" width="0.9" height="0.9" fill="#444"/><rect x="394.2" y="703.0" width="0.9" height="0.9" fill="#444"/><rect x="395.8" y="715.1" width="0.9" height="0.9" fill="#fff"/><rect x="400.7" y="699.7" width="0.9" height="0.9" fill="#444"/><rect x="409.6" y="710.9" width="0.9" height="0.9" fill="#fff"/><rect x="405.6" y="709.2" width="0.9" height="0.9" fill="#fff"/><rect x="412.4" y="704.9" width="0.9" height="0.9" fill="#fff"/><rect x="400.9" y="707.9" width="0.9" height="0.9" fill="#444"/><rect x="394.5" y="697.5" width="0.9" height="0.9" fill="#444"/><rect x="403.6" y="696.2" width="0.9" height="0.9" fill="#444"/><rect x="394.6" y="705.5" width="0.9" height="0.9" fill="#444"/><rect x="416.2" y="696.2" width="0.9" height="0.9" fill="#fff"/><rect x="404.8" y="701.7" width="0.9" height="0.9" fill="#fff"/><rect x="398.5" y="700.4" width="0.9" height="0.9" fill="#fff"/><rect x="415.6" y="717.2" width="0.9" height="0.9" fill="#444"/><rect x="405.9" y="709.0" width="0.9" height="0.9" fill="#fff"/><rect x="393.3" y="712.2" width="0.9" height="0.9" fill="#444"/><rect x="398.9" y="698.8" width="0.9" height="0.9" fill="#444"/><rect x="406.9" y="716.5" width="0.9" height="0.9" fill="#fff"/><rect x="417.8" y="718.7" width="0.9" height="0.9" fill="#fff"/><rect x="397.5" y="709.7" width="0.9" height="0.9" fill="#444"/><rect x="411.2" y="714.8" width="0.9" height="0.9" fill="#444"/><rect x="396.3" y="721.2" width="0.9" height="0.9" fill="#fff"/><rect x="410.6" y="708.0" width="0.9" height="0.9" fill="#fff"/><rect x="399.9" y="708.6" width="0.9" height="0.9" fill="#fff"/><rect x="414.1" y="710.6" width="0.9" height="0.9" fill="#fff"/><rect x="402.5" y="718.8" width="0.9" height="0.9" fill="#fff"/><rect x="397.2" y="717.9" width="0.9" height="0.9" fill="#fff"/><rect x="399.6" y="707.5" width="0.9" height="0.9" fill="#fff"/><rect x="398.7" y="711.9" width="0.9" height="0.9" fill="#444"/><rect x="415.6" y="719.6" width="0.9" height="0.9" fill="#444"/><rect x="405.4" y="713.2" width="0.9" height="0.9" fill="#444"/><rect x="408.3" y="697.5" width="0.9" height="0.9" fill="#444"/><rect x="403.5" y="697.7" width="0.9" height="0.9" fill="#444"/><rect x="394.2" y="697.1" width="0.9" height="0.9" fill="#fff"/><rect x="407.2" y="697.2" width="0.9" height="0.9" fill="#fff"/><rect x="395.7" y="698.9" width="0.9" height="0.9" fill="#fff"/><rect x="413.8" y="715.1" width="0.9" height="0.9" fill="#444"/><rect x="411.6" y="710.6" width="0.9" height="0.9" fill="#fff"/><rect x="410.2" y="711.3" width="0.9" height="0.9" fill="#fff"/><rect x="408.3" y="719.0" width="0.9" height="0.9" fill="#fff"/><rect x="414.7" y="704.5" width="0.9" height="0.9" fill="#444"/><rect x="404.9" y="713.4" width="0.9" height="0.9" fill="#fff"/><rect x="414.2" y="697.1" width="0.9" height="0.9" fill="#444"/><rect x="416.3" y="721.2" width="0.9" height="0.9" fill="#444"/><rect x="415.4" y="714.8" width="0.9" height="0.9" fill="#444"/><rect x="405.3" y="702.5" width="0.9" height="0.9" fill="#444"/><rect x="397.3" y="699.6" width="0.9" height="0.9" fill="#444"/><rect x="400.7" y="696.1" width="0.9" height="0.9" fill="#fff"/><rect x="415.8" y="697.5" width="0.9" height="0.9" fill="#444"/><rect x="396.6" y="701.7" width="0.9" height="0.9" fill="#fff"/><rect x="406.9" y="707.5" width="0.9" height="0.9" fill="#444"/><rect x="411.9" y="717.4" width="0.9" height="0.9" fill="#444"/><rect x="404.7" y="707.1" width="0.9" height="0.9" fill="#444"/><rect x="415.6" y="711.4" width="0.9" height="0.9" fill="#444"/><rect x="417.2" y="721.3" width="0.9" height="0.9" fill="#444"/><rect x="399.5" y="710.3" width="0.9" height="0.9" fill="#fff"/><rect x="397.6" y="713.4" width="0.9" height="0.9" fill="#444"/><rect x="415.8" y="715.3" width="0.9" height="0.9" fill="#fff"/><rect x="402.0" y="715.0" width="0.9" height="0.9" fill="#444"/><rect x="410.8" y="701.3" width="0.9" height="0.9" fill="#444"/><rect x="417.4" y="712.8" width="0.9" height="0.9" fill="#fff"/><rect x="415.9" y="710.3" width="0.9" height="0.9" fill="#fff"/><rect x="406.1" y="711.6" width="0.9" height="0.9" fill="#444"/><rect x="405.9" y="713.0" width="0.9" height="0.9" fill="#444"/><rect x="396.9" y="718.6" width="0.9" height="0.9" fill="#fff"/><rect x="416.1" y="706.1" width="0.9" height="0.9" fill="#444"/><rect x="415.8" y="698.3" width="0.9" height="0.9" fill="#fff"/><rect x="400.8" y="702.5" width="0.9" height="0.9" fill="#fff"/><rect x="395.9" y="695.6" width="0.9" height="0.9" fill="#444"/><rect x="412.1" y="700.4" width="0.9" height="0.9" fill="#fff"/><rect x="416.2" y="713.3" width="0.9" height="0.9" fill="#444"/><rect x="404.0" y="707.5" width="0.9" height="0.9" fill="#fff"/><rect x="401.3" y="703.1" width="0.9" height="0.9" fill="#fff"/><rect x="399.2" y="713.9" width="0.9" height="0.9" fill="#fff"/><rect x="396.3" y="716.7" width="0.9" height="0.9" fill="#444"/><rect x="414.6" y="707.9" width="0.9" height="0.9" fill="#fff"/><rect x="404.8" y="704.0" width="2.0" height="2.1" fill="#222"/><rect x="404.8" y="711.5" width="2.0" height="1.8" fill="#222"/><rect x="306" y="724" width="26" height="28" fill="#000"/><path d="M316.50 725.40C317.23 725.37 317.67 725.82 318.26 725.85C318.85 725.89 319.24 725.57 320.03 725.60C320.81 725.64 322.25 725.89 322.98 726.06C323.71 726.22 324.04 726.30 324.43 726.61C324.82 726.92 325.06 727.48 325.33 727.92C325.60 728.36 325.72 728.59 326.07 729.26C326.41 729.92 326.97 731.04 327.38 731.93C327.80 732.82 328.23 733.71 328.57 734.60C328.91 735.49 329.20 736.38 329.44 737.27C329.68 738.16 329.93 739.05 330.02 739.94C330.12 740.83 330.17 741.73 330.02 742.61C329.88 743.50 329.45 744.59 329.15 745.26C328.86 745.92 328.63 746.15 328.26 746.59C327.89 747.04 327.43 747.48 326.94 747.93C326.45 748.37 325.94 748.91 325.33 749.26C324.72 749.62 323.95 749.85 323.27 750.07C322.59 750.29 321.95 750.57 321.24 750.60C320.52 750.63 319.98 750.31 319.00 750.22C318.02 750.13 316.24 750.23 315.33 750.07C314.43 749.91 314.11 749.62 313.57 749.26C313.03 748.91 312.56 748.37 312.09 747.93C311.62 747.48 311.19 747.04 310.77 746.59C310.35 746.15 310.05 745.92 309.59 745.26C309.12 744.59 308.27 743.50 307.98 742.61C307.68 741.73 307.80 740.83 307.82 739.94C307.84 739.05 307.99 738.16 308.11 737.27C308.23 736.38 308.39 735.49 308.56 734.60C308.73 733.71 308.92 732.82 309.14 731.93C309.36 731.04 309.66 729.92 309.88 729.26C310.10 728.59 310.12 728.36 310.46 727.92C310.80 727.48 311.37 726.92 311.93 726.61C312.50 726.30 313.10 726.26 313.86 726.06C314.62 725.85 315.76 725.43 316.50 725.40Z" fill="#C4C4C4"/><rect x="318.3" y="733.7" width="1.8" height="2.0" fill="#222"/><rect x="318.3" y="741.0" width="1.8" height="1.8" fill="#222"/><rect x="334" y="724" width="27" height="28" fill="#000"/><path d="M344.90 725.40C345.66 725.37 346.12 725.82 346.73 725.85C347.35 725.89 347.75 725.57 348.57 725.60C349.38 725.64 350.87 725.89 351.63 726.06C352.40 726.22 352.74 726.30 353.14 726.61C353.55 726.92 353.79 727.48 354.07 727.92C354.35 728.36 354.48 728.59 354.84 729.26C355.19 729.92 355.77 731.04 356.21 731.93C356.64 732.82 357.08 733.71 357.44 734.60C357.79 735.49 358.09 736.38 358.34 737.27C358.60 738.16 358.85 739.05 358.95 739.94C359.05 740.83 359.10 741.73 358.95 742.61C358.80 743.50 358.35 744.59 358.04 745.26C357.74 745.92 357.50 746.15 357.11 746.59C356.73 747.04 356.25 747.48 355.74 747.93C355.24 748.37 354.71 748.91 354.07 749.26C353.44 749.62 352.64 749.85 351.94 750.07C351.23 750.29 350.56 750.57 349.82 750.60C349.08 750.63 348.52 750.31 347.50 750.22C346.48 750.13 344.63 750.23 343.69 750.07C342.75 749.91 342.42 749.62 341.86 749.26C341.30 748.91 340.81 748.37 340.33 747.93C339.84 747.48 339.39 747.04 338.96 746.59C338.52 746.15 338.21 745.92 337.72 745.26C337.24 744.59 336.36 743.50 336.05 742.61C335.75 741.73 335.87 740.83 335.89 739.94C335.91 739.05 336.06 738.16 336.19 737.27C336.32 736.38 336.48 735.49 336.66 734.60C336.83 733.71 337.03 732.82 337.26 731.93C337.49 731.04 337.80 729.92 338.03 729.26C338.25 728.59 338.27 728.36 338.63 727.92C338.99 727.48 339.57 726.92 340.16 726.61C340.75 726.30 341.37 726.26 342.16 726.06C342.95 725.85 344.14 725.43 344.90 725.40Z" fill="#C4C4C4"/><rect x="346.8" y="733.7" width="1.9" height="2.0" fill="#222"/><rect x="346.8" y="741.0" width="1.9" height="1.8" fill="#222"/><rect x="363" y="724" width="27" height="28" fill="#000"/><path d="M373.90 725.40C374.66 725.37 375.12 725.82 375.73 725.85C376.35 725.89 376.75 725.57 377.57 725.60C378.38 725.64 379.87 725.89 380.63 726.06C381.40 726.22 381.74 726.30 382.14 726.61C382.55 726.92 382.79 727.48 383.07 727.92C383.35 728.36 383.48 728.59 383.84 729.26C384.19 729.92 384.77 731.04 385.21 731.93C385.64 732.82 386.08 733.71 386.44 734.60C386.79 735.49 387.09 736.38 387.34 737.27C387.60 738.16 387.85 739.05 387.95 739.94C388.05 740.83 388.10 741.73 387.95 742.61C387.80 743.50 387.35 744.59 387.04 745.26C386.74 745.92 386.50 746.15 386.11 746.59C385.73 747.04 385.25 747.48 384.74 747.93C384.24 748.37 383.71 748.91 383.07 749.26C382.44 749.62 381.64 749.85 380.94 750.07C380.23 750.29 379.56 750.57 378.82 750.60C378.08 750.63 377.52 750.31 376.50 750.22C375.48 750.13 373.63 750.23 372.69 750.07C371.75 749.91 371.42 749.62 370.86 749.26C370.30 748.91 369.81 748.37 369.33 747.93C368.84 747.48 368.39 747.04 367.96 746.59C367.52 746.15 367.21 745.92 366.72 745.26C366.24 744.59 365.36 743.50 365.05 742.61C364.75 741.73 364.87 740.83 364.89 739.94C364.91 739.05 365.06 738.16 365.19 737.27C365.32 736.38 365.48 735.49 365.66 734.60C365.83 733.71 366.03 732.82 366.26 731.93C366.49 731.04 366.80 729.92 367.03 729.26C367.25 728.59 367.27 728.36 367.63 727.92C367.99 727.48 368.57 726.92 369.16 726.61C369.75 726.30 370.37 726.26 371.16 726.06C371.95 725.85 373.14 725.43 373.90 725.40Z" fill="#C4C4C4"/><rect x="375.8" y="733.7" width="1.9" height="2.0" fill="#222"/><rect x="375.8" y="741.0" width="1.9" height="1.8" fill="#222"/><rect x="391" y="724" width="29" height="28" fill="#000"/><path d="M402.71 725.40C403.53 725.37 404.02 725.82 404.68 725.85C405.33 725.89 405.77 725.57 406.65 725.60C407.52 725.64 409.12 725.89 409.94 726.06C410.76 726.22 411.12 726.30 411.56 726.61C412.00 726.92 412.25 727.48 412.56 727.92C412.86 728.36 413.00 728.59 413.38 729.26C413.76 729.92 414.39 731.04 414.85 731.93C415.32 732.82 415.79 733.71 416.17 734.60C416.56 735.49 416.88 736.38 417.15 737.27C417.42 738.16 417.69 739.05 417.80 739.94C417.90 740.83 417.96 741.73 417.80 742.61C417.63 743.50 417.15 744.59 416.82 745.26C416.49 745.92 416.24 746.15 415.83 746.59C415.41 747.04 414.90 747.48 414.35 747.93C413.81 748.37 413.24 748.91 412.56 749.26C411.88 749.62 411.02 749.85 410.26 750.07C409.50 750.29 408.79 750.57 407.99 750.60C407.20 750.63 406.60 750.31 405.50 750.22C404.40 750.13 402.42 750.23 401.41 750.07C400.40 749.91 400.04 749.62 399.44 749.26C398.84 748.91 398.31 748.37 397.79 747.93C397.27 747.48 396.79 747.04 396.32 746.59C395.86 746.15 395.52 745.92 395.00 745.26C394.48 744.59 393.53 743.50 393.20 742.61C392.88 741.73 393.01 740.83 393.03 739.94C393.05 739.05 393.22 738.16 393.35 737.27C393.49 736.38 393.66 735.49 393.85 734.60C394.04 733.71 394.26 732.82 394.50 731.93C394.75 731.04 395.08 729.92 395.32 729.26C395.57 728.59 395.59 728.36 395.97 727.92C396.36 727.48 396.99 726.92 397.62 726.61C398.25 726.30 398.92 726.26 399.76 726.06C400.61 725.85 401.89 725.43 402.71 725.40Z" fill="#4A4A4A"/><rect x="404.8" y="733.7" width="2.0" height="2.0" fill="#222"/><rect x="404.8" y="741.0" width="2.0" height="1.8" fill="#222"/><rect x="316.5" y="777.5" width="98" height="112" fill="#fff" stroke="#3A6EA5" stroke-width="1.3"/><rect x="317.5" y="778" width="88.5" height="4" fill="#FFBB00"/><rect x="317.5" y="782" width="88.5" height="37" fill="#777"/><rect x="318" y="782" width="20" height="16" fill="#000"/><path d="M326.07 782.80C326.64 782.78 326.98 783.04 327.43 783.06C327.89 783.08 328.19 782.90 328.79 782.92C329.40 782.93 330.50 783.08 331.06 783.17C331.63 783.27 331.88 783.31 332.18 783.49C332.48 783.67 332.66 783.99 332.87 784.24C333.08 784.49 333.17 784.62 333.44 785.00C333.70 785.38 334.13 786.02 334.45 786.53C334.77 787.04 335.10 787.55 335.36 788.06C335.63 788.56 335.85 789.07 336.03 789.58C336.22 790.09 336.41 790.60 336.48 791.11C336.55 791.62 336.59 792.13 336.48 792.64C336.37 793.14 336.04 793.77 335.81 794.15C335.58 794.53 335.40 794.66 335.12 794.91C334.84 795.16 334.48 795.42 334.11 795.67C333.73 795.93 333.34 796.23 332.87 796.44C332.40 796.64 331.81 796.77 331.29 796.90C330.76 797.02 330.27 797.19 329.72 797.20C329.17 797.21 328.76 797.03 328.00 796.98C327.24 796.93 325.88 796.99 325.18 796.90C324.48 796.81 324.24 796.64 323.82 796.44C323.40 796.23 323.04 795.93 322.69 795.67C322.33 795.42 321.99 795.16 321.67 794.91C321.35 794.66 321.12 794.53 320.76 794.15C320.40 793.77 319.75 793.14 319.52 792.64C319.29 792.13 319.38 791.62 319.40 791.11C319.42 790.60 319.53 790.09 319.62 789.58C319.72 789.07 319.84 788.56 319.97 788.06C320.10 787.55 320.25 787.04 320.41 786.53C320.58 786.02 320.81 785.38 320.98 785.00C321.15 784.62 321.17 784.49 321.43 784.24C321.69 783.99 322.13 783.67 322.56 783.49C323.00 783.31 323.46 783.29 324.04 783.17C324.63 783.06 325.51 782.82 326.07 782.80Z" fill="#B4B4B4"/><rect x="327.5" y="787.6" width="1.4" height="1.2" fill="#222"/><rect x="327.5" y="791.7" width="1.4" height="1.0" fill="#222"/><rect x="339.5" y="782" width="21.0" height="16" fill="#000"/><path d="M347.98 782.80C348.57 782.78 348.93 783.04 349.40 783.06C349.88 783.08 350.20 782.90 350.83 782.92C351.47 782.93 352.62 783.08 353.21 783.17C353.81 783.27 354.07 783.31 354.39 783.49C354.70 783.67 354.89 783.99 355.11 784.24C355.33 784.49 355.43 784.62 355.71 785.00C355.98 785.38 356.44 786.02 356.77 786.53C357.11 787.04 357.45 787.55 357.73 788.06C358.01 788.56 358.24 789.07 358.43 789.58C358.63 790.09 358.83 790.60 358.90 791.11C358.98 791.62 359.02 792.13 358.90 792.64C358.79 793.14 358.44 793.77 358.20 794.15C357.96 794.53 357.77 794.66 357.48 794.91C357.18 795.16 356.81 795.42 356.41 795.67C356.02 795.93 355.60 796.23 355.11 796.44C354.62 796.64 354.00 796.77 353.45 796.90C352.90 797.02 352.38 797.19 351.81 797.20C351.23 797.21 350.79 797.03 350.00 796.98C349.21 796.93 347.77 796.99 347.04 796.90C346.31 796.81 346.05 796.64 345.61 796.44C345.17 796.23 344.80 795.93 344.42 795.67C344.04 795.42 343.69 795.16 343.35 794.91C343.02 794.66 342.77 794.53 342.40 794.15C342.02 793.77 341.33 793.14 341.10 792.64C340.86 792.13 340.95 791.62 340.97 791.11C340.99 790.60 341.11 790.09 341.20 789.58C341.30 789.07 341.43 788.56 341.57 788.06C341.70 787.55 341.86 787.04 342.04 786.53C342.21 786.02 342.45 785.38 342.63 785.00C342.81 784.62 342.82 784.49 343.10 784.24C343.38 783.99 343.84 783.67 344.29 783.49C344.75 783.31 345.23 783.29 345.85 783.17C346.46 783.06 347.38 782.82 347.98 782.80Z" fill="#B4B4B4"/><rect x="349.5" y="787.6" width="1.4" height="1.2" fill="#222"/><rect x="349.5" y="791.7" width="1.4" height="1.0" fill="#222"/><rect x="362" y="782" width="20.5" height="16" fill="#000"/><path d="M370.28 782.80C370.85 782.78 371.20 783.04 371.67 783.06C372.13 783.08 372.44 782.90 373.06 782.92C373.68 782.93 374.81 783.08 375.39 783.17C375.97 783.27 376.23 783.31 376.53 783.49C376.84 783.67 377.02 783.99 377.24 784.24C377.45 784.49 377.55 784.62 377.82 785.00C378.09 785.38 378.53 786.02 378.86 786.53C379.19 787.04 379.53 787.55 379.80 788.06C380.07 788.56 380.29 789.07 380.48 789.58C380.67 790.09 380.87 790.60 380.94 791.11C381.02 791.62 381.06 792.13 380.94 792.64C380.83 793.14 380.49 793.77 380.25 794.15C380.02 794.53 379.84 794.66 379.55 794.91C379.26 795.16 378.89 795.42 378.51 795.67C378.12 795.93 377.72 796.23 377.24 796.44C376.76 796.64 376.16 796.77 375.62 796.90C375.08 797.02 374.57 797.19 374.01 797.20C373.45 797.21 373.03 797.03 372.25 796.98C371.47 796.93 370.07 796.99 369.36 796.90C368.64 796.81 368.39 796.64 367.97 796.44C367.54 796.23 367.17 795.93 366.80 795.67C366.44 795.42 366.09 795.16 365.76 794.91C365.43 794.66 365.20 794.53 364.83 794.15C364.46 793.77 363.79 793.14 363.56 792.64C363.33 792.13 363.42 791.62 363.44 791.11C363.45 790.60 363.57 790.09 363.66 789.58C363.76 789.07 363.88 788.56 364.02 788.06C364.15 787.55 364.30 787.04 364.48 786.53C364.65 786.02 364.88 785.38 365.06 785.00C365.23 784.62 365.25 784.49 365.52 784.24C365.79 783.99 366.23 783.67 366.68 783.49C367.13 783.31 367.60 783.29 368.20 783.17C368.79 783.06 369.70 782.82 370.28 782.80Z" fill="#B4B4B4"/><rect x="371.7" y="787.6" width="1.4" height="1.2" fill="#222"/><rect x="371.7" y="791.7" width="1.4" height="1.0" fill="#222"/><rect x="384" y="782" width="21" height="16" fill="#000"/><path d="M392.48 782.80C393.07 782.78 393.43 783.04 393.90 783.06C394.38 783.08 394.70 782.90 395.33 782.92C395.97 782.93 397.12 783.08 397.71 783.17C398.31 783.27 398.57 783.31 398.89 783.49C399.20 783.67 399.39 783.99 399.61 784.24C399.83 784.49 399.93 784.62 400.21 785.00C400.48 785.38 400.94 786.02 401.27 786.53C401.61 787.04 401.95 787.55 402.23 788.06C402.51 788.56 402.74 789.07 402.93 789.58C403.13 790.09 403.33 790.60 403.40 791.11C403.48 791.62 403.52 792.13 403.40 792.64C403.29 793.14 402.94 793.77 402.70 794.15C402.46 794.53 402.27 794.66 401.98 794.91C401.68 795.16 401.31 795.42 400.91 795.67C400.52 795.93 400.10 796.23 399.61 796.44C399.12 796.64 398.50 796.77 397.95 796.90C397.40 797.02 396.88 797.19 396.31 797.20C395.73 797.21 395.29 797.03 394.50 796.98C393.71 796.93 392.27 796.99 391.54 796.90C390.81 796.81 390.55 796.64 390.11 796.44C389.67 796.23 389.30 795.93 388.92 795.67C388.54 795.42 388.19 795.16 387.85 794.91C387.52 794.66 387.27 794.53 386.90 794.15C386.52 793.77 385.83 793.14 385.60 792.64C385.36 792.13 385.45 791.62 385.47 791.11C385.49 790.60 385.61 790.09 385.70 789.58C385.80 789.07 385.93 788.56 386.07 788.06C386.20 787.55 386.36 787.04 386.54 786.53C386.71 786.02 386.95 785.38 387.13 785.00C387.31 784.62 387.32 784.49 387.60 784.24C387.88 783.99 388.34 783.67 388.79 783.49C389.25 783.31 389.73 783.29 390.35 783.17C390.96 783.06 391.88 782.82 392.48 782.80Z" fill="#4A4A4A"/><rect x="394.0" y="787.6" width="1.4" height="1.2" fill="#222"/><rect x="394.0" y="791.7" width="1.4" height="1.0" fill="#222"/><rect x="318" y="800" width="20" height="18.5" fill="#000"/><path d="M326.07 800.92C326.64 800.90 326.98 801.20 327.43 801.22C327.89 801.25 328.19 801.04 328.79 801.06C329.40 801.08 330.50 801.25 331.06 801.36C331.63 801.47 331.88 801.52 332.18 801.72C332.48 801.93 332.66 802.30 332.87 802.59C333.08 802.88 333.17 803.03 333.44 803.47C333.70 803.91 334.13 804.65 334.45 805.24C334.77 805.83 335.10 806.41 335.36 807.00C335.63 807.59 335.85 808.18 336.03 808.77C336.22 809.36 336.41 809.94 336.48 810.53C336.55 811.12 336.59 811.71 336.48 812.30C336.37 812.88 336.04 813.61 335.81 814.05C335.58 814.48 335.40 814.63 335.12 814.93C334.84 815.22 334.48 815.52 334.11 815.81C333.73 816.10 333.34 816.46 332.87 816.69C332.40 816.93 331.81 817.08 331.29 817.23C330.76 817.37 330.27 817.56 329.72 817.57C329.17 817.59 328.76 817.38 328.00 817.33C327.24 817.27 325.88 817.33 325.18 817.23C324.48 817.12 324.24 816.93 323.82 816.69C323.40 816.46 323.04 816.10 322.69 815.81C322.33 815.52 321.99 815.22 321.67 814.93C321.35 814.63 321.12 814.48 320.76 814.05C320.40 813.61 319.75 812.88 319.52 812.30C319.29 811.71 319.38 811.12 319.40 810.53C319.42 809.94 319.53 809.36 319.62 808.77C319.72 808.18 319.84 807.59 319.97 807.00C320.10 806.41 320.25 805.83 320.41 805.24C320.58 804.65 320.81 803.91 320.98 803.47C321.15 803.03 321.17 802.88 321.43 802.59C321.69 802.30 322.13 801.93 322.56 801.72C323.00 801.52 323.46 801.49 324.04 801.36C324.63 801.22 325.51 800.95 326.07 800.92Z" fill="#BBBBBB"/><rect x="327.5" y="806.4" width="1.4" height="1.3" fill="#222"/><rect x="327.5" y="811.2" width="1.4" height="1.2" fill="#222"/><rect x="339.5" y="800" width="21.0" height="18.5" fill="#000"/><path d="M347.98 800.92C348.57 800.90 348.93 801.20 349.40 801.22C349.88 801.25 350.20 801.04 350.83 801.06C351.47 801.08 352.62 801.25 353.21 801.36C353.81 801.47 354.07 801.52 354.39 801.72C354.70 801.93 354.89 802.30 355.11 802.59C355.33 802.88 355.43 803.03 355.71 803.47C355.98 803.91 356.44 804.65 356.77 805.24C357.11 805.83 357.45 806.41 357.73 807.00C358.01 807.59 358.24 808.18 358.43 808.77C358.63 809.36 358.83 809.94 358.90 810.53C358.98 811.12 359.02 811.71 358.90 812.30C358.79 812.88 358.44 813.61 358.20 814.05C357.96 814.48 357.77 814.63 357.48 814.93C357.18 815.22 356.81 815.52 356.41 815.81C356.02 816.10 355.60 816.46 355.11 816.69C354.62 816.93 354.00 817.08 353.45 817.23C352.90 817.37 352.38 817.56 351.81 817.57C351.23 817.59 350.79 817.38 350.00 817.33C349.21 817.27 347.77 817.33 347.04 817.23C346.31 817.12 346.05 816.93 345.61 816.69C345.17 816.46 344.80 816.10 344.42 815.81C344.04 815.52 343.69 815.22 343.35 814.93C343.02 814.63 342.77 814.48 342.40 814.05C342.02 813.61 341.33 812.88 341.10 812.30C340.86 811.71 340.95 811.12 340.97 810.53C340.99 809.94 341.11 809.36 341.20 808.77C341.30 808.18 341.43 807.59 341.57 807.00C341.70 806.41 341.86 805.83 342.04 805.24C342.21 804.65 342.45 803.91 342.63 803.47C342.81 803.03 342.82 802.88 343.10 802.59C343.38 802.30 343.84 801.93 344.29 801.72C344.75 801.52 345.23 801.49 345.85 801.36C346.46 801.22 347.38 800.95 347.98 800.92Z" fill="#BBBBBB"/><rect x="349.5" y="806.4" width="1.4" height="1.3" fill="#222"/><rect x="349.5" y="811.2" width="1.4" height="1.2" fill="#222"/><rect x="362" y="800" width="20.5" height="18.5" fill="#000"/><path d="M370.28 800.92C370.85 800.90 371.20 801.20 371.67 801.22C372.13 801.25 372.44 801.04 373.06 801.06C373.68 801.08 374.81 801.25 375.39 801.36C375.97 801.47 376.23 801.52 376.53 801.72C376.84 801.93 377.02 802.30 377.24 802.59C377.45 802.88 377.55 803.03 377.82 803.47C378.09 803.91 378.53 804.65 378.86 805.24C379.19 805.83 379.53 806.41 379.80 807.00C380.07 807.59 380.29 808.18 380.48 808.77C380.67 809.36 380.87 809.94 380.94 810.53C381.02 811.12 381.06 811.71 380.94 812.30C380.83 812.88 380.49 813.61 380.25 814.05C380.02 814.48 379.84 814.63 379.55 814.93C379.26 815.22 378.89 815.52 378.51 815.81C378.12 816.10 377.72 816.46 377.24 816.69C376.76 816.93 376.16 817.08 375.62 817.23C375.08 817.37 374.57 817.56 374.01 817.57C373.45 817.59 373.03 817.38 372.25 817.33C371.47 817.27 370.07 817.33 369.36 817.23C368.64 817.12 368.39 816.93 367.97 816.69C367.54 816.46 367.17 816.10 366.80 815.81C366.44 815.52 366.09 815.22 365.76 814.93C365.43 814.63 365.20 814.48 364.83 814.05C364.46 813.61 363.79 812.88 363.56 812.30C363.33 811.71 363.42 811.12 363.44 810.53C363.45 809.94 363.57 809.36 363.66 808.77C363.76 808.18 363.88 807.59 364.02 807.00C364.15 806.41 364.30 805.83 364.48 805.24C364.65 804.65 364.88 803.91 365.06 803.47C365.23 803.03 365.25 802.88 365.52 802.59C365.79 802.30 366.23 801.93 366.68 801.72C367.13 801.52 367.60 801.49 368.20 801.36C368.79 801.22 369.70 800.95 370.28 800.92Z" fill="#BBBBBB"/><rect x="371.7" y="806.4" width="1.4" height="1.3" fill="#222"/><rect x="371.7" y="811.2" width="1.4" height="1.2" fill="#222"/><rect x="384" y="800" width="21" height="18.5" fill="#000"/><path d="M392.48 800.92C393.07 800.90 393.43 801.20 393.90 801.22C394.38 801.25 394.70 801.04 395.33 801.06C395.97 801.08 397.12 801.25 397.71 801.36C398.31 801.47 398.57 801.52 398.89 801.72C399.20 801.93 399.39 802.30 399.61 802.59C399.83 802.88 399.93 803.03 400.21 803.47C400.48 803.91 400.94 804.65 401.27 805.24C401.61 805.83 401.95 806.41 402.23 807.00C402.51 807.59 402.74 808.18 402.93 808.77C403.13 809.36 403.33 809.94 403.40 810.53C403.48 811.12 403.52 811.71 403.40 812.30C403.29 812.88 402.94 813.61 402.70 814.05C402.46 814.48 402.27 814.63 401.98 814.93C401.68 815.22 401.31 815.52 400.91 815.81C400.52 816.10 400.10 816.46 399.61 816.69C399.12 816.93 398.50 817.08 397.95 817.23C397.40 817.37 396.88 817.56 396.31 817.57C395.73 817.59 395.29 817.38 394.50 817.33C393.71 817.27 392.27 817.33 391.54 817.23C390.81 817.12 390.55 816.93 390.11 816.69C389.67 816.46 389.30 816.10 388.92 815.81C388.54 815.52 388.19 815.22 387.85 814.93C387.52 814.63 387.27 814.48 386.90 814.05C386.52 813.61 385.83 812.88 385.60 812.30C385.36 811.71 385.45 811.12 385.47 810.53C385.49 809.94 385.61 809.36 385.70 808.77C385.80 808.18 385.93 807.59 386.07 807.00C386.20 806.41 386.36 805.83 386.54 805.24C386.71 804.65 386.95 803.91 387.13 803.47C387.31 803.03 387.32 802.88 387.60 802.59C387.88 802.30 388.34 801.93 388.79 801.72C389.25 801.52 389.73 801.49 390.35 801.36C390.96 801.22 391.88 800.95 392.48 800.92Z" fill="#4A4A4A"/><rect x="394.0" y="806.4" width="1.4" height="1.3" fill="#222"/><rect x="394.0" y="811.2" width="1.4" height="1.2" fill="#222"/><rect x="318" y="820.5" width="20" height="20.0" fill="#000"/><path d="M326.07 821.50C326.64 821.48 326.98 821.80 327.43 821.82C327.89 821.85 328.19 821.62 328.79 821.64C329.40 821.67 330.50 821.85 331.06 821.97C331.63 822.09 331.88 822.14 332.18 822.36C332.48 822.59 332.66 822.98 332.87 823.30C333.08 823.62 333.17 823.78 333.44 824.25C333.70 824.73 334.13 825.53 334.45 826.16C334.77 826.80 335.10 827.43 335.36 828.07C335.63 828.71 335.85 829.34 336.03 829.98C336.22 830.61 336.41 831.25 336.48 831.89C336.55 832.52 336.59 833.16 336.48 833.79C336.37 834.43 336.04 835.21 335.81 835.68C335.58 836.16 335.40 836.32 335.12 836.64C334.84 836.96 334.48 837.27 334.11 837.59C333.73 837.91 333.34 838.29 332.87 838.55C332.40 838.80 331.81 838.96 331.29 839.12C330.76 839.28 330.27 839.48 329.72 839.50C329.17 839.52 328.76 839.29 328.00 839.23C327.24 839.17 325.88 839.24 325.18 839.12C324.48 839.01 324.24 838.80 323.82 838.55C323.40 838.29 323.04 837.91 322.69 837.59C322.33 837.27 321.99 836.96 321.67 836.64C321.35 836.32 321.12 836.16 320.76 835.68C320.40 835.21 319.75 834.43 319.52 833.79C319.29 833.16 319.38 832.52 319.40 831.89C319.42 831.25 319.53 830.61 319.62 829.98C319.72 829.34 319.84 828.71 319.97 828.07C320.10 827.43 320.25 826.80 320.41 826.16C320.58 825.53 320.81 824.73 320.98 824.25C321.15 823.78 321.17 823.62 321.43 823.30C321.69 822.98 322.13 822.59 322.56 822.36C323.00 822.14 323.46 822.11 324.04 821.97C324.63 821.82 325.51 821.52 326.07 821.50Z" fill="#C4C4C4"/><rect x="327.5" y="827.4" width="1.4" height="1.4" fill="#222"/><rect x="327.5" y="832.7" width="1.4" height="1.3" fill="#222"/><rect x="339.5" y="820.5" width="21.0" height="20.0" fill="#000"/><path d="M347.98 821.50C348.57 821.48 348.93 821.80 349.40 821.82C349.88 821.85 350.20 821.62 350.83 821.64C351.47 821.67 352.62 821.85 353.21 821.97C353.81 822.09 354.07 822.14 354.39 822.36C354.70 822.59 354.89 822.98 355.11 823.30C355.33 823.62 355.43 823.78 355.71 824.25C355.98 824.73 356.44 825.53 356.77 826.16C357.11 826.80 357.45 827.43 357.73 828.07C358.01 828.71 358.24 829.34 358.43 829.98C358.63 830.61 358.83 831.25 358.90 831.89C358.98 832.52 359.02 833.16 358.90 833.79C358.79 834.43 358.44 835.21 358.20 835.68C357.96 836.16 357.77 836.32 357.48 836.64C357.18 836.96 356.81 837.27 356.41 837.59C356.02 837.91 355.60 838.29 355.11 838.55C354.62 838.80 354.00 838.96 353.45 839.12C352.90 839.28 352.38 839.48 351.81 839.50C351.23 839.52 350.79 839.29 350.00 839.23C349.21 839.17 347.77 839.24 347.04 839.12C346.31 839.01 346.05 838.80 345.61 838.55C345.17 838.29 344.80 837.91 344.42 837.59C344.04 837.27 343.69 836.96 343.35 836.64C343.02 836.32 342.77 836.16 342.40 835.68C342.02 835.21 341.33 834.43 341.10 833.79C340.86 833.16 340.95 832.52 340.97 831.89C340.99 831.25 341.11 830.61 341.20 829.98C341.30 829.34 341.43 828.71 341.57 828.07C341.70 827.43 341.86 826.80 342.04 826.16C342.21 825.53 342.45 824.73 342.63 824.25C342.81 823.78 342.82 823.62 343.10 823.30C343.38 822.98 343.84 822.59 344.29 822.36C344.75 822.14 345.23 822.11 345.85 821.97C346.46 821.82 347.38 821.52 347.98 821.50Z" fill="#C4C4C4"/><rect x="349.5" y="827.4" width="1.4" height="1.4" fill="#222"/><rect x="349.5" y="832.7" width="1.4" height="1.3" fill="#222"/><rect x="362" y="820.5" width="20.5" height="20.0" fill="#000"/><path d="M370.28 821.50C370.85 821.48 371.20 821.80 371.67 821.82C372.13 821.85 372.44 821.62 373.06 821.64C373.68 821.67 374.81 821.85 375.39 821.97C375.97 822.09 376.23 822.14 376.53 822.36C376.84 822.59 377.02 822.98 377.24 823.30C377.45 823.62 377.55 823.78 377.82 824.25C378.09 824.73 378.53 825.53 378.86 826.16C379.19 826.80 379.53 827.43 379.80 828.07C380.07 828.71 380.29 829.34 380.48 829.98C380.67 830.61 380.87 831.25 380.94 831.89C381.02 832.52 381.06 833.16 380.94 833.79C380.83 834.43 380.49 835.21 380.25 835.68C380.02 836.16 379.84 836.32 379.55 836.64C379.26 836.96 378.89 837.27 378.51 837.59C378.12 837.91 377.72 838.29 377.24 838.55C376.76 838.80 376.16 838.96 375.62 839.12C375.08 839.28 374.57 839.48 374.01 839.50C373.45 839.52 373.03 839.29 372.25 839.23C371.47 839.17 370.07 839.24 369.36 839.12C368.64 839.01 368.39 838.80 367.97 838.55C367.54 838.29 367.17 837.91 366.80 837.59C366.44 837.27 366.09 836.96 365.76 836.64C365.43 836.32 365.20 836.16 364.83 835.68C364.46 835.21 363.79 834.43 363.56 833.79C363.33 833.16 363.42 832.52 363.44 831.89C363.45 831.25 363.57 830.61 363.66 829.98C363.76 829.34 363.88 828.71 364.02 828.07C364.15 827.43 364.30 826.80 364.48 826.16C364.65 825.53 364.88 824.73 365.06 824.25C365.23 823.78 365.25 823.62 365.52 823.30C365.79 822.98 366.23 822.59 366.68 822.36C367.13 822.14 367.60 822.11 368.20 821.97C368.79 821.82 369.70 821.52 370.28 821.50Z" fill="#C4C4C4"/><rect x="371.7" y="827.4" width="1.4" height="1.4" fill="#222"/><rect x="371.7" y="832.7" width="1.4" height="1.3" fill="#222"/><rect x="384" y="820.5" width="21" height="20.0" fill="#000"/><path d="M392.48 821.50C393.07 821.48 393.43 821.80 393.90 821.82C394.38 821.85 394.70 821.62 395.33 821.64C395.97 821.67 397.12 821.85 397.71 821.97C398.31 822.09 398.57 822.14 398.89 822.36C399.20 822.59 399.39 822.98 399.61 823.30C399.83 823.62 399.93 823.78 400.21 824.25C400.48 824.73 400.94 825.53 401.27 826.16C401.61 826.80 401.95 827.43 402.23 828.07C402.51 828.71 402.74 829.34 402.93 829.98C403.13 830.61 403.33 831.25 403.40 831.89C403.48 832.52 403.52 833.16 403.40 833.79C403.29 834.43 402.94 835.21 402.70 835.68C402.46 836.16 402.27 836.32 401.98 836.64C401.68 836.96 401.31 837.27 400.91 837.59C400.52 837.91 400.10 838.29 399.61 838.55C399.12 838.80 398.50 838.96 397.95 839.12C397.40 839.28 396.88 839.48 396.31 839.50C395.73 839.52 395.29 839.29 394.50 839.23C393.71 839.17 392.27 839.24 391.54 839.12C390.81 839.01 390.55 838.80 390.11 838.55C389.67 838.29 389.30 837.91 388.92 837.59C388.54 837.27 388.19 836.96 387.85 836.64C387.52 836.32 387.27 836.16 386.90 835.68C386.52 835.21 385.83 834.43 385.60 833.79C385.36 833.16 385.45 832.52 385.47 831.89C385.49 831.25 385.61 830.61 385.70 829.98C385.80 829.34 385.93 828.71 386.07 828.07C386.20 827.43 386.36 826.80 386.54 826.16C386.71 825.53 386.95 824.73 387.13 824.25C387.31 823.78 387.32 823.62 387.60 823.30C387.88 822.98 388.34 822.59 388.79 822.36C389.25 822.14 389.73 822.11 390.35 821.97C390.96 821.82 391.88 821.52 392.48 821.50Z" fill="#4A4A4A"/><rect x="394.0" y="827.4" width="1.4" height="1.4" fill="#222"/><rect x="394.0" y="832.7" width="1.4" height="1.3" fill="#222"/><rect x="318" y="842" width="20" height="22" fill="#000"/><path d="M326.07 843.10C326.64 843.07 326.98 843.43 327.43 843.46C327.89 843.48 328.19 843.23 328.79 843.26C329.40 843.28 330.50 843.48 331.06 843.61C331.63 843.75 331.88 843.81 332.18 844.05C332.48 844.29 332.66 844.73 332.87 845.08C333.08 845.43 333.17 845.60 333.44 846.13C333.70 846.65 334.13 847.53 334.45 848.23C334.77 848.93 335.10 849.63 335.36 850.33C335.63 851.03 335.85 851.73 336.03 852.43C336.22 853.13 336.41 853.83 336.48 854.52C336.55 855.22 336.59 855.93 336.48 856.62C336.37 857.32 336.04 858.18 335.81 858.70C335.58 859.22 335.40 859.40 335.12 859.75C334.84 860.10 334.48 860.45 334.11 860.80C333.73 861.15 333.34 861.57 332.87 861.85C332.40 862.13 331.81 862.31 331.29 862.48C330.76 862.66 330.27 862.88 329.72 862.90C329.17 862.92 328.76 862.67 328.00 862.60C327.24 862.53 325.88 862.61 325.18 862.48C324.48 862.36 324.24 862.13 323.82 861.85C323.40 861.57 323.04 861.15 322.69 860.80C322.33 860.45 321.99 860.10 321.67 859.75C321.35 859.40 321.12 859.22 320.76 858.70C320.40 858.18 319.75 857.32 319.52 856.62C319.29 855.93 319.38 855.22 319.40 854.52C319.42 853.83 319.53 853.13 319.62 852.43C319.72 851.73 319.84 851.03 319.97 850.33C320.10 849.63 320.25 848.93 320.41 848.23C320.58 847.53 320.81 846.65 320.98 846.13C321.15 845.60 321.17 845.43 321.43 845.08C321.69 844.73 322.13 844.29 322.56 844.05C323.00 843.81 323.46 843.77 324.04 843.61C324.63 843.46 325.51 843.13 326.07 843.10Z" fill="#D4D4D4"/><rect x="331.4" y="859.4" width="0.9" height="0.9" fill="#fff"/><rect x="329.9" y="846.9" width="0.9" height="0.9" fill="#fff"/><rect x="329.1" y="844.5" width="0.9" height="0.9" fill="#444"/><rect x="320.4" y="845.8" width="0.9" height="0.9" fill="#444"/><rect x="325.2" y="850.9" width="0.9" height="0.9" fill="#444"/><rect x="330.4" y="843.7" width="0.9" height="0.9" fill="#fff"/><rect x="334.5" y="856.7" width="0.9" height="0.9" fill="#fff"/><rect x="332.4" y="855.1" width="0.9" height="0.9" fill="#fff"/><rect x="323.6" y="858.8" width="0.9" height="0.9" fill="#444"/><rect x="328.7" y="844.5" width="0.9" height="0.9" fill="#444"/><rect x="335.1" y="856.0" width="0.9" height="0.9" fill="#fff"/><rect x="331.1" y="860.5" width="0.9" height="0.9" fill="#444"/><rect x="327.4" y="851.2" width="0.9" height="0.9" fill="#444"/><rect x="327.1" y="843.6" width="0.9" height="0.9" fill="#fff"/><rect x="332.4" y="849.6" width="0.9" height="0.9" fill="#444"/><rect x="325.1" y="857.0" width="0.9" height="0.9" fill="#fff"/><rect x="335.3" y="851.0" width="0.9" height="0.9" fill="#444"/><rect x="322.1" y="844.8" width="0.9" height="0.9" fill="#fff"/><rect x="328.3" y="856.7" width="0.9" height="0.9" fill="#fff"/><rect x="327.8" y="861.6" width="0.9" height="0.9" fill="#fff"/><rect x="336.2" y="850.6" width="0.9" height="0.9" fill="#fff"/><rect x="332.8" y="848.6" width="0.9" height="0.9" fill="#fff"/><rect x="328.1" y="858.9" width="0.9" height="0.9" fill="#fff"/><rect x="323.6" y="861.6" width="0.9" height="0.9" fill="#444"/><rect x="331.4" y="851.4" width="0.9" height="0.9" fill="#444"/><rect x="321.6" y="850.6" width="0.9" height="0.9" fill="#444"/><rect x="329.1" y="846.5" width="0.9" height="0.9" fill="#444"/><rect x="328.5" y="852.0" width="0.9" height="0.9" fill="#fff"/><rect x="327.8" y="847.4" width="0.9" height="0.9" fill="#444"/><rect x="332.0" y="845.2" width="0.9" height="0.9" fill="#fff"/><rect x="326.9" y="852.7" width="0.9" height="0.9" fill="#fff"/><rect x="335.0" y="855.7" width="0.9" height="0.9" fill="#fff"/><rect x="321.5" y="847.8" width="0.9" height="0.9" fill="#444"/><rect x="329.5" y="851.9" width="0.9" height="0.9" fill="#fff"/><rect x="324.6" y="857.1" width="0.9" height="0.9" fill="#fff"/><rect x="330.2" y="847.1" width="0.9" height="0.9" fill="#fff"/><rect x="321.5" y="844.2" width="0.9" height="0.9" fill="#444"/><rect x="320.2" y="847.3" width="0.9" height="0.9" fill="#444"/><rect x="335.2" y="861.4" width="0.9" height="0.9" fill="#fff"/><rect x="330.5" y="853.5" width="0.9" height="0.9" fill="#fff"/><rect x="324.0" y="853.9" width="0.9" height="0.9" fill="#fff"/><rect x="324.2" y="852.5" width="0.9" height="0.9" fill="#fff"/><rect x="324.8" y="850.9" width="0.9" height="0.9" fill="#fff"/><rect x="323.0" y="855.4" width="0.9" height="0.9" fill="#444"/><rect x="327.5" y="849.6" width="1.4" height="1.6" fill="#222"/><rect x="327.5" y="855.4" width="1.4" height="1.4" fill="#222"/><rect x="339.5" y="842" width="21.0" height="22" fill="#000"/><path d="M347.98 843.10C348.57 843.07 348.93 843.43 349.40 843.46C349.88 843.48 350.20 843.23 350.83 843.26C351.47 843.28 352.62 843.48 353.21 843.61C353.81 843.75 354.07 843.81 354.39 844.05C354.70 844.29 354.89 844.73 355.11 845.08C355.33 845.43 355.43 845.60 355.71 846.13C355.98 846.65 356.44 847.53 356.77 848.23C357.11 848.93 357.45 849.63 357.73 850.33C358.01 851.03 358.24 851.73 358.43 852.43C358.63 853.13 358.83 853.83 358.90 854.52C358.98 855.22 359.02 855.93 358.90 856.62C358.79 857.32 358.44 858.18 358.20 858.70C357.96 859.22 357.77 859.40 357.48 859.75C357.18 860.10 356.81 860.45 356.41 860.80C356.02 861.15 355.60 861.57 355.11 861.85C354.62 862.13 354.00 862.31 353.45 862.48C352.90 862.66 352.38 862.88 351.81 862.90C351.23 862.92 350.79 862.67 350.00 862.60C349.21 862.53 347.77 862.61 347.04 862.48C346.31 862.36 346.05 862.13 345.61 861.85C345.17 861.57 344.80 861.15 344.42 860.80C344.04 860.45 343.69 860.10 343.35 859.75C343.02 859.40 342.77 859.22 342.40 858.70C342.02 858.18 341.33 857.32 341.10 856.62C340.86 855.93 340.95 855.22 340.97 854.52C340.99 853.83 341.11 853.13 341.20 852.43C341.30 851.73 341.43 851.03 341.57 850.33C341.70 849.63 341.86 848.93 342.04 848.23C342.21 847.53 342.45 846.65 342.63 846.13C342.81 845.60 342.82 845.43 343.10 845.08C343.38 844.73 343.84 844.29 344.29 844.05C344.75 843.81 345.23 843.77 345.85 843.61C346.46 843.46 347.38 843.13 347.98 843.10Z" fill="#D4D4D4"/><rect x="342.2" y="850.6" width="0.9" height="0.9" fill="#444"/><rect x="344.0" y="847.7" width="0.9" height="0.9" fill="#fff"/><rect x="356.7" y="859.6" width="0.9" height="0.9" fill="#444"/><rect x="356.8" y="850.0" width="0.9" height="0.9" fill="#444"/><rect x="351.3" y="845.4" width="0.9" height="0.9" fill="#fff"/><rect x="350.6" y="856.6" width="0.9" height="0.9" fill="#444"/><rect x="343.3" y="860.7" width="0.9" height="0.9" fill="#444"/><rect x="357.3" y="857.4" width="0.9" height="0.9" fill="#fff"/><rect x="349.5" y="853.5" width="0.9" height="0.9" fill="#444"/><rect x="341.0" y="848.9" width="0.9" height="0.9" fill="#fff"/><rect x="355.7" y="858.4" width="0.9" height="0.9" fill="#444"/><rect x="358.3" y="853.1" width="0.9" height="0.9" fill="#fff"/><rect x="343.0" y="843.8" width="0.9" height="0.9" fill="#fff"/><rect x="353.3" y="851.9" width="0.9" height="0.9" fill="#444"/><rect x="351.0" y="852.0" width="0.9" height="0.9" fill="#444"/><rect x="357.4" y="859.1" width="0.9" height="0.9" fill="#444"/><rect x="343.6" y="859.8" width="0.9" height="0.9" fill="#444"/><rect x="358.4" y="847.3" width="0.9" height="0.9" fill="#fff"/><rect x="346.0" y="860.5" width="0.9" height="0.9" fill="#fff"/><rect x="356.5" y="853.0" width="0.9" height="0.9" fill="#444"/><rect x="349.5" y="849.3" width="0.9" height="0.9" fill="#444"/><rect x="347.9" y="861.6" width="0.9" height="0.9" fill="#444"/><rect x="353.2" y="855.8" width="0.9" height="0.9" fill="#444"/><rect x="349.1" y="844.7" width="0.9" height="0.9" fill="#fff"/><rect x="352.1" y="852.6" width="0.9" height="0.9" fill="#fff"/><rect x="341.1" y="850.6" width="0.9" height="0.9" fill="#fff"/><rect x="353.7" y="858.0" width="0.9" height="0.9" fill="#444"/><rect x="356.6" y="846.0" width="0.9" height="0.9" fill="#444"/><rect x="342.6" y="854.2" width="0.9" height="0.9" fill="#fff"/><rect x="350.4" y="843.5" width="0.9" height="0.9" fill="#fff"/><rect x="341.3" y="862.1" width="0.9" height="0.9" fill="#fff"/><rect x="343.2" y="858.4" width="0.9" height="0.9" fill="#fff"/><rect x="358.3" y="843.8" width="0.9" height="0.9" fill="#444"/><rect x="352.6" y="855.2" width="0.9" height="0.9" fill="#444"/><rect x="345.5" y="847.0" width="0.9" height="0.9" fill="#444"/><rect x="345.8" y="844.2" width="0.9" height="0.9" fill="#fff"/><rect x="342.0" y="847.3" width="0.9" height="0.9" fill="#fff"/><rect x="358.7" y="846.3" width="0.9" height="0.9" fill="#444"/><rect x="356.1" y="849.3" width="0.9" height="0.9" fill="#fff"/><rect x="346.3" y="854.0" width="0.9" height="0.9" fill="#444"/><rect x="352.5" y="861.3" width="0.9" height="0.9" fill="#fff"/><rect x="343.6" y="857.7" width="0.9" height="0.9" fill="#444"/><rect x="342.5" y="862.4" width="0.9" height="0.9" fill="#fff"/><rect x="344.3" y="845.5" width="0.9" height="0.9" fill="#fff"/><rect x="351.2" y="855.7" width="0.9" height="0.9" fill="#fff"/><rect x="341.6" y="845.7" width="0.9" height="0.9" fill="#fff"/><rect x="349.5" y="849.6" width="1.4" height="1.6" fill="#222"/><rect x="349.5" y="855.4" width="1.4" height="1.4" fill="#222"/><rect x="362" y="842" width="20.5" height="22" fill="#000"/><path d="M370.28 843.10C370.85 843.07 371.20 843.43 371.67 843.46C372.13 843.48 372.44 843.23 373.06 843.26C373.68 843.28 374.81 843.48 375.39 843.61C375.97 843.75 376.23 843.81 376.53 844.05C376.84 844.29 377.02 844.73 377.24 845.08C377.45 845.43 377.55 845.60 377.82 846.13C378.09 846.65 378.53 847.53 378.86 848.23C379.19 848.93 379.53 849.63 379.80 850.33C380.07 851.03 380.29 851.73 380.48 852.43C380.67 853.13 380.87 853.83 380.94 854.52C381.02 855.22 381.06 855.93 380.94 856.62C380.83 857.32 380.49 858.18 380.25 858.70C380.02 859.22 379.84 859.40 379.55 859.75C379.26 860.10 378.89 860.45 378.51 860.80C378.12 861.15 377.72 861.57 377.24 861.85C376.76 862.13 376.16 862.31 375.62 862.48C375.08 862.66 374.57 862.88 374.01 862.90C373.45 862.92 373.03 862.67 372.25 862.60C371.47 862.53 370.07 862.61 369.36 862.48C368.64 862.36 368.39 862.13 367.97 861.85C367.54 861.57 367.17 861.15 366.80 860.80C366.44 860.45 366.09 860.10 365.76 859.75C365.43 859.40 365.20 859.22 364.83 858.70C364.46 858.18 363.79 857.32 363.56 856.62C363.33 855.93 363.42 855.22 363.44 854.52C363.45 853.83 363.57 853.13 363.66 852.43C363.76 851.73 363.88 851.03 364.02 850.33C364.15 849.63 364.30 848.93 364.48 848.23C364.65 847.53 364.88 846.65 365.06 846.13C365.23 845.60 365.25 845.43 365.52 845.08C365.79 844.73 366.23 844.29 366.68 844.05C367.13 843.81 367.60 843.77 368.20 843.61C368.79 843.46 369.70 843.13 370.28 843.10Z" fill="#D4D4D4"/><rect x="367.2" y="851.7" width="0.9" height="0.9" fill="#444"/><rect x="365.0" y="857.2" width="0.9" height="0.9" fill="#444"/><rect x="373.8" y="856.3" width="0.9" height="0.9" fill="#fff"/><rect x="373.4" y="853.1" width="0.9" height="0.9" fill="#fff"/><rect x="371.3" y="853.2" width="0.9" height="0.9" fill="#fff"/><rect x="375.2" y="850.5" width="0.9" height="0.9" fill="#fff"/><rect x="380.8" y="862.0" width="0.9" height="0.9" fill="#fff"/><rect x="374.9" y="862.4" width="0.9" height="0.9" fill="#fff"/><rect x="372.0" y="846.1" width="0.9" height="0.9" fill="#fff"/><rect x="371.5" y="851.4" width="0.9" height="0.9" fill="#444"/><rect x="374.6" y="848.3" width="0.9" height="0.9" fill="#444"/><rect x="376.6" y="849.3" width="0.9" height="0.9" fill="#fff"/><rect x="370.3" y="849.2" width="0.9" height="0.9" fill="#fff"/><rect x="365.0" y="862.7" width="0.9" height="0.9" fill="#444"/><rect x="377.7" y="847.7" width="0.9" height="0.9" fill="#fff"/><rect x="373.1" y="852.1" width="0.9" height="0.9" fill="#444"/><rect x="372.4" y="851.1" width="0.9" height="0.9" fill="#444"/><rect x="376.0" y="843.1" width="0.9" height="0.9" fill="#fff"/><rect x="380.8" y="852.5" width="0.9" height="0.9" fill="#444"/><rect x="364.3" y="854.4" width="0.9" height="0.9" fill="#fff"/><rect x="372.4" y="859.8" width="0.9" height="0.9" fill="#444"/><rect x="365.0" y="854.6" width="0.9" height="0.9" fill="#444"/><rect x="378.0" y="845.7" width="0.9" height="0.9" fill="#444"/><rect x="371.6" y="851.2" width="0.9" height="0.9" fill="#fff"/><rect x="369.7" y="851.8" width="0.9" height="0.9" fill="#fff"/><rect x="374.6" y="859.9" width="0.9" height="0.9" fill="#fff"/><rect x="368.0" y="848.9" width="0.9" height="0.9" fill="#fff"/><rect x="373.0" y="862.4" width="0.9" height="0.9" fill="#fff"/><rect x="374.8" y="843.7" width="0.9" height="0.9" fill="#fff"/><rect x="369.4" y="849.9" width="0.9" height="0.9" fill="#444"/><rect x="371.8" y="843.9" width="0.9" height="0.9" fill="#fff"/><rect x="365.0" y="850.7" width="0.9" height="0.9" fill="#444"/><rect x="377.2" y="860.3" width="0.9" height="0.9" fill="#444"/><rect x="380.5" y="854.2" width="0.9" height="0.9" fill="#fff"/><rect x="368.0" y="846.1" width="0.9" height="0.9" fill="#444"/><rect x="363.6" y="851.3" width="0.9" height="0.9" fill="#fff"/><rect x="378.1" y="859.5" width="0.9" height="0.9" fill="#444"/><rect x="365.3" y="857.4" width="0.9" height="0.9" fill="#444"/><rect x="373.2" y="844.5" width="0.9" height="0.9" fill="#444"/><rect x="368.6" y="857.6" width="0.9" height="0.9" fill="#fff"/><rect x="379.3" y="849.2" width="0.9" height="0.9" fill="#444"/><rect x="369.5" y="850.4" width="0.9" height="0.9" fill="#fff"/><rect x="370.7" y="854.1" width="0.9" height="0.9" fill="#444"/><rect x="374.0" y="844.1" width="0.9" height="0.9" fill="#444"/><rect x="364.1" y="853.3" width="0.9" height="0.9" fill="#fff"/><rect x="371.7" y="849.6" width="1.4" height="1.6" fill="#222"/><rect x="371.7" y="855.4" width="1.4" height="1.4" fill="#222"/><rect x="384" y="842" width="21" height="22" fill="#000"/><path d="M392.48 843.10C393.07 843.07 393.43 843.43 393.90 843.46C394.38 843.48 394.70 843.23 395.33 843.26C395.97 843.28 397.12 843.48 397.71 843.61C398.31 843.75 398.57 843.81 398.89 844.05C399.20 844.29 399.39 844.73 399.61 845.08C399.83 845.43 399.93 845.60 400.21 846.13C400.48 846.65 400.94 847.53 401.27 848.23C401.61 848.93 401.95 849.63 402.23 850.33C402.51 851.03 402.74 851.73 402.93 852.43C403.13 853.13 403.33 853.83 403.40 854.52C403.48 855.22 403.52 855.93 403.40 856.62C403.29 857.32 402.94 858.18 402.70 858.70C402.46 859.22 402.27 859.40 401.98 859.75C401.68 860.10 401.31 860.45 400.91 860.80C400.52 861.15 400.10 861.57 399.61 861.85C399.12 862.13 398.50 862.31 397.95 862.48C397.40 862.66 396.88 862.88 396.31 862.90C395.73 862.92 395.29 862.67 394.50 862.60C393.71 862.53 392.27 862.61 391.54 862.48C390.81 862.36 390.55 862.13 390.11 861.85C389.67 861.57 389.30 861.15 388.92 860.80C388.54 860.45 388.19 860.10 387.85 859.75C387.52 859.40 387.27 859.22 386.90 858.70C386.52 858.18 385.83 857.32 385.60 856.62C385.36 855.93 385.45 855.22 385.47 854.52C385.49 853.83 385.61 853.13 385.70 852.43C385.80 851.73 385.93 851.03 386.07 850.33C386.20 849.63 386.36 848.93 386.54 848.23C386.71 847.53 386.95 846.65 387.13 846.13C387.31 845.60 387.32 845.43 387.60 845.08C387.88 844.73 388.34 844.29 388.79 844.05C389.25 843.81 389.73 843.77 390.35 843.61C390.96 843.46 391.88 843.13 392.48 843.10Z" fill="#4A4A4A"/><rect x="401.7" y="858.6" width="0.9" height="0.9" fill="#fff"/><rect x="399.6" y="850.7" width="0.9" height="0.9" fill="#444"/><rect x="395.6" y="857.1" width="0.9" height="0.9" fill="#fff"/><rect x="398.0" y="852.1" width="0.9" height="0.9" fill="#444"/><rect x="385.9" y="858.2" width="0.9" height="0.9" fill="#444"/><rect x="395.1" y="860.1" width="0.9" height="0.9" fill="#fff"/><rect x="394.6" y="860.2" width="0.9" height="0.9" fill="#fff"/><rect x="395.5" y="850.8" width="0.9" height="0.9" fill="#444"/><rect x="387.6" y="847.3" width="0.9" height="0.9" fill="#444"/><rect x="390.1" y="843.9" width="0.9" height="0.9" fill="#444"/><rect x="390.8" y="850.7" width="0.9" height="0.9" fill="#444"/><rect x="396.8" y="853.9" width="0.9" height="0.9" fill="#444"/><rect x="394.6" y="850.4" width="0.9" height="0.9" fill="#444"/><rect x="393.2" y="852.3" width="0.9" height="0.9" fill="#fff"/><rect x="389.3" y="854.4" width="0.9" height="0.9" fill="#fff"/><rect x="394.6" y="857.7" width="0.9" height="0.9" fill="#fff"/><rect x="392.0" y="846.2" width="0.9" height="0.9" fill="#fff"/><rect x="394.4" y="847.8" width="0.9" height="0.9" fill="#444"/><rect x="391.7" y="844.1" width="0.9" height="0.9" fill="#444"/><rect x="399.9" y="846.9" width="0.9" height="0.9" fill="#fff"/><rect x="402.9" y="847.0" width="0.9" height="0.9" fill="#444"/><rect x="392.3" y="859.7" width="0.9" height="0.9" fill="#fff"/><rect x="389.0" y="856.1" width="0.9" height="0.9" fill="#fff"/><rect x="386.8" y="859.7" width="0.9" height="0.9" fill="#444"/><rect x="394.9" y="845.5" width="0.9" height="0.9" fill="#444"/><rect x="401.5" y="858.0" width="0.9" height="0.9" fill="#fff"/><rect x="385.9" y="849.3" width="0.9" height="0.9" fill="#fff"/><rect x="389.6" y="861.8" width="0.9" height="0.9" fill="#fff"/><rect x="401.9" y="844.3" width="0.9" height="0.9" fill="#fff"/><rect x="398.7" y="858.8" width="0.9" height="0.9" fill="#444"/><rect x="389.6" y="857.8" width="0.9" height="0.9" fill="#fff"/><rect x="395.2" y="848.0" width="0.9" height="0.9" fill="#444"/><rect x="394.0" y="849.1" width="0.9" height="0.9" fill="#fff"/><rect x="396.7" y="857.9" width="0.9" height="0.9" fill="#444"/><rect x="392.0" y="843.3" width="0.9" height="0.9" fill="#fff"/><rect x="386.1" y="857.9" width="0.9" height="0.9" fill="#fff"/><rect x="393.8" y="854.5" width="0.9" height="0.9" fill="#fff"/><rect x="402.2" y="843.5" width="0.9" height="0.9" fill="#444"/><rect x="387.4" y="846.8" width="0.9" height="0.9" fill="#fff"/><rect x="398.5" y="849.3" width="0.9" height="0.9" fill="#fff"/><rect x="401.3" y="856.8" width="0.9" height="0.9" fill="#444"/><rect x="388.5" y="862.5" width="0.9" height="0.9" fill="#444"/><rect x="391.7" y="858.4" width="0.9" height="0.9" fill="#444"/><rect x="399.6" y="847.2" width="0.9" height="0.9" fill="#444"/><rect x="397.7" y="854.9" width="0.9" height="0.9" fill="#444"/><rect x="397.8" y="856.3" width="0.9" height="0.9" fill="#444"/><rect x="394.0" y="849.6" width="1.4" height="1.6" fill="#222"/><rect x="394.0" y="855.4" width="1.4" height="1.4" fill="#222"/><rect x="318" y="866" width="20" height="21" fill="#000"/><path d="M326.07 867.05C326.64 867.02 326.98 867.36 327.43 867.39C327.89 867.42 328.19 867.18 328.79 867.20C329.40 867.23 330.50 867.42 331.06 867.54C331.63 867.67 331.88 867.72 332.18 867.96C332.48 868.19 332.66 868.61 332.87 868.94C333.08 869.27 333.17 869.44 333.44 869.94C333.70 870.44 334.13 871.28 334.45 871.95C334.77 872.61 335.10 873.28 335.36 873.95C335.63 874.62 335.85 875.28 336.03 875.95C336.22 876.62 336.41 877.29 336.48 877.96C336.55 878.62 336.59 879.29 336.48 879.96C336.37 880.62 336.04 881.45 335.81 881.94C335.58 882.44 335.40 882.61 335.12 882.94C334.84 883.28 334.48 883.61 334.11 883.95C333.73 884.28 333.34 884.68 332.87 884.95C332.40 885.22 331.81 885.39 331.29 885.55C330.76 885.72 330.27 885.93 329.72 885.95C329.17 885.97 328.76 885.73 328.00 885.67C327.24 885.60 325.88 885.67 325.18 885.55C324.48 885.43 324.24 885.22 323.82 884.95C323.40 884.68 323.04 884.28 322.69 883.95C322.33 883.61 321.99 883.28 321.67 882.94C321.35 882.61 321.12 882.44 320.76 881.94C320.40 881.45 319.75 880.62 319.52 879.96C319.29 879.29 319.38 878.62 319.40 877.96C319.42 877.29 319.53 876.62 319.62 875.95C319.72 875.28 319.84 874.62 319.97 873.95C320.10 873.28 320.25 872.61 320.41 871.95C320.58 871.28 320.81 870.44 320.98 869.94C321.15 869.44 321.17 869.27 321.43 868.94C321.69 868.61 322.13 868.19 322.56 867.96C323.00 867.72 323.46 867.69 324.04 867.54C324.63 867.39 325.51 867.08 326.07 867.05Z" fill="#C8C8C8"/><rect x="327.5" y="873.3" width="1.4" height="1.5" fill="#222"/><rect x="327.5" y="878.8" width="1.4" height="1.3" fill="#222"/><rect x="339.5" y="866" width="21.0" height="21" fill="#000"/><path d="M347.98 867.05C348.57 867.02 348.93 867.36 349.40 867.39C349.88 867.42 350.20 867.18 350.83 867.20C351.47 867.23 352.62 867.42 353.21 867.54C353.81 867.67 354.07 867.72 354.39 867.96C354.70 868.19 354.89 868.61 355.11 868.94C355.33 869.27 355.43 869.44 355.71 869.94C355.98 870.44 356.44 871.28 356.77 871.95C357.11 872.61 357.45 873.28 357.73 873.95C358.01 874.62 358.24 875.28 358.43 875.95C358.63 876.62 358.83 877.29 358.90 877.96C358.98 878.62 359.02 879.29 358.90 879.96C358.79 880.62 358.44 881.45 358.20 881.94C357.96 882.44 357.77 882.61 357.48 882.94C357.18 883.28 356.81 883.61 356.41 883.95C356.02 884.28 355.60 884.68 355.11 884.95C354.62 885.22 354.00 885.39 353.45 885.55C352.90 885.72 352.38 885.93 351.81 885.95C351.23 885.97 350.79 885.73 350.00 885.67C349.21 885.60 347.77 885.67 347.04 885.55C346.31 885.43 346.05 885.22 345.61 884.95C345.17 884.68 344.80 884.28 344.42 883.95C344.04 883.61 343.69 883.28 343.35 882.94C343.02 882.61 342.77 882.44 342.40 881.94C342.02 881.45 341.33 880.62 341.10 879.96C340.86 879.29 340.95 878.62 340.97 877.96C340.99 877.29 341.11 876.62 341.20 875.95C341.30 875.28 341.43 874.62 341.57 873.95C341.70 873.28 341.86 872.61 342.04 871.95C342.21 871.28 342.45 870.44 342.63 869.94C342.81 869.44 342.82 869.27 343.10 868.94C343.38 868.61 343.84 868.19 344.29 867.96C344.75 867.72 345.23 867.69 345.85 867.54C346.46 867.39 347.38 867.08 347.98 867.05Z" fill="#C8C8C8"/><rect x="349.5" y="873.3" width="1.4" height="1.5" fill="#222"/><rect x="349.5" y="878.8" width="1.4" height="1.3" fill="#222"/><rect x="362" y="866" width="20.5" height="21" fill="#000"/><path d="M370.28 867.05C370.85 867.02 371.20 867.36 371.67 867.39C372.13 867.42 372.44 867.18 373.06 867.20C373.68 867.23 374.81 867.42 375.39 867.54C375.97 867.67 376.23 867.72 376.53 867.96C376.84 868.19 377.02 868.61 377.24 868.94C377.45 869.27 377.55 869.44 377.82 869.94C378.09 870.44 378.53 871.28 378.86 871.95C379.19 872.61 379.53 873.28 379.80 873.95C380.07 874.62 380.29 875.28 380.48 875.95C380.67 876.62 380.87 877.29 380.94 877.96C381.02 878.62 381.06 879.29 380.94 879.96C380.83 880.62 380.49 881.45 380.25 881.94C380.02 882.44 379.84 882.61 379.55 882.94C379.26 883.28 378.89 883.61 378.51 883.95C378.12 884.28 377.72 884.68 377.24 884.95C376.76 885.22 376.16 885.39 375.62 885.55C375.08 885.72 374.57 885.93 374.01 885.95C373.45 885.97 373.03 885.73 372.25 885.67C371.47 885.60 370.07 885.67 369.36 885.55C368.64 885.43 368.39 885.22 367.97 884.95C367.54 884.68 367.17 884.28 366.80 883.95C366.44 883.61 366.09 883.28 365.76 882.94C365.43 882.61 365.20 882.44 364.83 881.94C364.46 881.45 363.79 880.62 363.56 879.96C363.33 879.29 363.42 878.62 363.44 877.96C363.45 877.29 363.57 876.62 363.66 875.95C363.76 875.28 363.88 874.62 364.02 873.95C364.15 873.28 364.30 872.61 364.48 871.95C364.65 871.28 364.88 870.44 365.06 869.94C365.23 869.44 365.25 869.27 365.52 868.94C365.79 868.61 366.23 868.19 366.68 867.96C367.13 867.72 367.60 867.69 368.20 867.54C368.79 867.39 369.70 867.08 370.28 867.05Z" fill="#C8C8C8"/><rect x="371.7" y="873.3" width="1.4" height="1.5" fill="#222"/><rect x="371.7" y="878.8" width="1.4" height="1.3" fill="#222"/><rect x="384" y="866" width="21" height="21" fill="#000"/><path d="M392.48 867.05C393.07 867.02 393.43 867.36 393.90 867.39C394.38 867.42 394.70 867.18 395.33 867.20C395.97 867.23 397.12 867.42 397.71 867.54C398.31 867.67 398.57 867.72 398.89 867.96C399.20 868.19 399.39 868.61 399.61 868.94C399.83 869.27 399.93 869.44 400.21 869.94C400.48 870.44 400.94 871.28 401.27 871.95C401.61 872.61 401.95 873.28 402.23 873.95C402.51 874.62 402.74 875.28 402.93 875.95C403.13 876.62 403.33 877.29 403.40 877.96C403.48 878.62 403.52 879.29 403.40 879.96C403.29 880.62 402.94 881.45 402.70 881.94C402.46 882.44 402.27 882.61 401.98 882.94C401.68 883.28 401.31 883.61 400.91 883.95C400.52 884.28 400.10 884.68 399.61 884.95C399.12 885.22 398.50 885.39 397.95 885.55C397.40 885.72 396.88 885.93 396.31 885.95C395.73 885.97 395.29 885.73 394.50 885.67C393.71 885.60 392.27 885.67 391.54 885.55C390.81 885.43 390.55 885.22 390.11 884.95C389.67 884.68 389.30 884.28 388.92 883.95C388.54 883.61 388.19 883.28 387.85 882.94C387.52 882.61 387.27 882.44 386.90 881.94C386.52 881.45 385.83 880.62 385.60 879.96C385.36 879.29 385.45 878.62 385.47 877.96C385.49 877.29 385.61 876.62 385.70 875.95C385.80 875.28 385.93 874.62 386.07 873.95C386.20 873.28 386.36 872.61 386.54 871.95C386.71 871.28 386.95 870.44 387.13 869.94C387.31 869.44 387.32 869.27 387.60 868.94C387.88 868.61 388.34 868.19 388.79 867.96C389.25 867.72 389.73 867.69 390.35 867.54C390.96 867.39 391.88 867.08 392.48 867.05Z" fill="#4A4A4A"/><rect x="394.0" y="873.3" width="1.4" height="1.5" fill="#222"/><rect x="394.0" y="878.8" width="1.4" height="1.3" fill="#222"/><rect x="406" y="782" width="2.5" height="36" fill="url(#gbar)"/><rect x="406" y="822" width="3" height="65" fill="url(#gbar)"/><line x1="307" y1="891.5" x2="360" y2="891.5" stroke="#C4C4C4" stroke-width="0.8"/><line x1="316" y1="894" x2="345" y2="894" stroke="#C4C4C4" stroke-width="0.8"/><line x1="316" y1="897" x2="425" y2="897" stroke="#C4C4C4" stroke-width="0.8"/><line x1="316" y1="900" x2="426" y2="900" stroke="#C4C4C4" stroke-width="0.8"/><line x1="316" y1="903" x2="433" y2="903" stroke="#C4C4C4" stroke-width="0.8"/><rect x="336.5" y="960.5" width="64" height="70" fill="#fff" stroke="#000" stroke-width="1.2"/><line x1="352" y1="966" x2="368" y2="966" stroke="#999" stroke-width="0.8"/><rect x="345.5" y="968" width="28.5" height="16" fill="#fff" stroke="#aaa" stroke-width="0.5"/><rect x="348" y="972" width="2.2" height="12" fill="#7070D0"/><rect x="350.4" y="979" width="2.2" height="5" fill="#E88080"/><rect x="355" y="978" width="2.2" height="6" fill="#7070D0"/><rect x="357.4" y="979" width="2.2" height="5" fill="#E88080"/><rect x="362" y="979" width="2.2" height="5" fill="#7070D0"/><rect x="364.4" y="981" width="2.2" height="3" fill="#E88080"/><rect x="368.5" y="980" width="2.2" height="4" fill="#7070D0"/><rect x="370.9" y="982" width="2.2" height="2" fill="#E88080"/><rect x="375" y="971" width="3" height="1.2" fill="#7070D0"/><rect x="375" y="973.5" width="3" height="1.2" fill="#E88080"/><line x1="379" y1="971.5" x2="391" y2="971.5" stroke="#bbb" stroke-width="0.6"/><line x1="379" y1="974" x2="391" y2="974" stroke="#bbb" stroke-width="0.6"/><rect x="330" y="977" width="2.5" height="0.8" fill="#E08080"/><line x1="352" y1="987" x2="366" y2="987" stroke="#ccc" stroke-width="0.6"/><line x1="352" y1="993" x2="368" y2="993" stroke="#999" stroke-width="0.8"/><rect x="345.5" y="995" width="28.5" height="16" fill="#fff" stroke="#aaa" stroke-width="0.5"/><rect x="348" y="999" width="2.2" height="12" fill="#7070D0"/><rect x="350.4" y="1006" width="2.2" height="5" fill="#E88080"/><rect x="355" y="1005" width="2.2" height="6" fill="#7070D0"/><rect x="357.4" y="1006" width="2.2" height="5" fill="#E88080"/><rect x="362" y="1006" width="2.2" height="5" fill="#7070D0"/><rect x="364.4" y="1008" width="2.2" height="3" fill="#E88080"/><rect x="368.5" y="1007" width="2.2" height="4" fill="#7070D0"/><rect x="370.9" y="1009" width="2.2" height="2" fill="#E88080"/><rect x="375" y="998" width="3" height="1.2" fill="#7070D0"/><rect x="375" y="1000.5" width="3" height="1.2" fill="#E88080"/><line x1="379" y1="998.5" x2="391" y2="998.5" stroke="#bbb" stroke-width="0.6"/><line x1="379" y1="1001" x2="391" y2="1001" stroke="#bbb" stroke-width="0.6"/><rect x="330" y="1004" width="2.5" height="0.8" fill="#E08080"/><line x1="352" y1="1014" x2="366" y2="1014" stroke="#ccc" stroke-width="0.6"/><line x1="352" y1="1020" x2="368" y2="1020" stroke="#999" stroke-width="0.8"/><rect x="345.5" y="1022" width="28.5" height="16" fill="#fff" stroke="#aaa" stroke-width="0.5"/><rect x="348" y="1026" width="2.2" height="12" fill="#7070D0"/><rect x="350.4" y="1033" width="2.2" height="5" fill="#E88080"/><rect x="355" y="1032" width="2.2" height="6" fill="#7070D0"/><rect x="357.4" y="1033" width="2.2" height="5" fill="#E88080"/><rect x="362" y="1033" width="2.2" height="5" fill="#7070D0"/><rect x="364.4" y="1035" width="2.2" height="3" fill="#E88080"/><rect x="368.5" y="1034" width="2.2" height="4" fill="#7070D0"/><rect x="370.9" y="1036" width="2.2" height="2" fill="#E88080"/><rect x="375" y="1025" width="3" height="1.2" fill="#7070D0"/><rect x="375" y="1027.5" width="3" height="1.2" fill="#E88080"/><line x1="379" y1="1025.5" x2="391" y2="1025.5" stroke="#bbb" stroke-width="0.6"/><line x1="379" y1="1028" x2="391" y2="1028" stroke="#bbb" stroke-width="0.6"/><rect x="330" y="1031" width="2.5" height="0.8" fill="#E08080"/><line x1="352" y1="1041" x2="366" y2="1041" stroke="#ccc" stroke-width="0.6"/><line x1="408" y1="1026.5" x2="472" y2="1026.5" stroke="#bbb" stroke-width="0.8"/><use href="#slide3" transform="translate(272 468) scale(0.1785) translate(-567 -211)"/><rect x="282.5" y="504" width="109" height="74" fill="none" stroke="#000" stroke-width="0.9"/><line x1="0" y1="1027.5" x2="1920" y2="1027.5" stroke="#D5D5D5" stroke-width="1"/><rect x="0" y="1028" width="1920" height="22" fill="#D24726"/><text x="7" y="1042.7" font-size="11" fill="#fff" textLength="70" lengthAdjust="spacingAndGlyphs">SLIDE 3 OF 15</text><path d="M97.5 1033.5H103.5V1044.5H97.5ZM103.5 1033.5H109V1044.5H103.5" fill="none" stroke="#fff" stroke-width="1"/><path d="M105 1037L109.5 1041.5M109.5 1037L105 1041.5" fill="none" stroke="#fff" stroke-width="1.2"/><text x="128" y="1042.7" font-size="11" fill="#fff" textLength="82" lengthAdjust="spacingAndGlyphs">ENGLISH (INDIA)</text><path d="M1397 1040.5H1409M1397 1043.5H1409M1397 1046H1409M1400 1037.5H1406" fill="none" stroke="#fff" stroke-width="1"/><path d="M1400 1035.5L1403 1032.5L1406 1035.5Z" fill="#fff"/><text x="1414" y="1042.7" font-size="11" fill="#fff" textLength="34" lengthAdjust="spacingAndGlyphs">NOTES</text><path d="M1469 1033H1483V1043H1475L1472 1046.5V1043H1469Z" fill="#fff"/><text x="1485" y="1042.7" font-size="11" fill="#fff" textLength="61" lengthAdjust="spacingAndGlyphs">COMMENTS</text><rect x="1565" y="1028" width="38" height="22" fill="#B83E1F"/><rect x="1577.5" y="1033.5" width="14" height="11" fill="none" stroke="#fff" stroke-width="1.3"/><rect x="1580" y="1035.5" width="6" height="6" fill="#fff"/><line x1="1577.5" y1="1042" x2="1591.5" y2="1042" stroke="#fff" stroke-width="1"/><rect x="1614" y="1033" width="6.5" height="5.5" fill="#fff"/><rect x="1623" y="1033" width="6.5" height="5.5" fill="#fff"/><rect x="1614" y="1040" width="6.5" height="5.5" fill="#fff"/><rect x="1623" y="1040" width="6.5" height="5.5" fill="#fff"/><path d="M1652.5 1034.5Q1656 1033 1659.5 1035Q1663 1033 1666.5 1034.5V1045Q1663 1043.5 1659.5 1045.5Q1656 1043.5 1652.5 1045Z" fill="none" stroke="#fff" stroke-width="1.1"/><line x1="1659.5" y1="1035" x2="1659.5" y2="1045.5" stroke="#fff" stroke-width="1"/><rect x="1691.5" y="1034" width="13" height="5" fill="none" stroke="#fff" stroke-width="1.1"/><path d="M1698 1039V1045M1694.5 1045.5H1701.5" fill="none" stroke="#fff" stroke-width="1.1"/><rect x="1722" y="1038.5" width="5" height="1.5" fill="#fff"/><line x1="1732" y1="1039.5" x2="1832" y2="1039.5" stroke="#F2C6B8" stroke-width="1"/><rect x="1781.5" y="1034" width="3" height="11" fill="#fff"/><path d="M1835 1039.5H1844M1839.5 1035V1044" fill="none" stroke="#fff" stroke-width="1.6"/><text x="1859" y="1042.7" font-size="11" fill="#fff" textLength="27" lengthAdjust="spacingAndGlyphs">103%</text><rect x="1900.5" y="1033.5" width="13" height="12" fill="none" stroke="#fff" stroke-width="1"/><path d="M1903 1036L1906 1039M1911 1036L1908 1039M1903 1043L1906 1040M1911 1043L1908 1040" fill="none" stroke="#fff" stroke-width="1"/><rect x="0" y="1050" width="1920" height="30" fill="#181E08"/><path d="M10 1058.5L17 1057.5V1064.5H10ZM18 1057.4L26 1056.2V1064.5H18ZM10 1065.5H17V1072.5L10 1071.5ZM18 1065.5H26V1073.8L18 1072.6Z" fill="#fff"/><circle cx="57" cy="1063" r="5.3" fill="none" stroke="#fff" stroke-width="1.3"/><line x1="53" y1="1067" x2="46.5" y2="1073.5" stroke="#fff" stroke-width="1.4"/><rect x="84.5" y="1058.5" width="11.5" height="14" fill="none" stroke="#fff" stroke-width="1.2"/><path d="M82 1060.5H80.5V1070.5H82M98.5 1060.5H100V1070.5H98.5" fill="none" stroke="#fff" stroke-width="1.1"/><line x1="113.5" y1="1058" x2="113.5" y2="1073" stroke="#555a45" stroke-width="1"/><line x1="116.5" y1="1058" x2="116.5" y2="1073" stroke="#555a45" stroke-width="1"/><path d="M140 1059H146L147.5 1060.5H156V1072H140Z" fill="#F3CF5C"/><rect x="140" y="1062" width="16" height="10" fill="#F8DD78"/><path d="M143 1072V1066.5H153V1072H150.5V1069H145.5V1072Z" fill="#2DA4E8"/><rect x="134" y="1078" width="28" height="2" fill="#D8F0B0"/><circle cx="185" cy="1065" r="7" fill="#DB4437"/><path d="M185 1065L178.9 1061.5A7 7 0 0 0 181.5 1071.1Z" fill="#0F9D58"/><path d="M185 1065L181.5 1071.1A7 7 0 0 0 192 1065Z" fill="#F4B400"/><circle cx="185" cy="1065" r="3.3" fill="#fff"/><circle cx="185" cy="1065" r="2.5" fill="#4285F4"/><rect x="171" y="1078" width="28" height="2" fill="#D8F0B0"/><path d="M214 1066L220 1063L225 1058L230 1071L226 1068L222 1072Z" fill="#C9522A"/><path d="M214 1066L220 1063L222 1067Z" fill="#3C7FC2"/><path d="M258 1057V1066M256 1073H263M259 1066V1073" fill="none" stroke="#D49A2A" stroke-width="1.6"/><circle cx="259.5" cy="1068" r="2" fill="none" stroke="#D49A2A" stroke-width="1"/><path d="M288 1059L297 1057.5V1073.5L288 1072Z" fill="#2B5797"/><rect x="296" y="1060" width="8" height="11" fill="#fff" stroke="#2B5797" stroke-width="1"/><text x="288.6" y="1068.8" font-size="8" fill="#fff" font-weight="bold" textLength="8" lengthAdjust="spacingAndGlyphs">W</text><line x1="298" y1="1063" x2="303" y2="1063" stroke="#2B5797" stroke-width="1"/><line x1="298" y1="1065.5" x2="303" y2="1065.5" stroke="#2B5797" stroke-width="1"/><line x1="298" y1="1068" x2="303" y2="1068" stroke="#2B5797" stroke-width="1"/><rect x="282" y="1078" width="28" height="2" fill="#D8F0B0"/><rect x="315" y="1050" width="36" height="30" fill="#40462F"/><path d="M325 1059L334 1057.5V1073.5L325 1072Z" fill="#D24726"/><rect x="333" y="1060" width="8" height="11" fill="#fff" stroke="#D24726" stroke-width="1"/><text x="326.3" y="1069" font-size="9.5" fill="#fff" font-weight="bold" textLength="6.5" lengthAdjust="spacingAndGlyphs">P</text><line x1="335" y1="1063.5" x2="339" y2="1063.5" stroke="#D24726" stroke-width="1"/><line x1="335" y1="1066" x2="339" y2="1066" stroke="#D24726" stroke-width="1"/><line x1="335" y1="1068.5" x2="339" y2="1068.5" stroke="#D24726" stroke-width="1"/><rect x="315" y="1078" width="36" height="2" fill="#D8F0B0"/><ellipse cx="369" cy="1066" rx="7" ry="5.5" fill="#CFE4F4"/><circle cx="366" cy="1063.5" r="1.3" fill="#E03030"/><circle cx="369.5" cy="1062.5" r="1.3" fill="#30A030"/><circle cx="365.5" cy="1067" r="1.3" fill="#3050C0"/><line x1="376" y1="1059" x2="375" y2="1072" stroke="#E87A20" stroke-width="1.8"/><rect x="356" y="1078" width="28" height="2" fill="#D8F0B0"/><path d="M400 1059L408 1057L408 1072L400 1070Z" fill="#9FB8E8"/><path d="M408 1057L412 1060V1073L408 1072Z" fill="#7A40B0"/><path d="M410 1064L416 1068L414 1072Z" fill="#E0B020"/><rect x="393" y="1078" width="28" height="2" fill="#D8F0B0"/><line x1="1325.5" y1="1058" x2="1325.5" y2="1076" stroke="#555a45" stroke-width="1"/><text x="1338" y="1069" font-size="12" fill="#C8C8C8" textLength="41" lengthAdjust="spacingAndGlyphs">Address</text><rect x="1386" y="1056" width="226" height="20" fill="#fff"/><line x1="1592.5" y1="1057" x2="1592.5" y2="1075" stroke="#DDD" stroke-width="1"/><path d="M1577.5 1064.5L1581.5 1068.5L1585.5 1064.5" fill="none" stroke="#555" stroke-width="1.1"/><path d="M1605.5 1062.5A5 5 0 1 1 1598.5 1064" fill="none" stroke="#888" stroke-width="1.2"/><path d="M1603.5 1060L1606.5 1062.5L1603 1064Z" fill="#888"/><line x1="1627.5" y1="1058" x2="1627.5" y2="1076" stroke="#555a45" stroke-width="1"/><text x="1640" y="1070" font-size="12" fill="#C8C8C8" textLength="42" lengthAdjust="spacingAndGlyphs">Desktop</text><text x="1691" y="1063" font-size="10" fill="#fff">»</text><path d="M1710.5 1067.5L1716.5 1061.5L1722.5 1067.5" fill="none" stroke="#fff" stroke-width="1.3"/><rect x="1732.5" y="1059.5" width="12" height="9" fill="none" stroke="#fff" stroke-width="1.1"/><path d="M1738.5 1068.5V1072M1734.5 1072.5H1742.5" fill="none" stroke="#fff" stroke-width="1.1"/><path d="M1755.5 1062.5H1758.5L1762.5 1059V1071L1758.5 1067.5H1755.5Z" fill="none" stroke="#fff" stroke-width="1.1"/><path d="M1765 1062.5Q1767 1065 1765 1067.5M1767.5 1061Q1770.5 1065 1767.5 1069" fill="none" stroke="#aaa" stroke-width="1"/><path d="M1780.5 1058.5H1796.5V1069.5H1788L1785 1073V1069.5H1780.5Z" fill="#fff"/><line x1="1783" y1="1061.5" x2="1794" y2="1061.5" stroke="#181E08" stroke-width="1"/><line x1="1783" y1="1064.5" x2="1794" y2="1064.5" stroke="#181E08" stroke-width="1"/><line x1="1783" y1="1067" x2="1790" y2="1067" stroke="#181E08" stroke-width="1"/><text x="1806" y="1069" font-size="12" fill="#fff" textLength="23" lengthAdjust="spacingAndGlyphs">ENG</text><text x="1862" y="1068" font-size="12" fill="#fff" textLength="27" lengthAdjust="spacingAndGlyphs">21:20</text></svg></body></html>
